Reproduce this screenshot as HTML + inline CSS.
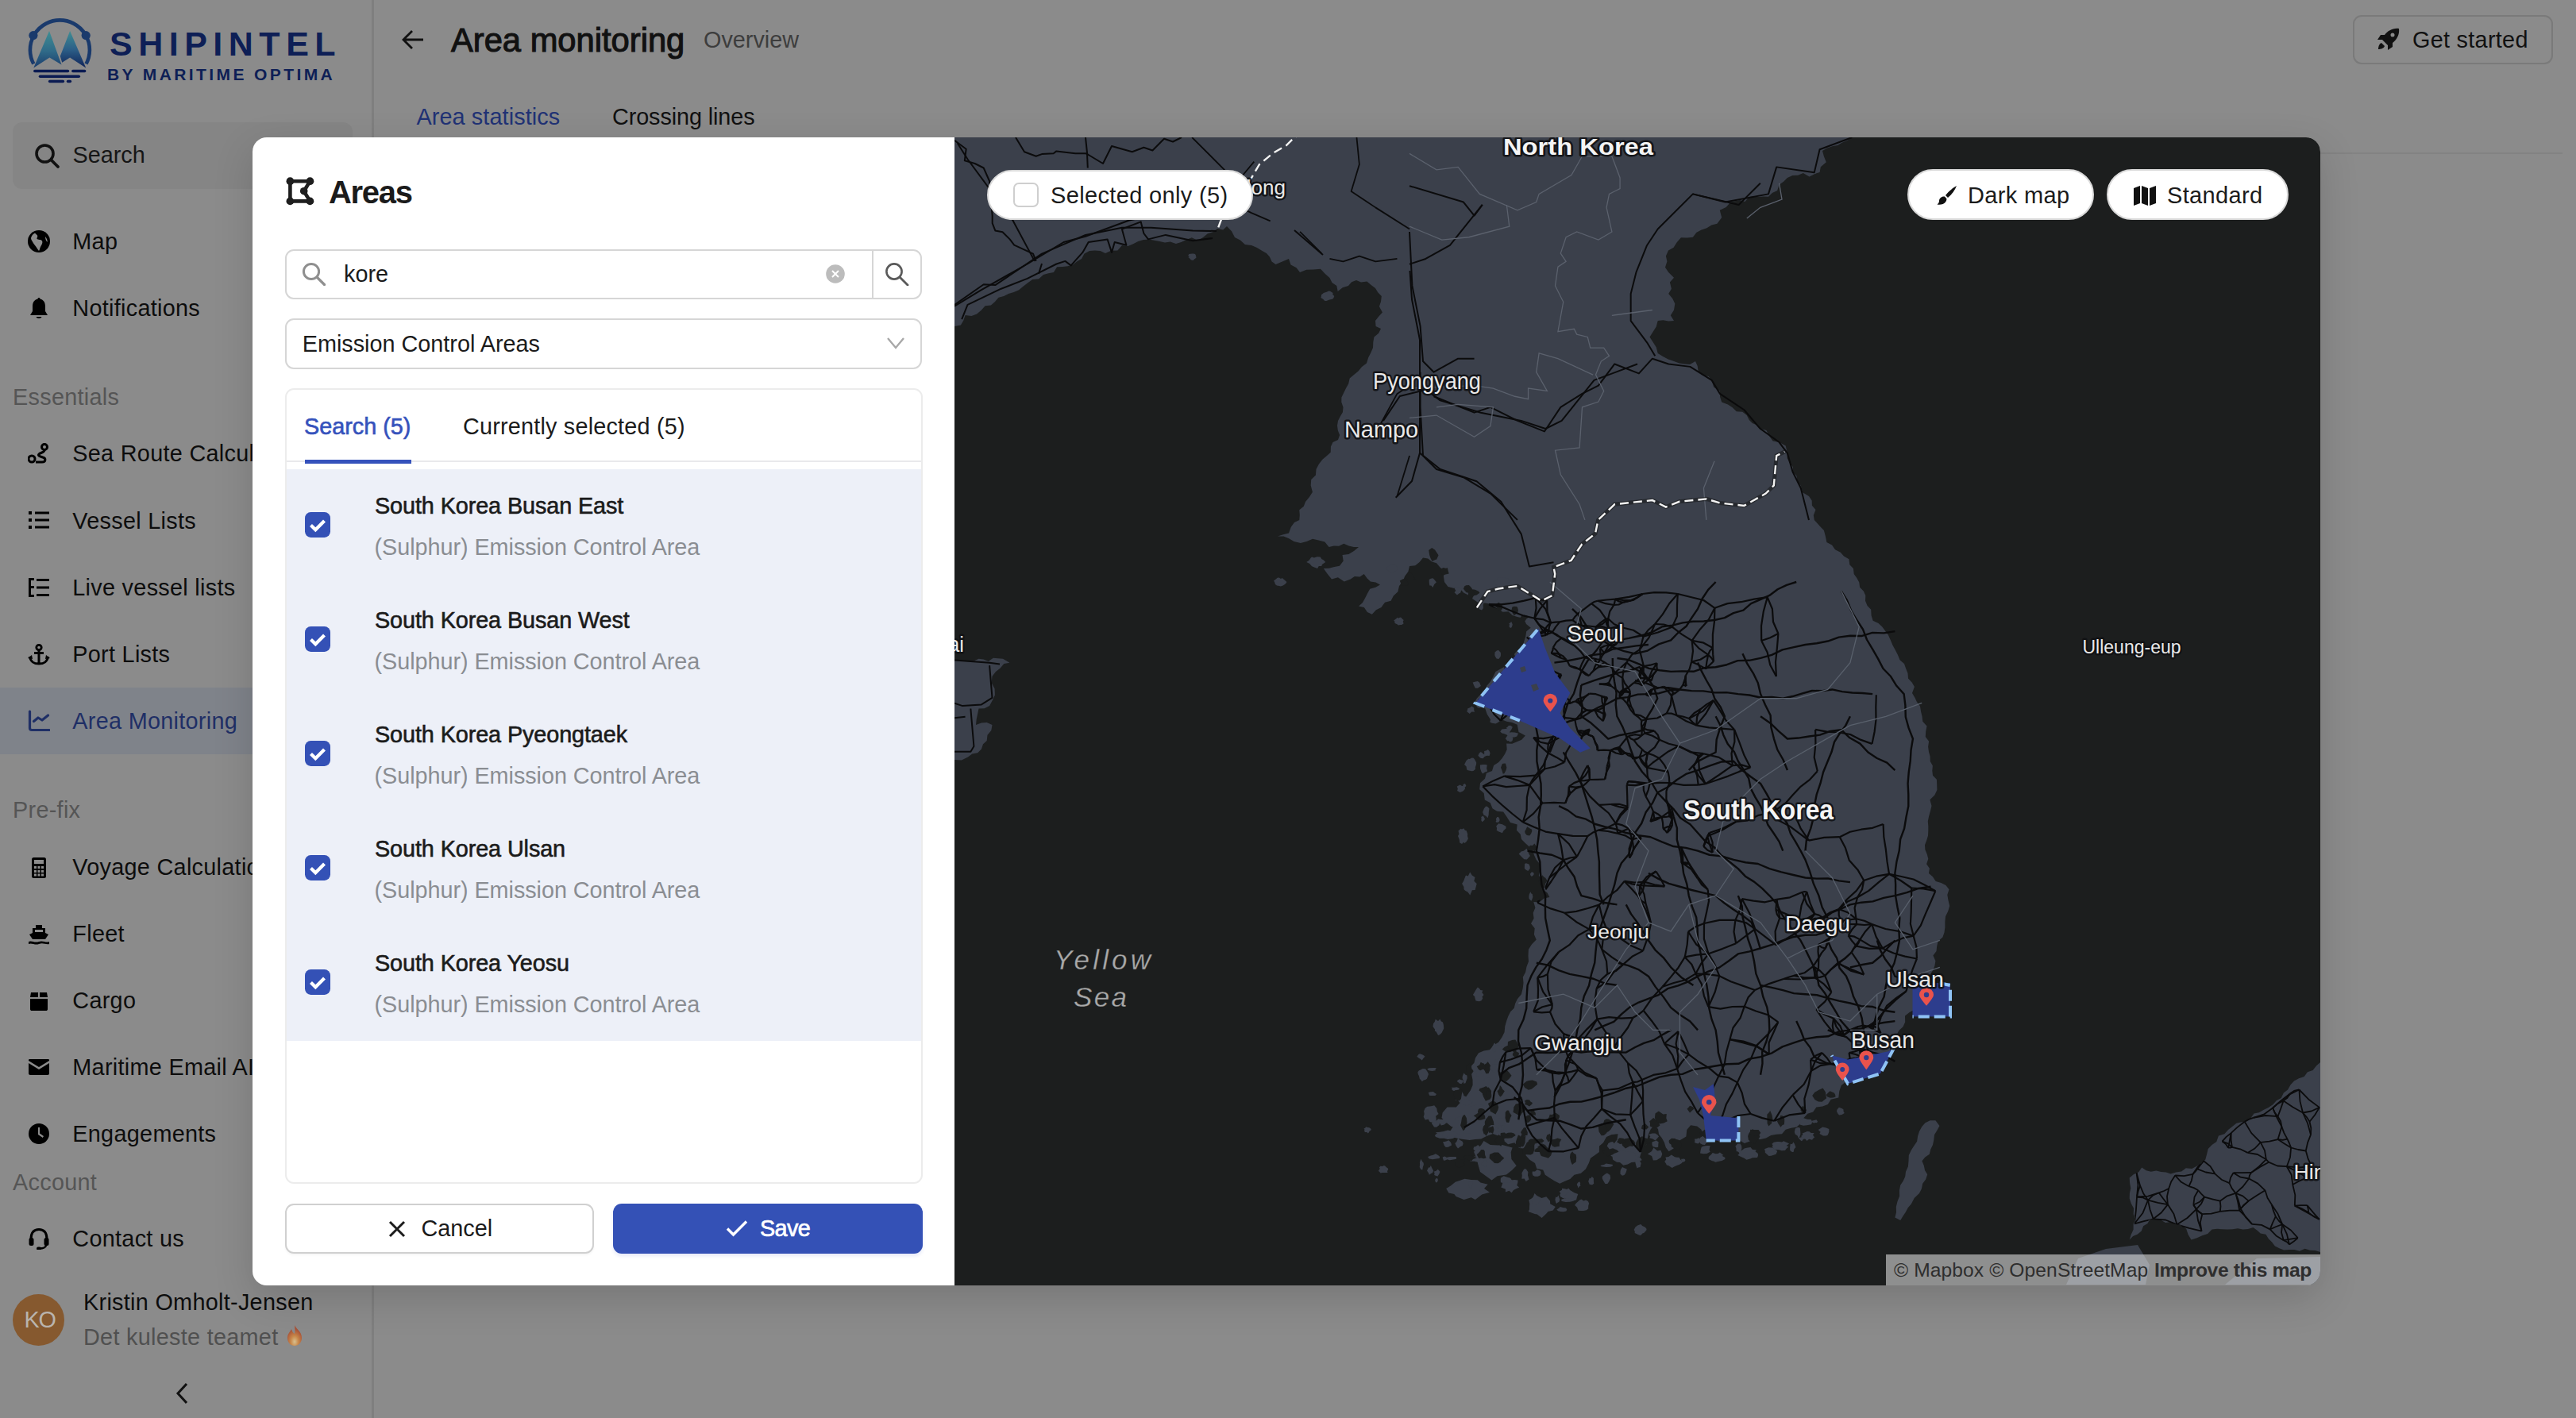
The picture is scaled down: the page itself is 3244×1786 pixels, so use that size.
<!DOCTYPE html>
<html><head><meta charset="utf-8"><style>
html,body{margin:0;padding:0;width:3244px;height:1786px;overflow:hidden;background:#fff;}
body{font-family:"Liberation Sans",sans-serif;position:relative;}
.t{position:absolute;line-height:1;white-space:nowrap;}
.r{position:absolute;box-sizing:border-box;}
svg{position:absolute;}
</style></head><body>
<div class="r" style="left:0;top:0;width:3244px;height:1786px;background:#8b8b8b"></div>
<div class="r" style="left:468px;top:0px;width:3px;height:1786px;background:#7f7f7f"></div>
<svg style="left:25px;top:15px" width="110" height="100" viewBox="0 0 110 100">
<defs><linearGradient id="lg1" x1="0" y1="0" x2="0" y2="1"><stop offset="0" stop-color="#3f8e93"/><stop offset="0.55" stop-color="#2f6a88"/><stop offset="1" stop-color="#1b3c6c"/></linearGradient>
<linearGradient id="lg2" x1="0" y1="0" x2="0" y2="1"><stop offset="0" stop-color="#3f8e93"/><stop offset="0.5" stop-color="#2c5f88"/><stop offset="1" stop-color="#0f2358"/></linearGradient></defs>
<path d="M17.3 65.5 A37.5 37.5 0 1 1 83.5 65.5" fill="none" stroke="#1a3a6c" stroke-width="4.6"/>
<circle cx="16.9" cy="29.6" r="5.6" fill="#1a3a6c"/><circle cx="83.2" cy="29.6" r="5.6" fill="#1a3a6c"/>
<polygon points="17.3,70.5 37,24 52.5,66.5 37.4,57.5" fill="url(#lg1)"/>
<polygon points="50.8,55.7 63.1,24 83.2,70.5 63.1,57.5 53.2,63.8" fill="url(#lg2)"/>
<g stroke="#0b1b52" stroke-width="3.5" stroke-linecap="round">
<line x1="18.8" y1="74.6" x2="60.5" y2="74.6"/><line x1="66.8" y1="74.6" x2="81.6" y2="74.6"/>
<line x1="25.5" y1="81.3" x2="74.3" y2="81.3"/>
<line x1="37.6" y1="87.4" x2="54.4" y2="87.4"/><line x1="60.5" y1="87.4" x2="63.4" y2="87.4"/>
</g></svg>
<div class="t" style="left:138px;top:34.1px;font-size:43px;color:#0e1f56;font-weight:700;letter-spacing:7.5px;">SHIPINTEL</div>
<div class="t" style="left:135px;top:82.9px;font-size:21px;color:#0e1f56;font-weight:700;letter-spacing:3.4px;">BY MARITIME OPTIMA</div>
<div class="r" style="left:16px;top:154px;width:428px;height:84px;background:#858585;border-radius:12px"></div>
<svg style="left:43px;top:180px" width="33" height="33" viewBox="0 0 33 33"><circle cx="13.5" cy="13.5" r="10.5" fill="none" stroke="#111" stroke-width="3.6"/><line x1="21.5" y1="21.5" x2="30" y2="30" stroke="#111" stroke-width="3.8" stroke-linecap="round"/></svg>
<div class="t" style="left:91.5px;top:181.1px;font-size:28.8px;color:#161616;font-weight:400;letter-spacing:0px;">Search</div>
<div class="r" style="left:0px;top:866px;width:468px;height:84px;background:#7f838a"></div>
<svg style="left:35px;top:290.3px" width="28" height="28" viewBox="0 0 28 28"><circle cx="14" cy="14" r="14" fill="#000"/><path d="M9 3.5 C11 6 13 5.5 12 9 C10 11 13 12 16 12 C19 13 19 16 17 19 C15 22 15 25 14 26 C12 24 11 21 9 19 C7 17 6 14 4.5 12 C3 9 6 5 9 3.5Z M22 8 C24 10 25 13 24.5 15 C23 13 22 11 22 8Z" fill="#8b8b8b"/></svg>
<div class="t" style="left:91.3px;top:289.9px;font-size:28.8px;color:#0d0d0d;font-weight:400;letter-spacing:0.3px;">Map</div>
<svg style="left:35px;top:374px" width="28" height="28" viewBox="0 0 28 28"><path d="M14 1 C15 1 15.5 1.7 15.5 2.5 C20 3.5 22 7 22 12 L22 18 L25 23 L3 23 L6 18 L6 12 C6 7 8 3.5 12.5 2.5 C12.5 1.7 13 1 14 1Z M10.5 25 L17.5 25 C17 27.5 11 27.5 10.5 25Z" fill="#000"/></svg>
<div class="t" style="left:91.3px;top:373.6px;font-size:28.8px;color:#0d0d0d;font-weight:400;letter-spacing:0.3px;">Notifications</div>
<svg style="left:35px;top:557.8px" width="28" height="28" viewBox="0 0 28 28"><circle cx="5" cy="20" r="4" fill="none" stroke="#000" stroke-width="3"/><circle cx="21" cy="5" r="3.5" fill="none" stroke="#000" stroke-width="3"/><path d="M21 9 C21 12 16 12 14 14 C12 16 16 17 19 18 C23 19 23 24 18 24 L10 24" fill="none" stroke="#000" stroke-width="3"/></svg>
<div class="t" style="left:91.3px;top:557.4px;font-size:28.8px;color:#0d0d0d;font-weight:400;letter-spacing:0.3px;">Sea Route Calculator</div>
<svg style="left:35px;top:642.2px" width="28" height="28" viewBox="0 0 28 28"><g fill="#000"><rect x="1" y="2" width="4" height="4"/><rect x="1" y="11" width="4" height="4"/><rect x="1" y="20" width="4" height="4"/><rect x="9" y="2.5" width="18" height="3"/><rect x="9" y="11.5" width="18" height="3"/><rect x="9" y="20.5" width="18" height="3"/></g></svg>
<div class="t" style="left:91.3px;top:641.8px;font-size:28.8px;color:#0d0d0d;font-weight:400;letter-spacing:0.3px;">Vessel Lists</div>
<svg style="left:35px;top:726.5px" width="28" height="28" viewBox="0 0 28 28"><g fill="#000"><rect x="1" y="1" width="3" height="24"/><rect x="1" y="22" width="7" height="3"/><rect x="1" y="11" width="7" height="3"/><rect x="1" y="1" width="7" height="3"/><rect x="11" y="2" width="16" height="3"/><rect x="11" y="11.5" width="16" height="3"/><rect x="11" y="21" width="16" height="3"/></g></svg>
<div class="t" style="left:91.3px;top:726.1px;font-size:28.8px;color:#0d0d0d;font-weight:400;letter-spacing:0.3px;">Live vessel lists</div>
<svg style="left:35px;top:810.8px" width="28" height="28" viewBox="0 0 28 28"><circle cx="14" cy="4.5" r="3.2" fill="none" stroke="#000" stroke-width="2.8"/><path d="M14 8 L14 25 M8 11.5 L20 11.5 M2.5 16 C3 22 8 25 14 25 C20 25 25 22 25.5 16" fill="none" stroke="#000" stroke-width="3"/><path d="M0 18 L5 14 L6 19Z M28 18 L23 14 L22 19Z" fill="#000"/></svg>
<div class="t" style="left:91.3px;top:810.4px;font-size:28.8px;color:#0d0d0d;font-weight:400;letter-spacing:0.3px;">Port Lists</div>
<svg style="left:35px;top:894px" width="28" height="28" viewBox="0 0 28 28"><path d="M2.5 2 L2.5 23 Q2.5 25.5 5 25.5 L27 25.5" fill="none" stroke="#1f2f66" stroke-width="3.2" stroke-linecap="round"/><path d="M7.5 14.5 L13 10 L18 13 L25.5 7" fill="none" stroke="#1f2f66" stroke-width="3.2" stroke-linejoin="round" stroke-linecap="round"/></svg>
<div class="t" style="left:91.3px;top:893.6px;font-size:28.8px;color:#1f2f66;font-weight:400;letter-spacing:0.3px;">Area Monitoring</div>
<svg style="left:35px;top:1078.5px" width="28" height="28" viewBox="0 0 28 28"><rect x="5" y="1" width="18" height="26" rx="2.5" fill="#000"/><rect x="8" y="4" width="12" height="5" fill="#8b8b8b"/><g fill="#8b8b8b"><rect x="8" y="12" width="3" height="3"/><rect x="12.5" y="12" width="3" height="3"/><rect x="17" y="12" width="3" height="3"/><rect x="8" y="17" width="3" height="3"/><rect x="12.5" y="17" width="3" height="3"/><rect x="17" y="17" width="3" height="3"/><rect x="8" y="21.5" width="3" height="3"/><rect x="12.5" y="21.5" width="3" height="3"/><rect x="17" y="21.5" width="3" height="3"/></g></svg>
<div class="t" style="left:91.3px;top:1078.1px;font-size:28.8px;color:#0d0d0d;font-weight:400;letter-spacing:0.3px;">Voyage Calculation</div>
<svg style="left:35px;top:1162.5px" width="28" height="28" viewBox="0 0 28 28"><path d="M10 2 L18 2 L18 6 L22 6 L22 12 L26 14 L22 20 L6 20 L2 14 L6 12 L6 6 L10 6Z" fill="#000"/><path d="M1 23 C5 21 8 25 14 23 C19 21 23 25 27 23 L27 26 C23 27 19 24 14 26 C9 28 5 24 1 26Z" fill="#000"/><rect x="9" y="8" width="10" height="3" fill="#8b8b8b"/></svg>
<div class="t" style="left:91.3px;top:1162.1px;font-size:28.8px;color:#0d0d0d;font-weight:400;letter-spacing:0.3px;">Fleet</div>
<svg style="left:35px;top:1246.5px" width="28" height="28" viewBox="0 0 28 28"><path d="M3 11 L25 11 L25 24 C25 25.5 24 26 23 26 L5 26 C4 26 3 25.5 3 24Z M4 3 L13 3 L13 9 L3 9Z M15 3 L24 3 L25 9 L15 9Z" fill="#000"/></svg>
<div class="t" style="left:91.3px;top:1246.1px;font-size:28.8px;color:#0d0d0d;font-weight:400;letter-spacing:0.3px;">Cargo</div>
<svg style="left:35px;top:1330.3px" width="28" height="28" viewBox="0 0 28 28"><path d="M2 4 L26 4 C27 4 27 5 27 6 L14 14 L1 6 C1 5 1 4 2 4Z M1 9 L14 17 L27 9 L27 22 C27 23 26 24 25 24 L3 24 C2 24 1 23 1 22Z" fill="#000"/></svg>
<div class="t" style="left:91.3px;top:1329.9px;font-size:28.8px;color:#0d0d0d;font-weight:400;letter-spacing:0.3px;">Maritime Email AI</div>
<svg style="left:35px;top:1414.3px" width="28" height="28" viewBox="0 0 28 28"><circle cx="14" cy="14" r="13" fill="#000"/><path d="M13 6 L15 6 L15 13.5 L20 17 L18.8 19 L13 15Z" fill="#8b8b8b"/></svg>
<div class="t" style="left:91.3px;top:1413.9px;font-size:28.8px;color:#0d0d0d;font-weight:400;letter-spacing:0.3px;">Engagements</div>
<svg style="left:35px;top:1546px" width="28" height="28" viewBox="0 0 28 28"><path d="M4 15 C4 6 8 2.5 14 2.5 C20 2.5 24 6 24 15" fill="none" stroke="#000" stroke-width="3"/><rect x="1.5" y="13" width="6" height="10" rx="2.5" fill="#000"/><rect x="20.5" y="13" width="6" height="10" rx="2.5" fill="#000"/><path d="M23 22 C23 25 19 26.5 15 26.5" fill="none" stroke="#000" stroke-width="2.5"/><rect x="11" y="24.5" width="6" height="4" rx="2" fill="#000"/></svg>
<div class="t" style="left:91.3px;top:1545.6px;font-size:28.8px;color:#0d0d0d;font-weight:400;letter-spacing:0.3px;">Contact us</div>
<div class="t" style="left:16px;top:485.6px;font-size:28.8px;color:#555555;font-weight:400;letter-spacing:0.3px;">Essentials</div>
<div class="t" style="left:16px;top:1006.1px;font-size:28.8px;color:#555555;font-weight:400;letter-spacing:0.3px;">Pre-fix</div>
<div class="t" style="left:16px;top:1474.6px;font-size:28.8px;color:#555555;font-weight:400;letter-spacing:0.3px;">Account</div>
<div class="r" style="left:16px;top:1630px;width:65px;height:65px;border-radius:50%;background:#86592f"></div>
<div class="t" style="left:30.5px;top:1648.1px;font-size:28.8px;color:#b9b4ae;font-weight:400;letter-spacing:-1.2px;">KO</div>
<div class="t" style="left:105px;top:1625.6px;font-size:28.8px;color:#0d0d0d;font-weight:400;letter-spacing:0.3px;">Kristin Omholt-Jensen</div>
<div class="t" style="left:105px;top:1669.6px;font-size:28.8px;color:#505050;font-weight:400;letter-spacing:0.3px;">Det kuleste teamet</div>
<svg style="left:359px;top:1668px" width="24" height="28" viewBox="0 0 24 28"><defs><radialGradient id="fl" cx="0.5" cy="0.8" r="0.6"><stop offset="0" stop-color="#d8c090"/><stop offset="0.45" stop-color="#c8884a"/><stop offset="1" stop-color="#a85238"/></radialGradient></defs><path d="M12 1 C14 6 21 9 21 17 C21 23 17 27 12 27 C7 27 3 23 3 17 C3 12 6 10 8 6 C9 9 10 11 12 12 C13 8 12 5 12 1Z" fill="url(#fl)"/></svg>
<svg style="left:218px;top:1740px" width="24" height="30" viewBox="0 0 24 30"><path d="M17 3 L6 15 L17 27" fill="none" stroke="#111" stroke-width="3"/></svg>
<svg style="left:504px;top:34px" width="32" height="32" viewBox="0 0 32 32"><path d="M29 16 L4 16 M15 5 L4 16 L15 27" fill="none" stroke="#111" stroke-width="2.8"/></svg>
<div class="t" style="left:568px;top:29.9px;font-size:41.7px;color:#111;font-weight:400;letter-spacing:0px;-webkit-text-stroke:1.1px #111">Area monitoring</div>
<div class="t" style="left:886px;top:35.6px;font-size:28.8px;color:#3d3d3d;font-weight:400;letter-spacing:0px;">Overview</div>
<div class="t" style="left:524.5px;top:133.4px;font-size:28.8px;color:#213275;font-weight:400;letter-spacing:0.1px;">Area statistics</div>
<div class="t" style="left:771px;top:133.4px;font-size:28.8px;color:#111;font-weight:400;letter-spacing:-0.1px;">Crossing lines</div>
<div class="r" style="left:471px;top:192px;width:2756px;height:2px;background:#838383"></div>
<div class="r" style="left:2963px;top:19px;width:252px;height:62px;border:2px solid #7a7a7a;border-radius:11px"></div>
<svg style="left:2993px;top:34px" width="30" height="30" viewBox="0 0 30 30"><path d="M28 2 C20 1 14 5 10 10 L5 10 L1 16 L7 16 L14 23 L14 29 L20 25 L20 20 C25 16 29 10 28 2Z" fill="#111"/><circle cx="20" cy="10" r="2.5" fill="#8b8b8b"/><path d="M6 20 C3 21 2 25 2 28 C5 28 9 27 10 24Z" fill="#111"/></svg>
<div class="t" style="left:3038px;top:36.1px;font-size:28.8px;color:#111;font-weight:400;letter-spacing:0.3px;">Get started</div>
<div class="r" style="left:318px;top:173px;width:2604px;height:1446px;border-radius:18px;box-shadow:0 16px 50px rgba(0,0,0,0.15);background:#fff"></div>
<svg style="left:358px;top:222px" width="40" height="38" viewBox="0 0 40 38"><path d="M7.4 6.2 L32.4 6.2 L24.7 18.7 L32.4 31.4 L7.4 31.4 Z" fill="none" stroke="#1e1e1e" stroke-width="4.6" stroke-linejoin="round"/><g fill="#1e1e1e"><circle cx="7.4" cy="6.2" r="4.9"/><circle cx="32.4" cy="6.2" r="4.9"/><circle cx="32.4" cy="31.4" r="4.9"/><circle cx="7.4" cy="31.4" r="4.9"/><circle cx="24.7" cy="18.7" r="4.8"/></g></svg>
<div class="t" style="left:414px;top:222.1px;font-size:40px;color:#1b1b1b;font-weight:700;letter-spacing:-1.3px;">Areas</div>
<div class="r" style="left:359px;top:314px;width:802px;height:63px;border:2px solid #d6d6d6;border-radius:11px;background:#fff"></div>
<div class="r" style="left:1098px;top:315px;width:2px;height:61px;background:#d6d6d6"></div>
<svg style="left:380px;top:330px" width="32" height="30" viewBox="0 0 32 30"><circle cx="12" cy="12" r="9.6" fill="none" stroke="#8f8f8f" stroke-width="3"/><line x1="19" y1="19" x2="28.5" y2="28.5" stroke="#8f8f8f" stroke-width="3.2" stroke-linecap="round"/></svg>
<div class="t" style="left:433px;top:330.6px;font-size:28.8px;color:#1b1b1b;font-weight:400;letter-spacing:0px;">kore</div>
<svg style="left:1039px;top:332px" width="26" height="26" viewBox="0 0 26 26"><circle cx="13" cy="13" r="11.8" fill="#bcbcbc"/><path d="M9 9 L17 17 M17 9 L9 17" stroke="#fff" stroke-width="2"/></svg>
<svg style="left:1114px;top:330px" width="32" height="30" viewBox="0 0 32 30"><circle cx="12" cy="12" r="9.6" fill="none" stroke="#5a5a5a" stroke-width="2.6"/><line x1="19" y1="19" x2="29" y2="29" stroke="#5a5a5a" stroke-width="2.8" stroke-linecap="round"/></svg>
<div class="r" style="left:359px;top:401px;width:802px;height:64px;border:2px solid #d6d6d6;border-radius:11px;background:#fff"></div>
<div class="t" style="left:380.7px;top:418.6px;font-size:28.8px;color:#1b1b1b;font-weight:400;letter-spacing:0px;">Emission Control Areas</div>
<svg style="left:1115px;top:423px" width="26" height="20" viewBox="0 0 26 20"><path d="M3 3 L13 15 L23 3" fill="none" stroke="#a8a8a8" stroke-width="2.4"/></svg>
<div class="r" style="left:359px;top:489px;width:803px;height:1002px;border:2px solid #ececec;border-radius:11px;background:#fff"></div>
<div class="t" style="left:383px;top:522.6px;font-size:28.8px;color:#3552bc;font-weight:400;letter-spacing:0px;-webkit-text-stroke:0.6px #3552bc">Search (5)</div>
<div class="t" style="left:583px;top:522.6px;font-size:28.8px;color:#1b1b1b;font-weight:400;letter-spacing:0.2px;">Currently selected (5)</div>
<div class="r" style="left:361px;top:580px;width:799px;height:2px;background:#e9e9ec"></div>
<div class="r" style="left:384px;top:579px;width:134px;height:5px;background:#3552bc"></div>
<div class="r" style="left:361px;top:591px;width:799px;height:720px;background:#edf0f8"></div>
<svg style="left:384px;top:645px" width="32" height="32" viewBox="0 0 32 32"><rect x="0" y="0" width="32" height="32" rx="7.4" fill="#3451b6"/><path d="M7.5 16.5 L13.3 22.3 L24.5 11.1" fill="none" stroke="#fff" stroke-width="4.2"/></svg>
<div class="t" style="left:472px;top:622.8px;font-size:28.8px;color:#1b1b1b;font-weight:400;letter-spacing:-0.1px;-webkit-text-stroke:0.6px #1b1b1b">South Korea Busan East</div>
<div class="t" style="left:471.5px;top:675.0px;font-size:28.8px;color:#8a8d92;font-weight:400;letter-spacing:-0.05px;">(Sulphur) Emission Control Area</div>
<svg style="left:384px;top:789px" width="32" height="32" viewBox="0 0 32 32"><rect x="0" y="0" width="32" height="32" rx="7.4" fill="#3451b6"/><path d="M7.5 16.5 L13.3 22.3 L24.5 11.1" fill="none" stroke="#fff" stroke-width="4.2"/></svg>
<div class="t" style="left:472px;top:766.8px;font-size:28.8px;color:#1b1b1b;font-weight:400;letter-spacing:-0.1px;-webkit-text-stroke:0.6px #1b1b1b">South Korea Busan West</div>
<div class="t" style="left:471.5px;top:819.0px;font-size:28.8px;color:#8a8d92;font-weight:400;letter-spacing:-0.05px;">(Sulphur) Emission Control Area</div>
<svg style="left:384px;top:933px" width="32" height="32" viewBox="0 0 32 32"><rect x="0" y="0" width="32" height="32" rx="7.4" fill="#3451b6"/><path d="M7.5 16.5 L13.3 22.3 L24.5 11.1" fill="none" stroke="#fff" stroke-width="4.2"/></svg>
<div class="t" style="left:472px;top:910.8px;font-size:28.8px;color:#1b1b1b;font-weight:400;letter-spacing:-0.1px;-webkit-text-stroke:0.6px #1b1b1b">South Korea Pyeongtaek</div>
<div class="t" style="left:471.5px;top:963.0px;font-size:28.8px;color:#8a8d92;font-weight:400;letter-spacing:-0.05px;">(Sulphur) Emission Control Area</div>
<svg style="left:384px;top:1077px" width="32" height="32" viewBox="0 0 32 32"><rect x="0" y="0" width="32" height="32" rx="7.4" fill="#3451b6"/><path d="M7.5 16.5 L13.3 22.3 L24.5 11.1" fill="none" stroke="#fff" stroke-width="4.2"/></svg>
<div class="t" style="left:472px;top:1054.8px;font-size:28.8px;color:#1b1b1b;font-weight:400;letter-spacing:-0.1px;-webkit-text-stroke:0.6px #1b1b1b">South Korea Ulsan</div>
<div class="t" style="left:471.5px;top:1107.0px;font-size:28.8px;color:#8a8d92;font-weight:400;letter-spacing:-0.05px;">(Sulphur) Emission Control Area</div>
<svg style="left:384px;top:1221px" width="32" height="32" viewBox="0 0 32 32"><rect x="0" y="0" width="32" height="32" rx="7.4" fill="#3451b6"/><path d="M7.5 16.5 L13.3 22.3 L24.5 11.1" fill="none" stroke="#fff" stroke-width="4.2"/></svg>
<div class="t" style="left:472px;top:1198.8px;font-size:28.8px;color:#1b1b1b;font-weight:400;letter-spacing:-0.1px;-webkit-text-stroke:0.6px #1b1b1b">South Korea Yeosu</div>
<div class="t" style="left:471.5px;top:1251.0px;font-size:28.8px;color:#8a8d92;font-weight:400;letter-spacing:-0.05px;">(Sulphur) Emission Control Area</div>
<div class="r" style="left:359px;top:1516px;width:389px;height:63px;border:2px solid #d0d0d0;border-radius:11px;background:#fff;box-shadow:0 2px 3px rgba(0,0,0,0.04)"></div>
<svg style="left:488px;top:1536px" width="24" height="24" viewBox="0 0 24 24"><path d="M3 3 L21 21 M21 3 L3 21" stroke="#1b1b1b" stroke-width="3"/></svg>
<div class="t" style="left:530.5px;top:1533.1px;font-size:28.8px;color:#1b1b1b;font-weight:400;letter-spacing:0px;">Cancel</div>
<div class="r" style="left:772px;top:1516px;width:390px;height:63px;border-radius:11px;background:#3451b6;box-shadow:0 3px 4px rgba(60,80,200,0.12)"></div>
<svg style="left:913px;top:1535px" width="30" height="24" viewBox="0 0 30 24"><path d="M3 12.5 L10.5 20 L27 3.5" fill="none" stroke="#fff" stroke-width="3.4"/></svg>
<div class="t" style="left:957px;top:1533.1px;font-size:28.8px;color:#fff;font-weight:400;letter-spacing:-0.6px;-webkit-text-stroke:0.7px #fff">Save</div>
<div class="r" style="left:1202px;top:173px;width:1720px;height:1446px;background:#1c1e1e;border-radius:0 18px 18px 0;overflow:hidden">
<svg style="left:0;top:0" width="1720" height="1446" viewBox="0 0 1720 1446">
<polygon points="0.0,0.0 1130.0,0.0 1124.3,3.9 1118.0,6.4 1112.2,10.0 1105.3,11.3 1098.9,13.6 1093.0,17.0 1094.9,24.1 1097.8,31.3 1090.8,37.3 1089.6,44.0 1083.0,46.2 1076.5,49.4 1068.8,45.0 1062.2,47.7 1055.3,48.0 1048.8,51.0 1044.1,55.8 1038.5,59.8 1036.2,67.0 1029.8,70.1 1025.0,74.8 1018.9,74.4 1012.9,75.1 1006.7,74.3 1000.7,74.9 995.5,81.0 989.2,79.1 983.3,80.2 977.4,81.6 971.7,88.1 963.8,91.8 966.2,101.1 960.4,108.8 953.3,110.5 947.4,114.3 940.7,116.6 934.5,119.8 929.8,125.7 922.5,126.4 914.9,126.3 909.5,132.5 905.6,138.7 899.0,142.6 895.9,149.5 897.4,156.3 895.0,163.7 899.2,170.0 906.0,176.7 900.9,182.5 902.9,190.7 899.2,197.0 904.2,202.9 907.3,209.5 906.0,217.5 901.8,224.2 906.0,231.0 899.2,231.5 892.5,230.3 885.7,231.0 883.7,238.5 879.6,245.0 875.5,251.5 879.7,257.9 883.8,264.4 885.7,271.9 892.2,275.9 898.8,279.5 906.0,282.0 912.8,284.6 919.5,285.6 926.2,286.1 933.0,282.0 935.7,288.0 936.8,295.4 941.8,299.4 949.6,301.0 953.6,305.9 956.1,314.6 963.8,319.5 964.1,327.0 966.2,333.4 974.0,336.4 979.7,340.2 984.8,345.2 992.3,345.8 997.8,350.0 1000.6,355.7 1004.7,360.1 1010.9,362.4 1014.8,367.0 1022.4,369.0 1026.1,376.3 1030.6,382.6 1038.6,384.0 1046.7,388.6 1048.8,397.6 1048.7,404.1 1051.5,409.7 1055.8,414.9 1055.6,421.4 1060.4,426.2 1061.4,433.4 1065.8,438.4 1068.2,447.2 1076.0,452.0 1079.7,457.5 1079.9,463.7 1084.5,469.0 1081.8,475.9 1082.8,482.0 1090.0,490.0 1094.9,495.0 1096.8,502.3 1098.4,509.9 1105.0,513.5 1109.0,519.2 1115.8,522.7 1120.0,527.6 1126.4,531.2 1127.3,538.2 1131.9,542.9 1132.7,549.9 1136.3,555.0 1139.3,560.4 1140.1,566.7 1144.8,571.4 1147.3,577.0 1147.0,583.8 1149.6,589.9 1154.2,594.7 1154.6,602.2 1156.6,608.7 1163.5,611.9 1168.3,616.5 1172.2,621.7 1176.0,627.0 1178.8,633.3 1181.5,639.7 1184.8,645.7 1187.9,651.8 1190.5,658.2 1196.0,663.0 1198.1,669.0 1200.5,674.9 1201.0,681.4 1205.7,686.5 1208.9,692.1 1206.0,699.9 1209.3,705.5 1212.0,711.3 1216.0,716.6 1217.0,723.0 1218.5,729.3 1219.3,735.8 1224.5,741.4 1223.2,748.3 1222.8,755.0 1227.1,760.7 1226.1,767.6 1227.0,774.0 1228.6,779.8 1228.8,785.9 1231.9,791.4 1231.3,797.7 1232.0,803.7 1236.9,808.7 1237.2,814.8 1237.4,822.1 1234.3,828.5 1228.4,834.2 1230.5,842.0 1228.9,848.8 1227.0,855.5 1225.8,861.4 1226.3,867.5 1226.3,873.6 1226.0,879.6 1224.2,885.4 1222.0,891.2 1222.4,897.2 1224.8,902.9 1226.3,908.8 1224.1,915.2 1227.9,920.7 1227.0,926.9 1231.9,931.3 1235.7,936.9 1242.5,938.9 1248.4,942.0 1252.5,947.3 1250.3,953.9 1251.5,961.0 1253.2,968.1 1251.2,974.8 1248.0,981.3 1247.4,988.1 1247.4,994.9 1246.5,1001.4 1244.4,1007.5 1238.6,1012.4 1237.2,1018.7 1236.5,1024.9 1232.4,1030.5 1235.4,1037.3 1234.4,1043.4 1232.1,1049.3 1228.3,1055.1 1222.4,1059.8 1221.4,1066.9 1220.7,1074.2 1216.9,1079.9 1214.5,1086.2 1211.0,1091.7 1209.4,1098.5 1202.7,1102.1 1197.0,1106.4 1197.2,1114.3 1194.5,1120.3 1189.3,1124.9 1186.3,1130.8 1182.9,1136.8 1177.9,1142.3 1178.2,1149.8 1176.0,1156.3 1172.0,1161.8 1167.9,1167.3 1160.4,1168.6 1156.6,1174.4 1151.3,1178.4 1145.5,1181.8 1139.9,1184.6 1134.4,1187.7 1128.8,1190.4 1121.9,1189.9 1116.8,1194.0 1114.3,1201.2 1113.3,1209.5 1103.7,1211.7 1099.8,1217.9 1093.2,1220.5 1085.4,1221.4 1081.2,1227.5 1074.3,1229.8 1069.5,1234.9 1065.8,1241.7 1060.7,1246.6 1053.5,1247.8 1046.7,1249.8 1042.0,1255.3 1035.0,1255.8 1028.2,1257.1 1021.9,1260.6 1015.0,1261.9 1008.0,1262.0 1001.4,1264.4 994.8,1267.0 988.0,1262.7 981.9,1262.4 975.9,1263.9 969.8,1260.8 963.7,1265.6 957.6,1261.2 951.6,1261.5 945.5,1262.7 942.8,1256.2 940.3,1249.5 935.1,1245.5 927.1,1244.3 922.3,1250.1 921.4,1258.5 914.3,1262.7 908.1,1266.2 905.6,1273.5 899.6,1277.3 895.8,1272.2 893.9,1266.1 890.9,1260.6 887.0,1255.5 886.0,1248.9 881.3,1244.3 876.8,1249.2 874.0,1255.3 872.6,1261.5 872.3,1268.1 866.0,1272.4 864.8,1278.7 863.0,1284.7 856.4,1283.7 850.7,1287.0 844.6,1288.3 837.8,1288.7 832.1,1285.6 826.3,1282.8 830.5,1276.6 829.6,1268.6 834.4,1262.6 835.5,1255.3 827.7,1256.1 821.0,1259.0 817.0,1266.3 812.0,1270.5 811.9,1278.1 806.4,1281.9 801.0,1285.8 798.8,1292.0 794.9,1299.6 788.9,1304.7 780.5,1306.7 775.3,1311.9 768.7,1314.7 762.2,1317.7 755.8,1314.5 749.7,1310.8 743.8,1306.7 741.2,1300.4 733.2,1298.7 731.0,1292.0 724.4,1287.7 719.5,1282.3 720.0,1273.7 711.1,1273.0 705.3,1266.3 697.1,1268.3 690.7,1262.7 684.6,1257.5 678.0,1254.9 670.0,1258.0 663.1,1261.6 655.8,1262.0 648.5,1262.9 641.0,1262.0 634.2,1261.0 627.7,1259.2 622.0,1255.0 625.6,1249.6 629.2,1244.3 630.6,1237.8 631.7,1231.1 635.6,1225.9 640.0,1221.0 640.7,1212.7 645.6,1206.5 650.0,1200.0 652.6,1193.8 652.5,1187.0 651.1,1180.0 655.0,1174.0 654.2,1166.5 656.0,1159.6 660.0,1153.3 666.6,1150.5 674.0,1149.2 679.0,1143.5 685.1,1139.7 689.4,1133.6 692.6,1127.0 693.3,1119.5 695.3,1112.5 697.4,1106.8 700.2,1101.3 704.7,1096.8 706.2,1090.8 708.9,1085.3 713.9,1079.3 715.7,1071.8 716.5,1064.9 715.8,1057.8 719.1,1051.4 720.5,1044.6 723.0,1038.1 722.5,1031.0 722.9,1022.7 727.1,1016.3 732.7,1010.6 729.9,1004.0 730.7,996.2 726.0,990.2 729.6,983.7 728.7,976.7 731.4,970.2 729.3,963.0 736.6,963.2 742.5,958.4 749.4,957.0 746.5,951.6 740.9,947.6 742.0,940.3 739.5,934.7 735.8,929.8 737.6,922.5 737.4,915.6 732.4,909.5 729.9,903.8 728.1,897.6 723.6,893.3 718.9,889.0 714.0,884.1 712.7,877.7 707.9,872.7 708.7,865.4 700.0,862.9 695.1,855.2 691.1,849.6 683.2,848.8 677.5,845.3 674.8,838.2 667.8,834.5 666.7,826.1 661.2,821.2 662.0,813.2 668.0,807.7 669.9,800.7 677.0,798.0 679.1,791.0 685.0,787.3 689.5,782.2 693.1,776.7 695.7,770.9 695.1,763.6 702.2,763.7 708.2,761.2 714.2,758.8 718.9,753.4 710.5,749.1 708.7,739.8 702.2,737.1 695.4,735.8 688.9,733.2 681.3,735.5 674.8,733.0 670.8,726.8 668.2,719.2 658.9,718.3 654.4,712.7 657.7,706.7 662.3,701.7 668.8,698.0 670.4,690.7 674.8,685.5 678.3,679.5 681.4,673.1 687.6,669.5 694.0,666.1 697.5,660.1 702.0,655.0 705.8,649.7 710.0,645.0 715.5,641.4 717.2,635.1 719.2,629.0 720.2,622.3 725.7,617.7 720.0,613.1 716.7,605.7 708.7,604.0 702.6,602.0 697.5,597.3 690.4,597.8 685.0,594.0 679.4,591.1 674.0,587.5 667.8,586.6 661.2,587.2 656.2,583.7 651.1,580.5 646.5,576.3 641.0,573.6 636.2,568.0 628.4,567.8 621.5,566.0 617.0,560.0 616.0,553.5 616.6,546.2 611.4,541.4 607.0,536.3 601.2,534.4 596.2,530.4 590.0,529.5 585.6,535.1 580.3,539.2 573.0,540.0 571.4,547.1 567.1,552.8 564.5,559.4 560.0,565.0 558.4,572.3 552.8,577.4 549.6,583.8 542.0,585.7 537.5,591.9 530.9,595.3 525.8,600.7 519.9,597.9 515.8,591.9 509.0,590.6 513.8,586.3 517.0,580.5 520.0,574.6 523.2,568.7 530.2,566.7 536.0,563.4 530.5,560.6 523.9,559.6 519.5,555.2 515.7,549.9 510.5,553.4 503.9,553.1 498.7,556.6 490.8,559.4 482.9,554.3 475.0,556.6 469.8,549.9 464.8,543.0 471.7,542.7 478.3,541.0 485.0,539.7 489.7,533.6 488.5,526.0 496.4,524.9 503.0,521.0 509.0,516.0 502.8,516.1 496.5,514.4 490.3,511.7 484.1,514.8 477.8,514.6 471.6,516.0 466.3,509.4 458.6,507.6 451.0,505.7 443.5,508.9 435.8,511.1 427.5,509.0 421.2,505.2 414.5,502.4 407.0,502.4 413.9,500.3 421.0,498.4 423.8,490.7 428.0,484.9 434.3,482.0 434.8,475.8 434.3,469.2 439.8,464.7 442.0,459.0 446.9,453.0 450.9,446.8 448.7,438.5 449.2,431.1 454.9,425.4 455.5,418.0 458.9,411.4 463.4,405.8 469.0,401.0 473.7,396.8 473.9,389.5 476.5,383.9 483.0,381.0 485.1,375.0 482.8,369.0 482.0,363.0 483.0,357.0 485.8,351.6 488.9,346.3 489.5,340.0 487.3,333.5 487.4,327.4 490.2,321.7 493.0,316.0 496.2,310.3 497.7,303.5 503.0,299.0 508.5,294.5 513.0,289.0 519.0,284.5 521.1,277.6 524.2,271.4 527.0,265.0 527.3,258.1 528.4,251.5 534.1,246.8 537.0,241.0 530.6,238.0 530.0,231.0 534.1,225.7 538.9,220.6 534.9,212.9 537.0,207.0 537.8,200.0 533.2,195.3 530.0,190.0 524.7,185.9 519.4,181.6 512.0,182.4 506.0,180.0 500.1,182.2 496.0,187.0 488.7,189.3 482.7,194.0 481.3,187.1 475.5,182.9 472.5,177.0 466.6,171.7 461.0,165.8 452.0,166.5 443.2,166.7 435.0,170.0 430.6,164.2 423.5,160.5 421.0,153.0 412.8,156.6 404.5,160.0 399.6,156.4 396.9,150.6 392.9,146.1 387.5,143.0 381.0,139.0 374.0,136.0 365.9,134.9 359.9,129.5 353.0,126.0 349.0,118.3 343.0,112.0 338.3,116.6 331.0,115.1 326.0,119.0 318.8,121.3 313.0,126.0 306.4,129.9 298.8,126.3 292.0,129.0 285.5,132.1 278.9,134.0 271.7,131.5 265.0,132.5 258.3,131.0 251.6,129.8 244.9,128.6 238.0,129.0 231.3,131.0 225.0,134.3 218.5,137.0 211.0,136.0 205.4,142.4 197.1,142.8 190.0,146.0 183.6,143.0 176.9,142.6 170.0,143.0 163.5,146.5 160.0,153.0 154.3,156.3 149.1,160.6 142.7,162.2 136.0,163.0 129.1,163.3 124.9,170.1 118.3,171.3 112.0,173.0 106.2,178.2 98.2,179.1 92.0,183.5 86.5,187.7 81.1,192.2 74.7,194.9 68.0,197.0 62.2,200.1 55.5,201.7 51.0,207.0 45.9,211.5 38.6,212.2 34.0,217.5 28.1,222.5 21.4,225.1 13.6,224.0 11.3,230.8 7.9,236.6 0.0,238.0" fill="#3b404b"/>
<polygon points="0.0,658.4 6.1,658.5 12.3,659.5 18.4,660.0 24.5,659.5 30.5,656.7 36.6,657.5 42.7,659.9 48.8,655.8 54.9,656.3 61.0,656.7 69.5,661.8 62.3,662.9 57.7,668.6 52.0,673.1 47.5,678.8 46.6,687.0 50.6,694.5 50.9,702.5 47.7,709.3 44.1,716.0 37.7,719.2 30.5,719.5 29.1,726.3 27.7,733.1 27.0,740.0 33.8,737.5 40.7,737.1 47.5,740.0 46.3,747.0 41.5,752.8 40.7,760.0 36.0,764.3 33.9,770.4 29.2,775.3 22.3,776.6 17.0,780.5 8.9,784.4 0.0,784.0" fill="#3b404b"/>
<polygon points="1235.4,1238.3 1240.5,1245.1 1237.4,1250.7 1234.0,1256.2 1233.3,1262.7 1232.0,1268.9 1229.3,1274.5 1227.8,1280.8 1222.3,1284.6 1218.4,1289.3 1220.8,1294.9 1222.0,1301.0 1225.2,1306.3 1223.1,1312.4 1219.2,1317.8 1217.9,1324.2 1215.0,1330.0 1208.7,1335.9 1204.8,1343.6 1200.7,1348.2 1197.8,1353.7 1194.4,1358.8 1191.2,1364.0 1184.4,1360.6 1186.0,1353.9 1185.8,1346.9 1187.5,1340.2 1190.1,1333.6 1189.9,1326.6 1191.2,1319.8 1194.7,1314.6 1197.2,1309.0 1198.0,1302.8 1200.9,1296.3 1201.5,1289.3 1201.8,1282.1 1204.8,1275.7 1208.3,1270.2 1212.1,1264.7 1213.1,1258.1 1215.0,1251.9 1218.3,1246.1 1222.5,1241.2 1228.6,1238.3" fill="#3b404b"/>
<polygon points="1720.0,1165.0 1714.9,1169.4 1710.6,1175.1 1703.9,1177.3 1699.7,1183.1 1693.0,1185.3 1687.0,1188.6 1682.4,1193.4 1679.1,1199.6 1673.8,1203.5 1670.7,1209.9 1664.7,1213.3 1660.3,1218.2 1654.6,1221.9 1648.4,1225.0 1642.9,1228.2 1636.5,1229.5 1632.4,1235.2 1627.4,1239.2 1620.8,1240.2 1614.4,1241.7 1609.4,1245.7 1604.0,1250.1 1599.3,1255.3 1591.9,1257.5 1589.3,1265.0 1583.5,1269.0 1578.7,1274.0 1577.1,1280.7 1575.3,1287.4 1570.5,1292.4 1564.4,1295.8 1558.3,1299.0 1550.8,1298.3 1545.1,1302.6 1538.2,1303.4 1531.6,1305.4 1525.6,1303.6 1519.4,1303.1 1513.4,1301.4 1506.8,1302.7 1500.8,1301.2 1495.2,1297.6 1491.2,1303.3 1484.8,1306.2 1479.7,1310.6 1480.1,1317.1 1481.3,1323.5 1479.9,1330.0 1479.7,1336.5 1481.9,1342.9 1485.1,1349.0 1484.7,1356.2 1487.5,1362.5 1484.6,1368.7 1484.6,1375.7 1481.7,1381.9 1479.7,1388.4 1484.1,1384.1 1490.0,1381.4 1494.8,1377.6 1497.1,1371.3 1502.5,1368.0 1505.6,1362.5 1512.4,1362.5 1518.9,1363.4 1525.0,1367.1 1532.0,1365.9 1538.2,1368.4 1544.6,1370.3 1551.2,1374.7 1553.6,1382.1 1557.5,1388.4 1564.6,1386.3 1571.2,1383.3 1578.1,1380.9 1583.5,1375.5 1590.0,1374.7 1596.5,1375.3 1603.0,1375.5 1609.5,1375.3 1616.0,1374.2 1622.5,1375.4 1629.0,1375.0 1635.4,1372.9 1640.3,1376.4 1644.7,1380.6 1651.4,1381.7 1654.8,1387.2 1659.1,1391.5 1662.9,1396.6 1668.4,1399.2 1674.3,1401.4 1680.9,1401.1 1687.4,1400.9 1693.9,1402.8 1700.6,1399.8 1707.0,1401.7 1713.6,1402.1 1720.0,1404.0" fill="#3b404b"/>
<polygon points="1400.0,1445.0 1415.0,1412.0 1450.0,1400.0 1490.0,1395.0 1505.0,1420.0 1500.0,1445.0" fill="#3b404b"/>
<polygon points="1600.0,1445.0 1640.0,1412.0 1720.0,1410.0 1720.0,1445.0" fill="#3b404b"/>
<polygon points="701.4,1287.0 707.7,1295.3 702.2,1300.7 695.0,1306.4 683.6,1308.2 676.5,1313.4 664.1,1304.5 662.0,1303.0 659.2,1293.3 658.0,1287.0 654.0,1277.7 663.0,1269.6 666.6,1264.1 674.8,1269.0 684.9,1269.4 689.8,1268.9 702.6,1272.4 700.7,1278.2" fill="#3b404b"/>
<polygon points="863.7,1285.0 865.8,1288.3 858.6,1290.6 852.7,1291.0 847.8,1293.6 842.3,1294.7 837.9,1290.9 834.0,1290.8 829.2,1287.7 828.6,1285.0 828.9,1282.7 831.7,1280.4 837.8,1277.0 841.6,1276.5 848.7,1277.5 853.5,1278.3 858.1,1279.4 857.7,1282.3" fill="#3b404b"/>
<polygon points="798.4,1345.0 798.1,1347.6 798.3,1349.2 795.8,1351.3 792.2,1352.0 789.3,1352.0 785.6,1351.8 784.5,1348.9 784.1,1347.8 781.1,1345.0 782.8,1342.6 785.1,1340.4 787.3,1338.6 789.3,1337.5 792.4,1339.5 795.1,1338.4 797.9,1339.9 799.2,1342.7" fill="#3b404b"/>
<polygon points="756.8,1347.0 753.7,1351.6 747.5,1353.1 745.4,1355.4 739.6,1361.1 733.7,1356.6 730.7,1356.0 722.7,1352.9 724.0,1350.3 724.0,1347.0 724.3,1343.1 723.3,1338.4 729.3,1335.1 734.1,1333.3 739.4,1336.0 745.3,1334.3 750.0,1339.4 750.2,1343.3" fill="#3b404b"/>
<polygon points="871.6,1376.0 870.3,1377.8 867.9,1380.3 867.0,1379.9 864.0,1383.1 862.0,1382.4 859.8,1381.6 856.7,1380.0 856.8,1377.9 855.6,1376.0 856.7,1374.0 857.5,1372.6 860.1,1370.6 862.0,1369.8 864.4,1369.1 866.1,1371.0 869.5,1372.4 871.2,1374.3" fill="#3b404b"/>
<polygon points="675.9,1235.0 673.0,1242.5 663.0,1248.1 656.9,1248.0 649.2,1255.0 641.3,1254.1 633.0,1248.0 625.8,1245.9 621.1,1242.3 613.5,1235.0 614.6,1228.5 620.5,1221.6 631.8,1221.4 639.5,1212.8 649.8,1220.7 660.1,1217.3 668.7,1220.7 675.2,1228.1" fill="#3b404b"/>
<polygon points="635.6,1256.0 629.7,1258.1 632.3,1258.5 627.6,1261.0 621.2,1262.1 616.6,1260.8 610.9,1260.7 606.1,1258.9 605.0,1257.4 605.7,1256.0 607.9,1254.4 605.7,1253.3 611.7,1252.7 616.1,1252.1 621.2,1250.5 626.3,1251.6 631.1,1252.8 632.6,1254.6" fill="#3b404b"/>
<polygon points="667.0,1324.0 673.9,1328.8 664.2,1331.6 655.8,1338.1 650.7,1335.2 641.6,1338.1 631.6,1334.0 629.3,1331.0 622.4,1329.4 619.2,1324.0 624.9,1320.5 630.7,1315.7 636.1,1314.0 642.4,1311.7 650.9,1312.9 658.7,1313.3 662.5,1316.5 671.7,1318.8" fill="#3b404b"/>
<polygon points="708.2,1320.0 711.2,1322.6 706.8,1324.4 704.0,1325.9 701.5,1329.3 698.5,1326.7 693.9,1328.4 693.9,1324.7 688.3,1322.6 689.4,1320.0 689.9,1317.9 691.5,1314.1 695.1,1313.6 698.1,1310.2 702.1,1313.3 705.6,1313.1 709.5,1313.6 709.3,1316.7" fill="#3b404b"/>
<polygon points="777.1,1330.0 777.7,1331.6 776.1,1334.7 774.1,1335.2 771.6,1335.8 768.8,1336.9 766.7,1336.2 762.7,1333.9 762.4,1331.6 763.3,1330.0 761.6,1327.8 765.0,1325.7 765.0,1323.8 768.5,1324.3 771.3,1325.1 773.1,1323.6 775.8,1326.4 777.5,1327.5" fill="#3b404b"/>
<polygon points="917.2,1290.0 915.9,1292.1 912.6,1294.0 910.1,1294.8 906.7,1296.3 903.7,1298.0 899.0,1295.0 896.8,1294.6 896.0,1292.5 894.2,1290.0 896.2,1287.6 895.4,1284.5 899.3,1284.1 902.9,1281.5 907.1,1284.2 909.8,1284.8 912.5,1284.7 914.4,1287.8" fill="#3b404b"/>
<polygon points="970.5,1285.0 970.3,1287.0 966.5,1289.1 963.8,1289.4 961.5,1290.1 958.3,1290.7 955.8,1289.6 954.1,1289.3 949.8,1286.9 949.6,1285.0 950.4,1283.2 952.9,1281.3 954.7,1279.1 958.7,1280.3 961.5,1279.9 963.9,1278.6 968.4,1282.1 966.4,1282.8" fill="#3b404b"/>
<polygon points="1011.9,1280.0 1012.0,1282.6 1011.0,1285.1 1005.0,1285.2 1002.0,1286.5 997.4,1287.7 994.1,1285.6 992.1,1284.7 986.3,1282.0 988.3,1280.0 988.1,1277.9 992.8,1275.1 994.6,1273.5 997.5,1272.8 1002.5,1272.1 1004.7,1274.7 1009.9,1275.5 1008.5,1277.2" fill="#3b404b"/>
<polygon points="1047.7,1270.0 1050.4,1271.6 1047.9,1273.4 1046.0,1276.1 1041.6,1276.2 1038.3,1275.3 1035.2,1274.9 1032.5,1274.7 1029.5,1271.6 1030.7,1270.0 1029.4,1267.8 1031.8,1265.8 1035.8,1265.0 1038.5,1265.0 1041.9,1265.5 1044.2,1264.3 1049.2,1266.5 1051.1,1267.6" fill="#3b404b"/>
<polygon points="1082.0,1258.0 1083.1,1259.5 1081.5,1260.7 1080.0,1262.7 1076.2,1261.8 1073.4,1263.9 1071.3,1261.5 1067.4,1261.8 1067.6,1259.4 1066.0,1258.0 1068.2,1256.4 1067.7,1254.4 1070.2,1253.4 1073.8,1252.0 1076.6,1252.2 1078.7,1254.1 1082.6,1254.1 1081.0,1256.6" fill="#3b404b"/>
<polygon points="609.6,1230.0 606.1,1232.8 606.9,1237.6 605.0,1239.4 601.5,1240.8 598.6,1240.1 596.7,1236.7 592.7,1237.4 590.7,1233.8 591.7,1230.0 591.1,1226.5 592.7,1222.7 595.4,1220.8 598.4,1220.5 601.5,1220.0 604.2,1219.3 607.3,1222.9 607.9,1227.0" fill="#3b404b"/>
<polygon points="597.0,1180.0 596.3,1182.1 594.9,1185.8 593.0,1186.9 590.9,1187.5 588.9,1189.3 586.9,1186.8 585.8,1185.8 584.9,1182.1 583.8,1180.0 583.4,1177.3 585.0,1175.2 587.0,1174.5 589.0,1173.3 591.0,1173.0 593.3,1173.5 594.4,1175.1 596.0,1177.4" fill="#3b404b"/>
<polygon points="616.1,1120.0 616.2,1122.6 615.1,1124.7 613.5,1128.1 611.1,1130.2 609.1,1131.0 606.6,1126.5 604.9,1125.6 605.0,1123.4 602.5,1120.0 603.0,1116.3 604.7,1114.1 605.7,1110.7 609.0,1112.9 611.5,1110.6 612.7,1113.3 614.9,1114.5 615.8,1117.2" fill="#3b404b"/>
<polygon points="666.6,1080.0 664.5,1082.5 665.2,1084.6 663.6,1087.3 661.0,1088.3 658.9,1087.9 656.5,1087.6 655.4,1083.9 655.2,1082.2 652.9,1080.0 654.7,1076.9 656.4,1074.0 657.7,1072.0 658.9,1070.6 661.2,1072.3 662.4,1074.1 665.4,1074.4 664.2,1076.9" fill="#3b404b"/>
<polygon points="657.7,940.0 656.6,944.2 655.6,947.9 651.9,948.2 649.3,954.6 646.3,950.4 643.4,948.9 641.6,947.3 641.4,944.0 639.1,940.0 641.1,936.7 643.4,930.7 644.0,929.6 646.7,930.5 649.2,925.4 651.8,929.4 655.5,931.9 654.3,936.8" fill="#3b404b"/>
<polygon points="646.0,880.0 646.9,883.3 644.8,887.1 642.4,888.9 640.9,887.8 639.1,889.9 636.3,888.6 635.8,884.7 635.0,882.6 634.0,880.0 635.4,877.4 634.5,873.6 637.6,870.8 639.0,871.6 641.2,870.3 642.9,872.7 644.7,873.2 646.2,877.6" fill="#3b404b"/>
<polygon points="697.9,560.0 698.9,562.5 698.1,563.9 696.1,564.6 692.0,565.7 688.1,567.3 684.2,565.5 681.2,562.9 680.9,562.4 678.7,560.0 681.9,558.1 682.6,556.9 683.9,554.4 688.2,555.0 691.6,554.3 694.1,555.2 697.1,555.7 701.3,558.5" fill="#3b404b"/>
<polygon points="657.0,790.0 655.9,793.3 656.0,795.8 653.4,798.1 651.4,798.2 649.0,797.7 645.7,797.1 645.0,795.5 644.6,792.5 642.0,790.0 643.8,786.6 644.6,785.0 647.2,782.7 648.8,783.0 651.5,781.6 653.6,781.8 655.1,783.6 657.2,787.4" fill="#3b404b"/>
<polygon points="564.7,610.0 565.4,611.4 565.5,612.5 563.1,614.0 561.2,614.1 559.0,614.5 557.4,613.3 555.6,612.6 554.1,611.3 554.6,610.0 553.2,608.6 556.2,606.3 557.7,604.8 558.9,605.7 561.2,604.4 562.8,605.0 563.9,606.6 565.7,608.0" fill="#3b404b"/>
<polygon points="467.3,535.0 462.9,538.0 462.3,540.1 458.8,540.0 457.1,543.0 453.7,541.8 450.2,540.2 448.9,539.1 447.3,537.0 443.2,535.0 446.6,532.7 448.8,529.6 450.0,528.4 452.8,529.4 456.8,528.2 460.7,528.6 462.5,531.3 464.6,532.3" fill="#3b404b"/>
<polygon points="418.4,560.0 417.6,561.5 416.0,563.0 413.7,564.6 410.9,565.4 409.0,564.9 405.9,564.6 404.0,562.9 403.5,561.4 403.0,560.0 402.0,558.5 404.4,556.7 406.6,554.8 408.7,554.4 411.0,555.9 412.7,555.1 415.6,557.5 416.5,558.3" fill="#3b404b"/>
<polygon points="478.3,200.0 477.4,202.2 476.0,203.8 473.3,204.2 471.5,204.7 468.5,206.0 466.3,205.9 464.2,203.7 461.4,202.0 461.9,200.0 462.0,198.2 464.9,195.9 466.2,195.5 468.7,194.8 471.3,193.4 473.0,193.8 476.6,195.9 476.2,197.8" fill="#3b404b"/>
<polygon points="303.9,150.0 304.8,151.1 302.9,153.1 302.4,153.1 300.9,154.8 299.2,154.8 297.7,154.3 295.8,152.1 294.3,151.1 296.0,150.0 294.2,149.0 295.3,147.1 297.2,146.8 299.2,146.5 300.9,146.5 302.0,146.8 303.0,147.1 304.0,148.8" fill="#3b404b"/>
<polygon points="524.9,1250.0 523.8,1251.1 522.3,1252.1 522.1,1253.0 520.8,1254.4 519.3,1253.1 518.4,1253.1 517.1,1253.1 515.8,1251.3 516.7,1250.0 515.5,1248.4 517.2,1247.7 518.2,1246.2 519.2,1246.7 520.7,1247.0 522.1,1247.3 523.2,1247.7 524.3,1248.7" fill="#3b404b"/>
<polygon points="546.3,1300.0 545.0,1302.0 545.5,1303.9 543.2,1304.0 541.2,1304.0 538.9,1304.0 536.6,1304.5 534.8,1302.6 533.7,1302.0 535.1,1300.0 535.6,1298.5 534.9,1297.4 536.3,1295.8 539.1,1295.9 540.8,1295.1 542.3,1295.4 544.2,1297.4 545.6,1298.2" fill="#3b404b"/>
<polygon points="1119.4,1226.6 1120.8,1228.9 1117.4,1230.9 1114.1,1231.4 1112.3,1229.5 1110.9,1226.6 1111.7,1224.3 1114.0,1221.8 1117.9,1223.2 1119.6,1224.4" fill="#3b404b"/>
<polygon points="1101.3,1252.7 1099.8,1256.5 1097.9,1257.5 1093.9,1257.4 1089.4,1255.1 1090.6,1252.7 1087.7,1250.0 1093.3,1246.5 1097.8,1247.6 1101.3,1249.0" fill="#3b404b"/>
<polygon points="1080.3,1239.9 1079.0,1243.2 1073.5,1244.3 1069.0,1244.7 1064.5,1243.6 1065.7,1239.9 1064.7,1237.1 1069.5,1235.3 1073.9,1236.8 1078.7,1237.0" fill="#3b404b"/>
<polygon points="1087.0,1239.6 1086.1,1241.2 1084.7,1240.9 1082.3,1241.5 1081.0,1241.1 1079.3,1239.6 1080.4,1238.6 1082.6,1238.1 1085.4,1237.2 1086.5,1238.8" fill="#3b404b"/>
<polygon points="1069.6,1261.1 1068.1,1263.0 1067.1,1264.3 1065.9,1263.8 1064.7,1262.2 1063.1,1261.1 1064.1,1260.0 1065.7,1259.5 1067.2,1258.9 1069.3,1259.7" fill="#3b404b"/>
<polygon points="1065.3,1253.0 1065.4,1255.8 1063.3,1261.2 1061.4,1257.3 1058.8,1255.8 1057.8,1253.0 1058.7,1248.5 1061.5,1247.1 1063.2,1247.0 1064.8,1247.8" fill="#3b404b"/>
<polygon points="1059.5,1272.1 1057.4,1274.2 1056.6,1278.1 1054.8,1278.1 1052.2,1275.9 1052.1,1272.1 1052.7,1267.8 1054.9,1268.0 1056.4,1265.4 1057.9,1267.8" fill="#3b404b"/>
<polygon points="1036.3,1276.7 1034.6,1280.7 1028.5,1282.8 1025.5,1283.0 1020.8,1278.8 1020.8,1276.7 1020.0,1274.2 1025.1,1272.3 1029.4,1272.4 1031.5,1273.3" fill="#3b404b"/>
<polygon points="991.4,1273.3 990.9,1275.7 988.9,1279.6 986.2,1277.2 984.7,1277.2 984.4,1273.3 983.4,1270.8 986.1,1267.5 989.6,1267.5 991.1,1269.9" fill="#3b404b"/>
<polygon points="950.5,1275.2 951.7,1277.7 947.4,1280.0 943.1,1280.2 939.0,1279.4 939.7,1275.2 940.7,1271.7 943.7,1270.4 947.7,1270.0 951.6,1270.0" fill="#3b404b"/>
<polygon points="950.1,1263.4 946.4,1266.9 945.0,1268.9 942.1,1268.7 938.8,1267.0 938.7,1263.4 938.5,1260.3 942.1,1257.9 945.2,1257.3 948.1,1261.0" fill="#3b404b"/>
<polygon points="940.0,1264.1 938.1,1266.2 936.5,1267.5 934.5,1266.9 931.8,1266.0 932.4,1264.1 932.0,1261.4 934.5,1261.4 937.1,1260.2 939.5,1262.5" fill="#3b404b"/>
<polygon points="920.4,1288.2 919.9,1289.4 918.5,1290.4 916.6,1290.6 915.8,1289.8 915.3,1288.2 915.1,1286.7 916.7,1286.8 918.6,1286.6 919.8,1287.1" fill="#3b404b"/>
<polygon points="891.3,1280.4 889.8,1284.8 884.3,1288.3 879.9,1288.5 878.1,1282.9 872.8,1280.4 878.0,1277.0 880.4,1272.4 885.2,1276.4 889.4,1275.7" fill="#3b404b"/>
<polygon points="886.3,1268.2 886.2,1271.7 883.6,1272.2 879.9,1271.2 879.0,1270.4 878.4,1268.2 878.5,1264.9 879.7,1265.0 884.0,1263.4 886.7,1265.5" fill="#3b404b"/>
<polygon points="887.0,1258.5 884.6,1261.3 882.5,1263.4 879.5,1261.5 875.2,1260.2 876.3,1258.5 874.3,1255.7 878.7,1254.5 882.5,1254.5 885.5,1256.5" fill="#3b404b"/>
<polygon points="864.7,1292.2 863.5,1297.1 861.1,1297.6 859.5,1298.5 858.3,1295.1 857.6,1292.2 856.9,1288.3 859.5,1286.9 861.7,1283.8 862.4,1287.5" fill="#3b404b"/>
<polygon points="846.1,1302.3 845.3,1304.4 843.5,1307.0 841.0,1307.8 838.5,1305.8 838.5,1302.3 839.0,1300.0 841.0,1296.9 843.7,1298.2 846.8,1299.6" fill="#3b404b"/>
<polygon points="833.9,1270.6 830.7,1273.2 829.0,1275.9 826.0,1276.9 823.6,1272.7 821.7,1270.6 823.4,1266.9 826.1,1265.6 829.1,1265.0 831.5,1268.6" fill="#3b404b"/>
<polygon points="833.2,1278.6 833.3,1279.7 831.4,1280.9 829.1,1280.5 827.3,1279.9 826.7,1278.6 828.1,1277.4 829.5,1277.0 831.1,1276.8 833.1,1277.7" fill="#3b404b"/>
<polygon points="829.3,1295.0 826.7,1296.5 824.9,1296.8 820.8,1296.9 814.6,1296.3 813.3,1295.0 818.4,1293.7 820.5,1292.4 825.1,1293.2 828.5,1293.7" fill="#3b404b"/>
<polygon points="804.9,1314.9 805.2,1317.8 803.0,1319.6 801.2,1318.9 799.7,1318.7 798.2,1314.9 799.8,1310.5 801.1,1311.4 802.8,1309.1 804.9,1311.0" fill="#3b404b"/>
<polygon points="826.2,1311.0 824.4,1314.9 822.4,1317.9 819.4,1317.9 817.3,1314.5 815.6,1311.0 816.2,1308.4 819.1,1306.0 821.9,1304.4 825.5,1307.0" fill="#3b404b"/>
<polygon points="787.9,1319.0 788.5,1320.5 786.8,1321.6 785.4,1323.5 785.0,1321.6 783.7,1319.0 784.5,1317.3 785.7,1315.9 787.0,1315.3 788.2,1316.9" fill="#3b404b"/>
<polygon points="784.0,1334.6 783.1,1338.2 779.5,1339.4 774.7,1338.7 771.6,1338.1 767.2,1334.6 771.1,1330.3 775.8,1326.4 780.6,1329.3 785.3,1331.0" fill="#3b404b"/>
<polygon points="780.6,1338.7 778.5,1340.0 775.0,1340.7 769.7,1341.1 765.0,1340.1 764.0,1338.7 764.7,1337.6 770.5,1336.3 775.2,1335.9 776.5,1336.9" fill="#3b404b"/>
<polygon points="762.4,1338.0 761.0,1341.5 760.4,1341.0 758.2,1343.1 757.2,1341.6 756.4,1338.0 757.1,1334.4 758.8,1335.1 760.5,1332.5 761.7,1335.9" fill="#3b404b"/>
<polygon points="771.3,1350.5 770.3,1352.5 766.5,1353.3 763.2,1352.9 760.1,1352.3 758.4,1350.5 761.7,1348.2 762.5,1347.0 766.2,1348.0 770.0,1348.4" fill="#3b404b"/>
<polygon points="738.5,1305.3 737.4,1307.5 734.7,1308.8 730.8,1308.7 728.4,1307.4 727.6,1305.3 727.7,1302.4 731.0,1302.5 733.9,1299.9 738.2,1301.9" fill="#3b404b"/>
<polygon points="737.9,1338.3 735.1,1342.9 733.2,1344.2 729.9,1343.7 728.7,1343.5 725.5,1338.3 728.8,1334.6 730.5,1330.0 733.0,1332.5 735.2,1335.5" fill="#3b404b"/>
<polygon points="722.0,1307.3 723.5,1312.5 719.7,1315.0 717.6,1311.6 714.3,1311.7 714.8,1307.3 714.4,1304.6 717.2,1299.4 719.7,1299.3 722.4,1303.2" fill="#3b404b"/>
<polygon points="686.7,1285.6 686.1,1287.3 683.7,1288.8 681.6,1287.8 679.3,1287.3 678.1,1285.6 679.9,1284.2 681.1,1282.5 683.5,1283.0 685.7,1284.2" fill="#3b404b"/>
<polygon points="662.5,1287.4 660.9,1288.6 659.8,1289.6 655.4,1289.7 649.6,1289.5 648.6,1287.4 649.5,1285.8 654.7,1283.4 658.9,1284.0 663.8,1285.9" fill="#3b404b"/>
<polygon points="631.7,1285.5 632.2,1286.7 627.9,1287.5 623.9,1288.2 618.9,1287.0 618.0,1285.5 621.2,1284.4 623.8,1284.0 627.9,1283.9 632.0,1284.1" fill="#3b404b"/>
<polygon points="640.7,1267.1 639.8,1270.0 637.0,1271.3 634.0,1273.4 631.8,1270.4 630.3,1267.1 632.3,1264.9 634.0,1260.5 636.7,1263.0 639.5,1264.4" fill="#3b404b"/>
<polygon points="728.4,956.8 727.2,960.3 726.3,961.7 725.5,961.1 723.6,958.9 723.3,956.8 723.7,953.8 725.3,950.3 726.4,952.4 727.7,953.0" fill="#3b404b"/>
<polygon points="729.7,927.8 729.3,928.9 728.8,929.5 726.9,930.9 725.6,929.7 724.8,927.8 726.2,926.2 727.0,924.9 728.4,926.0 729.3,926.1" fill="#3b404b"/>
<polygon points="724.6,918.4 724.8,920.7 722.3,924.0 719.9,922.8 717.9,920.9 717.9,918.4 718.1,915.1 719.9,914.3 722.7,915.3 723.7,915.7" fill="#3b404b"/>
<polygon points="723.4,902.6 724.9,905.0 720.9,909.5 717.3,909.2 714.5,906.4 710.6,902.6 713.6,899.5 716.7,898.7 720.6,895.8 722.1,899.4" fill="#3b404b"/>
<polygon points="694.6,870.3 691.3,873.6 689.9,876.2 684.9,874.2 682.7,872.8 683.1,870.3 682.2,867.6 685.2,864.3 689.9,865.2 694.4,867.7" fill="#3b404b"/>
<polygon points="686.6,860.2 685.3,862.7 684.6,862.4 683.0,862.9 681.5,862.1 682.4,860.2 681.8,858.4 683.4,856.0 684.9,856.0 686.3,858.1" fill="#3b404b"/>
<polygon points="667.9,858.3 667.4,859.7 666.2,861.1 664.5,862.2 663.2,860.1 663.6,858.3 663.2,855.9 664.5,855.3 665.8,854.6 666.6,855.9" fill="#3b404b"/>
<polygon points="672.8,849.9 672.7,853.3 671.5,857.2 669.2,854.8 666.5,853.6 665.1,849.9 666.9,845.2 669.2,842.5 671.2,842.9 673.5,845.6" fill="#3b404b"/>
<polygon points="643.1,820.6 640.7,823.2 639.2,824.1 636.5,825.1 633.1,822.9 633.8,820.6 632.8,817.5 636.7,815.4 639.1,817.0 641.2,817.1" fill="#3b404b"/>
<polygon points="644.4,817.0 642.8,818.5 642.3,820.6 641.0,820.6 640.1,818.9 640.3,817.0 640.5,814.9 641.3,814.8 642.5,814.1 643.5,814.8" fill="#3b404b"/>
<polygon points="670.1,794.8 671.1,798.5 668.1,799.6 665.1,801.6 663.4,799.0 662.0,794.8 661.9,790.6 665.3,790.0 668.4,790.1 670.8,790.4" fill="#3b404b"/>
<polygon points="670.1,778.7 667.2,780.2 665.8,782.2 663.0,781.9 661.5,780.9 659.4,778.7 660.7,775.7 662.8,773.9 665.4,776.1 667.0,777.2" fill="#3b404b"/>
<polygon points="674.6,775.7 673.6,779.1 671.2,778.8 669.8,779.0 667.0,778.6 667.2,775.7 667.1,772.9 669.4,772.4 671.8,771.1 673.6,773.0" fill="#3b404b"/>
<polygon points="699.3,748.4 699.7,750.7 697.4,753.6 692.6,751.2 689.4,750.6 687.2,748.4 689.3,745.6 693.8,745.0 696.8,744.8 701.1,746.3" fill="#3b404b"/>
<polygon points="703.4,757.2 702.3,760.5 699.7,761.5 697.5,759.9 696.2,760.2 693.8,757.2 695.5,754.5 697.4,752.9 699.5,753.4 702.3,754.8" fill="#3b404b"/>
<polygon points="709.4,752.1 708.3,754.4 705.3,755.5 701.8,755.7 696.0,753.5 696.0,752.1 697.4,750.9 700.9,749.2 705.5,749.4 710.2,750.7" fill="#3b404b"/>
<polygon points="687.0,734.9 684.4,736.9 681.6,738.6 676.8,737.7 674.0,736.3 674.8,734.9 674.7,733.4 677.2,732.0 680.8,732.3 684.9,732.6" fill="#3b404b"/>
<polygon points="702.4,743.8 701.4,745.7 700.8,746.7 698.3,746.9 696.0,745.1 694.7,743.8 696.6,742.5 697.7,741.0 700.1,740.7 702.7,742.6" fill="#3b404b"/>
<polygon points="654.2,721.2 655.0,723.7 651.4,723.4 648.7,725.9 645.1,723.1 646.1,721.2 646.1,719.4 649.1,718.3 651.4,716.5 654.3,718.6" fill="#3b404b"/>
<polygon points="661.9,688.6 662.9,690.9 659.0,693.7 655.9,693.7 654.2,690.4 653.4,688.6 652.6,686.4 655.3,685.8 658.8,685.0 661.2,686.7" fill="#3b404b"/>
<polygon points="688.0,652.1 687.6,654.1 685.4,657.0 682.6,656.4 681.0,654.1 680.3,652.1 680.6,648.6 682.5,646.7 684.8,645.8 687.9,649.1" fill="#3b404b"/>
<polygon points="702.8,613.8 702.0,616.3 701.1,617.7 699.8,617.7 698.4,616.1 699.0,613.8 698.3,612.1 700.0,611.5 701.1,609.7 702.2,612.1" fill="#3b404b"/>
<polygon points="665.7,588.8 665.9,593.1 664.1,595.5 661.5,594.6 658.5,591.6 658.3,588.8 660.3,585.2 661.4,582.5 664.0,585.2 666.5,586.0" fill="#3b404b"/>
<polygon points="638.1,571.1 637.0,574.0 635.7,574.3 633.0,576.4 629.5,573.3 631.3,571.1 629.6,568.0 633.1,566.1 636.0,567.7 639.1,568.6" fill="#3b404b"/>
<polygon points="606.9,560.2 604.2,563.1 602.3,566.9 600.3,564.5 598.3,564.6 597.7,560.2 597.7,557.1 599.8,555.8 602.5,555.2 604.0,556.7" fill="#3b404b"/>
<polygon points="557.4,543.1 557.1,545.0 553.0,548.5 548.8,548.7 547.1,546.4 542.8,543.1 547.4,539.7 549.4,538.5 553.6,537.4 557.1,540.5" fill="#3b404b"/>
<polygon points="695.2,1239.6 693.3,1242.3 690.5,1243.9 687.9,1244.5 684.4,1241.3 684.8,1239.6 684.2,1236.4 687.6,1235.1 690.0,1235.8 694.0,1236.7" fill="#3b404b"/>
<polygon points="611.3,1284.1 610.6,1286.1 606.7,1286.6 602.3,1287.2 597.8,1286.4 596.0,1284.1 599.8,1282.6 602.8,1281.7 605.9,1280.2 609.0,1282.0" fill="#3b404b"/>
<polygon points="603.1,1301.4 602.0,1304.3 600.2,1305.1 597.8,1306.8 597.2,1304.8 595.0,1301.4 597.1,1297.3 598.3,1297.7 599.9,1294.9 601.2,1298.1" fill="#3b404b"/>
<polygon points="675.0,1199.9 674.0,1202.3 672.9,1205.5 671.1,1202.6 669.8,1201.8 670.1,1199.9 669.8,1197.2 671.0,1194.5 673.0,1196.4 674.0,1197.6" fill="#3b404b"/>
<polygon points="641.3,1208.7 642.2,1212.8 639.7,1213.7 635.6,1212.5 631.4,1213.2 630.3,1208.7 633.3,1205.6 635.0,1202.0 639.3,1202.2 641.3,1206.0" fill="#3b404b"/>
<polygon points="625.7,1267.7 626.0,1269.4 621.8,1271.7 618.8,1271.9 616.9,1270.1 616.1,1267.7 614.9,1265.5 619.2,1264.5 622.4,1263.3 624.9,1265.8" fill="#3b404b"/>
<polygon points="661.2,1287.9 660.3,1289.6 659.4,1291.3 658.0,1290.3 656.0,1290.6 656.8,1287.9 656.2,1286.4 657.7,1283.9 659.8,1285.1 661.0,1285.4" fill="#3b404b"/>
<polygon points="607.0,1205.0 605.5,1207.0 602.5,1206.9 599.8,1206.9 598.1,1206.8 597.5,1205.0 596.7,1203.1 599.9,1202.2 602.9,1201.9 604.6,1203.6" fill="#3b404b"/>
<polygon points="605.5,1173.7 605.9,1175.3 601.6,1176.1 598.1,1175.5 596.4,1174.8 595.3,1173.7 596.4,1172.8 597.8,1172.3 602.8,1172.1 606.9,1172.0" fill="#3b404b"/>
<polygon points="670.9,1293.3 670.5,1295.4 669.6,1296.4 666.9,1295.8 664.6,1295.6 663.0,1293.3 664.8,1290.4 666.6,1288.5 669.2,1288.5 671.2,1290.4" fill="#3b404b"/>
<polygon points="645.7,1210.5 642.4,1213.1 641.1,1216.6 637.0,1216.6 633.9,1213.0 633.9,1210.5 636.0,1207.0 637.0,1207.4 640.9,1206.9 643.6,1208.0" fill="#3b404b"/>
<polygon points="676.5,1226.9 678.9,1229.2 674.3,1233.2 668.6,1230.4 665.5,1229.1 666.8,1226.9 666.3,1223.6 669.4,1222.4 674.0,1221.4 677.3,1223.3" fill="#3b404b"/>
<polygon points="682.2,1145.8 682.1,1149.5 680.8,1151.8 679.1,1152.7 677.3,1149.2 676.8,1145.8 678.4,1143.5 679.1,1141.7 680.5,1140.6 681.9,1143.4" fill="#3b404b"/>
<polygon points="652.6,1215.1 649.7,1217.1 647.0,1219.2 643.4,1219.0 638.7,1217.4 636.9,1215.1 640.3,1212.7 643.6,1211.7 646.7,1212.7 649.0,1213.4" fill="#3b404b"/>
<polygon points="621.8,1255.6 622.0,1257.6 620.4,1259.6 618.0,1259.2 614.5,1258.1 614.1,1255.6 615.7,1253.4 618.1,1251.5 620.4,1252.7 621.5,1253.0" fill="#3b404b"/>
<polygon points="675.0,1187.0 674.4,1188.8 673.1,1188.5 670.2,1189.0 668.0,1188.0 666.7,1187.0 667.5,1185.4 670.0,1185.1 673.1,1184.2 675.1,1186.1" fill="#3b404b"/>
<polygon points="689.6,1173.3 687.7,1176.6 684.4,1180.4 680.6,1178.1 677.6,1176.7 676.2,1173.3 675.2,1168.9 680.4,1166.9 684.2,1168.2 688.8,1169.4" fill="#3b404b"/>
<polygon points="667.3,1235.8 667.9,1237.5 665.8,1239.1 664.1,1237.9 661.5,1238.2 662.3,1235.8 662.1,1233.9 663.9,1233.3 665.7,1233.3 668.3,1233.4" fill="#3b404b"/>
<polygon points="701.4,1313.5 698.9,1316.6 695.0,1316.7 690.7,1316.9 687.9,1316.3 687.7,1313.5 687.9,1310.7 691.6,1308.3 694.6,1309.3 700.3,1311.1" fill="#3b404b"/>
<polygon points="692.4,1212.7 689.7,1214.2 686.0,1215.6 682.2,1214.7 681.1,1214.7 678.3,1212.7 679.9,1211.2 682.4,1210.5 686.7,1210.0 690.9,1211.6" fill="#3b404b"/>
<polygon points="652.4,1318.8 651.5,1321.5 651.2,1324.2 649.6,1324.1 648.4,1320.7 647.0,1318.8 648.1,1315.0 649.2,1315.5 650.8,1313.6 651.9,1314.7" fill="#3b404b"/>
<polygon points="692.0,1246.7 689.0,1247.9 687.7,1249.9 684.8,1249.3 684.1,1248.4 680.8,1246.7 683.9,1244.9 685.1,1244.3 687.6,1244.0 689.6,1244.8" fill="#3b404b"/>
<polygon points="592.5,1157.8 590.4,1159.9 588.7,1162.5 586.7,1160.7 585.1,1160.1 582.3,1157.8 584.4,1155.1 586.0,1154.3 589.1,1155.2 590.9,1156.3" fill="#3b404b"/>
<polygon points="636.2,1198.4 635.4,1199.6 632.5,1200.0 628.8,1201.1 626.3,1199.8 626.9,1198.4 625.7,1196.7 629.2,1196.7 632.5,1196.3 634.5,1197.1" fill="#3b404b"/>
<polygon points="640.9,1189.0 639.9,1190.5 638.5,1192.3 636.1,1191.7 634.2,1190.1 632.7,1189.0 633.9,1187.5 636.1,1186.3 638.1,1187.2 639.7,1187.2" fill="#3b404b"/>
<polygon points="690.3,1164.6 691.1,1167.3 687.8,1169.5 684.7,1167.8 679.7,1167.2 681.4,1164.6 680.1,1162.5 684.4,1161.2 687.4,1160.3 692.5,1162.3" fill="#3b404b"/>
<polygon points="611.1,1304.3 609.8,1306.5 608.6,1308.6 606.4,1307.9 604.2,1307.0 604.6,1304.3 603.4,1302.8 606.5,1301.8 608.7,1299.8 611.3,1302.4" fill="#3b404b"/>
<polygon points="661.7,1273.5 662.8,1276.7 659.3,1277.1 656.9,1277.1 653.8,1275.2 653.5,1273.5 654.2,1271.5 656.5,1271.0 659.2,1269.1 661.4,1271.1" fill="#3b404b"/>
<polygon points="608.9,1313.6 608.3,1315.3 607.9,1316.1 606.4,1316.6 605.2,1314.6 605.2,1313.6 605.8,1311.8 606.4,1311.6 607.8,1310.7 608.8,1312.4" fill="#3b404b"/>
<polygon points="699.8,1180.3 699.0,1183.5 697.0,1183.9 694.0,1184.4 691.9,1184.2 691.0,1180.3 691.6,1176.6 694.7,1176.6 697.2,1174.3 699.0,1176.1" fill="#3b404b"/>
<polygon points="669.4,1326.3 668.0,1327.3 666.2,1328.1 663.9,1328.6 662.0,1327.7 660.9,1326.3 662.2,1325.0 663.4,1324.1 666.6,1324.4 667.9,1324.7" fill="#3b404b"/>
<polygon points="689.6,1146.5 687.9,1148.6 685.4,1149.2 682.2,1149.4 679.5,1148.9 678.9,1146.5 681.0,1145.3 682.7,1143.3 686.2,1143.4 688.7,1145.3" fill="#3b404b"/>
<polygon points="645.7,1185.0 644.8,1187.4 643.5,1191.3 641.3,1191.7 640.6,1187.6 639.5,1185.0 639.8,1182.6 641.4,1178.6 643.5,1180.7 645.4,1181.4" fill="#3b404b"/>
<polygon points="690.8,1249.8 689.1,1251.7 687.4,1252.4 686.0,1252.6 684.0,1251.0 683.8,1249.8 685.1,1248.4 685.5,1245.9 687.5,1245.7 689.0,1247.8" fill="#3b404b"/>
<polygon points="666.9,1180.9 665.0,1182.2 663.1,1183.9 659.6,1182.4 657.2,1181.9 657.8,1180.9 657.3,1179.5 659.5,1178.0 663.1,1179.0 665.0,1179.7" fill="#3b404b"/>
<polygon points="640.1,1236.2 638.6,1237.8 637.0,1238.7 634.1,1237.9 631.4,1237.9 629.7,1236.2 631.6,1235.2 634.5,1234.0 636.7,1233.5 640.1,1235.0" fill="#3b404b"/>
<polygon points="657.1,1238.2 655.3,1241.5 654.1,1243.1 650.8,1241.9 648.4,1240.9 648.9,1238.2 649.6,1235.2 650.7,1235.2 653.7,1233.1 656.0,1234.9" fill="#3b404b"/>
<polygon points="620.2,1286.2 620.1,1287.5 618.6,1288.2 616.8,1288.8 615.9,1288.6 615.1,1286.2 614.7,1284.5 617.1,1283.5 618.5,1284.0 619.7,1284.8" fill="#3b404b"/>
<polygon points="590.9,1293.9 589.9,1296.8 589.3,1300.4 587.3,1299.8 585.7,1297.1 586.1,1293.9 585.9,1291.0 587.4,1286.7 589.2,1290.0 590.7,1291.7" fill="#3b404b"/>
<polygon points="691.9,1248.7 691.9,1251.0 691.1,1253.9 689.7,1253.8 689.1,1251.7 688.3,1248.7 689.3,1244.3 690.0,1244.9 690.9,1244.5 692.5,1244.9" fill="#3b404b"/>
<polygon points="611.0,1242.3 610.3,1244.3 606.9,1246.7 604.0,1246.4 602.4,1244.0 600.9,1242.3 602.1,1239.6 603.7,1238.8 607.4,1238.1 609.5,1240.1" fill="#3b404b"/>
<polygon points="680.4,1233.7 678.1,1236.3 676.0,1239.2 673.6,1238.3 671.7,1236.4 669.8,1233.7 671.2,1229.5 674.0,1228.0 676.6,1226.9 678.3,1230.9" fill="#3b404b"/>
<polygon points="674.6,1237.0 674.9,1239.6 672.3,1241.6 669.2,1240.9 666.1,1240.3 664.4,1237.0 666.3,1234.2 669.3,1232.5 672.6,1231.9 673.3,1234.8" fill="#3b404b"/>
<polygon points="657.7,1171.8 658.5,1174.9 656.0,1177.4 653.5,1176.0 652.7,1174.5 649.3,1171.8 652.3,1168.1 653.9,1166.3 656.5,1166.3 657.7,1168.2" fill="#3b404b"/>
<polygon points="622.1,1239.7 618.6,1242.1 616.8,1243.6 612.8,1244.4 611.5,1242.2 606.9,1239.7 608.8,1236.3 613.0,1236.9 616.6,1236.9 621.1,1237.1" fill="#3b404b"/>
<polygon points="1109.2,1205.9 1109.5,1208.4 1106.4,1209.5 1102.8,1209.7 1098.9,1208.3 1097.7,1205.9 1100.0,1203.5 1102.5,1201.3 1106.6,1203.0 1108.0,1203.8" fill="#1c1e1e"/>
<polygon points="1097.5,1206.9 1098.1,1210.2 1092.5,1214.8 1087.9,1214.4 1083.6,1212.3 1080.2,1206.9 1083.3,1202.8 1088.5,1199.8 1093.6,1197.6 1096.9,1202.4" fill="#1c1e1e"/>
<polygon points="1073.0,1225.2 1072.0,1227.0 1070.2,1230.1 1067.9,1228.5 1066.5,1227.0 1065.4,1225.2 1066.2,1222.6 1068.3,1219.7 1070.7,1222.1 1071.5,1222.7" fill="#1c1e1e"/>
<polygon points="1045.2,1239.1 1044.9,1243.2 1042.7,1244.1 1040.4,1246.8 1037.4,1242.3 1035.9,1239.1 1038.6,1236.7 1040.4,1231.8 1043.1,1232.6 1045.1,1235.1" fill="#1c1e1e"/>
<polygon points="1030.4,1236.3 1028.7,1242.5 1027.3,1243.5 1025.4,1245.4 1023.6,1242.2 1023.4,1236.3 1023.3,1230.8 1025.7,1228.2 1027.2,1225.9 1029.5,1231.4" fill="#1c1e1e"/>
<polygon points="1014.5,1257.9 1013.2,1261.0 1008.0,1267.2 1004.8,1266.8 999.9,1262.8 999.1,1257.9 1000.2,1254.7 1004.6,1249.3 1008.3,1250.6 1010.1,1254.6" fill="#1c1e1e"/>
<polygon points="1015.3,1253.7 1012.9,1257.5 1010.2,1257.9 1005.4,1257.0 1002.2,1256.3 1001.7,1253.7 1002.2,1249.8 1005.6,1250.2 1009.4,1249.9 1012.5,1250.0" fill="#1c1e1e"/>
<polygon points="961.2,1257.3 961.0,1259.6 959.5,1261.5 957.4,1260.2 956.2,1259.4 954.8,1257.3 956.5,1255.5 957.7,1254.6 959.6,1254.2 960.7,1255.0" fill="#1c1e1e"/>
<polygon points="960.2,1254.1 954.7,1259.0 951.3,1260.6 947.6,1262.4 942.3,1257.9 938.8,1254.1 945.2,1249.4 946.4,1246.2 952.3,1246.1 957.5,1251.2" fill="#1c1e1e"/>
<polygon points="931.5,1223.6 929.5,1225.3 928.2,1226.6 926.0,1228.4 923.5,1225.1 922.6,1223.6 924.5,1221.7 926.0,1219.7 928.3,1220.6 929.7,1221.0" fill="#1c1e1e"/>
<polygon points="912.7,1265.0 911.1,1267.6 907.5,1268.1 903.5,1269.0 900.5,1267.3 899.6,1265.0 899.9,1263.3 903.0,1260.8 907.5,1261.0 909.5,1263.5" fill="#1c1e1e"/>
<polygon points="915.4,1268.0 915.8,1271.1 911.6,1275.7 907.5,1274.0 903.0,1271.4 902.4,1268.0 904.0,1264.7 907.1,1261.6 911.1,1262.5 913.8,1263.7" fill="#1c1e1e"/>
<polygon points="887.3,1241.9 888.4,1244.4 884.9,1247.2 879.7,1247.3 875.8,1245.6 876.1,1241.9 875.1,1239.6 880.1,1235.1 884.2,1237.7 887.5,1239.4" fill="#1c1e1e"/>
<polygon points="896.3,1235.3 897.7,1239.2 893.3,1241.6 888.2,1242.6 884.4,1239.6 881.9,1235.3 882.5,1229.6 886.8,1226.6 892.4,1230.5 896.8,1230.1" fill="#1c1e1e"/>
<polygon points="874.3,1246.6 871.5,1249.5 869.7,1249.2 867.5,1249.7 865.0,1248.6 865.4,1246.6 866.0,1244.6 867.7,1243.6 869.8,1242.0 872.4,1244.7" fill="#1c1e1e"/>
<polygon points="879.8,1264.8 876.2,1266.6 873.7,1267.8 868.8,1269.7 867.3,1268.0 864.3,1264.8 867.5,1261.5 868.6,1259.9 874.1,1261.6 877.6,1262.4" fill="#1c1e1e"/>
<polygon points="873.1,1265.9 868.5,1271.8 866.5,1272.6 862.5,1276.0 857.7,1272.1 858.2,1265.9 860.2,1262.6 862.1,1260.3 866.3,1258.0 869.1,1262.5" fill="#1c1e1e"/>
<polygon points="857.5,1267.0 854.1,1270.9 850.5,1270.4 845.0,1273.6 841.2,1269.9 840.1,1267.0 839.6,1263.5 844.5,1261.2 849.5,1260.3 855.7,1263.7" fill="#1c1e1e"/>
<polygon points="844.0,1263.9 845.6,1265.4 841.9,1267.1 838.1,1267.9 833.9,1265.3 835.2,1263.9 835.6,1261.9 837.6,1260.3 842.0,1260.8 843.4,1261.4" fill="#1c1e1e"/>
<polygon points="836.5,1277.8 830.5,1280.1 828.9,1281.3 823.1,1283.2 818.6,1280.0 815.3,1277.8 819.8,1275.4 823.1,1275.1 829.0,1273.3 834.4,1275.4" fill="#1c1e1e"/>
<polygon points="830.2,1243.2 826.4,1249.4 823.9,1252.0 820.6,1253.5 816.8,1247.0 816.9,1243.2 818.2,1238.0 820.9,1236.2 823.7,1236.6 827.9,1239.1" fill="#1c1e1e"/>
<polygon points="822.2,1249.3 821.3,1253.9 817.9,1257.0 814.7,1257.3 811.5,1252.3 811.2,1249.3 810.8,1245.5 814.4,1242.6 818.2,1241.7 819.7,1245.2" fill="#1c1e1e"/>
<polygon points="783.2,1284.7 782.7,1290.5 780.0,1292.3 778.0,1293.9 776.3,1290.5 775.0,1284.7 775.5,1280.2 778.1,1277.3 779.8,1279.4 782.7,1281.3" fill="#1c1e1e"/>
<polygon points="730.3,1275.3 728.6,1279.9 725.6,1281.6 721.2,1281.2 715.4,1280.5 714.9,1275.3 718.1,1271.2 721.1,1265.6 726.0,1265.7 730.2,1269.2" fill="#1c1e1e"/>
<polygon points="714.4,1265.3 715.6,1268.4 712.4,1272.7 710.1,1271.7 707.0,1271.0 706.9,1265.3 708.7,1259.7 710.0,1256.6 712.5,1257.8 713.8,1262.2" fill="#1c1e1e"/>
<polygon points="706.8,1257.1 703.6,1259.0 701.9,1260.2 696.8,1260.8 692.6,1260.5 691.2,1257.1 694.1,1255.1 697.2,1253.8 701.3,1253.6 704.6,1254.4" fill="#1c1e1e"/>
<polygon points="678.9,1239.7 679.4,1244.1 675.9,1243.9 671.4,1247.2 667.9,1243.6 667.8,1239.7 669.3,1236.8 672.7,1232.6 676.2,1232.5 677.9,1237.2" fill="#1c1e1e"/>
<polygon points="645.5,1241.0 644.7,1244.9 642.7,1249.5 640.6,1251.3 637.1,1244.5 638.0,1241.0 639.0,1235.0 640.5,1231.9 642.6,1231.0 644.9,1235.2" fill="#1c1e1e"/>
<polygon points="673.5,1249.9 671.8,1253.9 669.6,1257.7 667.4,1255.3 666.7,1255.4 665.0,1249.9 666.0,1245.7 667.5,1243.9 670.1,1242.4 672.6,1246.7" fill="#1c1e1e"/>
<polygon points="746.6,936.3 744.1,940.0 743.0,945.0 739.5,944.0 736.6,939.2 735.3,936.3 737.9,933.0 740.2,929.3 742.8,932.1 744.0,932.5" fill="#1c1e1e"/>
<polygon points="734.4,894.6 732.9,896.8 730.5,899.3 727.8,897.4 726.3,897.4 723.4,894.6 724.8,891.8 727.9,891.9 730.5,889.6 732.5,892.8" fill="#1c1e1e"/>
<polygon points="727.3,874.0 726.1,877.1 724.2,879.5 720.8,879.1 718.6,876.6 718.2,874.0 719.6,871.7 721.2,868.3 724.8,870.4 727.1,871.8" fill="#1c1e1e"/>
<polygon points="695.4,793.8 694.6,797.0 692.5,801.1 690.8,801.7 689.4,797.2 688.0,793.8 689.9,789.1 691.0,788.7 693.0,788.6 694.0,788.7" fill="#1c1e1e"/>
<polygon points="669.9,712.7 669.3,715.2 666.6,717.0 663.8,719.7 660.5,715.3 658.9,712.7 661.1,708.4 663.1,707.6 666.2,706.3 670.3,710.4" fill="#1c1e1e"/>
<polygon points="670.5,712.1 668.1,714.5 666.4,719.7 663.1,717.8 659.9,716.0 659.2,712.1 659.2,707.7 663.7,704.9 666.3,705.0 667.6,709.2" fill="#1c1e1e"/>
<polygon points="707.2,656.4 708.3,661.1 705.0,661.3 701.6,663.1 700.0,661.3 700.2,656.4 699.9,651.7 701.8,648.7 704.4,649.7 706.0,653.6" fill="#1c1e1e"/>
<polygon points="695.0,682.8 695.8,685.4 693.7,687.6 691.0,687.0 690.1,685.2 689.3,682.8 690.1,680.6 691.2,679.0 693.6,677.9 695.2,680.6" fill="#1c1e1e"/>
<polygon points="699.5,670.7 698.7,674.4 696.8,675.7 694.5,676.0 692.7,674.7 692.2,670.7 692.4,665.4 694.2,665.9 696.5,663.6 699.2,665.5" fill="#1c1e1e"/>
<polygon points="737.9,627.1 737.0,630.9 735.3,633.8 733.2,633.5 731.6,629.6 729.8,627.1 731.6,623.0 732.6,621.8 735.5,621.3 738.7,622.8" fill="#1c1e1e"/>
<polygon points="728.2,635.0 727.1,636.8 725.5,637.3 723.5,638.4 723.0,636.7 721.1,635.0 722.8,633.2 723.8,632.0 726.1,630.8 728.2,632.5" fill="#1c1e1e"/>
<polygon points="722.4,605.1 720.2,606.6 718.9,608.8 716.6,609.3 714.5,607.3 712.6,605.1 714.0,602.7 717.0,601.5 719.6,602.1 721.3,602.4" fill="#1c1e1e"/>
<polygon points="710.0,595.7 709.3,598.2 707.8,599.7 704.9,602.2 703.0,599.7 701.4,595.7 702.4,591.6 704.7,590.7 707.8,591.1 709.1,592.0" fill="#1c1e1e"/>
<polygon points="690.1,590.9 690.0,593.7 687.8,596.5 685.0,595.3 683.9,593.5 681.1,590.9 682.5,587.5 685.3,585.7 688.1,587.6 689.3,588.1" fill="#1c1e1e"/>
<polygon points="661.4,573.7 657.4,576.5 656.0,576.7 652.9,577.4 651.3,576.0 647.3,573.7 651.3,571.7 652.3,569.2 655.6,569.7 660.0,571.7" fill="#1c1e1e"/>
<polygon points="651.9,568.8 650.3,572.2 647.6,573.8 644.8,573.2 643.4,571.8 640.9,568.8 642.1,565.5 644.1,564.2 647.9,564.0 650.4,566.6" fill="#1c1e1e"/>
<polygon points="654.4,576.4 652.5,579.7 651.6,583.0 649.7,581.8 648.3,579.9 646.8,576.4 647.4,571.7 649.6,569.7 651.4,568.6 654.0,572.9" fill="#1c1e1e"/>
<polygon points="621.8,546.6 622.7,549.5 618.4,550.6 614.9,551.8 612.9,549.2 612.7,546.6 612.7,543.4 615.5,542.0 618.7,542.8 620.9,542.3" fill="#1c1e1e"/>
<polygon points="609.5,526.3 607.1,531.8 605.9,531.7 601.5,534.1 599.5,530.1 598.2,526.3 597.2,520.1 601.2,517.1 605.0,519.4 607.5,523.2" fill="#1c1e1e"/>
<polygon points="577.9,553.3 580.2,556.6 575.7,557.7 571.3,557.7 568.6,555.5 567.6,553.3 569.7,551.5 571.0,548.7 575.5,548.6 577.2,551.3" fill="#1c1e1e"/>
<polygon points="571.6,561.8 570.5,564.8 567.6,565.1 564.0,564.7 561.0,565.1 562.1,561.8 560.8,558.6 564.8,556.2 567.3,556.1 570.8,560.0" fill="#1c1e1e"/>
<polygon points="697.1,1256.9 695.9,1259.0 692.2,1261.5 689.9,1260.2 687.3,1258.6 687.5,1256.9 687.8,1254.1 690.4,1253.7 692.8,1253.4 694.9,1255.5" fill="#1c1e1e"/>
<polygon points="752.7,1260.5 751.3,1264.2 749.2,1264.6 747.6,1265.3 746.7,1263.5 745.0,1260.5 746.2,1256.4 747.9,1255.9 749.5,1254.7 750.5,1257.6" fill="#1c1e1e"/>
<polygon points="674.3,1171.6 674.5,1174.2 672.5,1178.9 669.3,1179.2 667.9,1176.1 664.8,1171.6 667.2,1168.1 669.6,1166.5 671.7,1164.2 674.9,1168.9" fill="#1c1e1e"/>
<polygon points="726.0,1235.2 725.9,1236.9 724.2,1238.2 722.1,1239.6 720.6,1237.5 719.4,1235.2 718.9,1233.5 722.0,1231.8 724.7,1231.2 725.6,1233.4" fill="#1c1e1e"/>
<polygon points="692.3,1285.7 689.0,1288.8 684.3,1292.3 680.0,1292.1 678.1,1289.9 673.5,1285.7 674.0,1281.0 679.8,1278.5 684.9,1278.6 688.3,1282.2" fill="#1c1e1e"/>
<polygon points="701.5,1181.7 698.5,1185.8 694.7,1189.2 690.1,1186.7 688.0,1186.3 685.9,1181.7 684.8,1178.6 690.7,1176.3 694.4,1173.8 698.2,1177.5" fill="#1c1e1e"/>
<polygon points="718.7,1263.5 718.6,1266.3 716.9,1270.2 714.8,1271.8 712.9,1267.9 713.1,1263.5 712.4,1259.5 714.6,1255.2 717.0,1258.5 719.3,1257.8" fill="#1c1e1e"/>
<polygon points="641.7,1291.6 642.5,1293.9 639.3,1296.7 633.7,1297.6 630.0,1294.1 630.8,1291.6 629.0,1288.5 633.6,1286.6 639.1,1287.6 642.6,1288.1" fill="#1c1e1e"/>
<polygon points="742.6,1263.9 739.7,1266.4 736.1,1266.3 731.4,1267.6 728.5,1266.0 725.2,1263.9 728.4,1262.2 730.8,1261.7 735.0,1261.7 739.7,1261.3" fill="#1c1e1e"/>
<polygon points="751.9,1279.8 751.2,1282.2 747.8,1285.8 744.3,1284.5 738.9,1282.9 737.2,1279.8 739.4,1276.0 743.6,1276.3 748.8,1273.6 753.1,1277.0" fill="#1c1e1e"/>
<polygon points="726.2,1237.0 725.2,1238.6 723.8,1240.1 721.6,1241.3 719.9,1239.4 719.7,1237.0 719.9,1234.2 721.9,1234.1 723.7,1233.6 726.0,1234.0" fill="#1c1e1e"/>
<polygon points="657.9,1285.3 653.1,1287.0 651.0,1289.3 647.0,1287.9 644.5,1287.5 640.7,1285.3 642.3,1283.0 646.8,1282.5 651.4,1282.0 653.2,1283.3" fill="#1c1e1e"/>
<polygon points="702.1,1148.5 702.3,1150.9 699.2,1152.2 694.9,1151.7 691.9,1150.3 689.8,1148.5 692.7,1145.8 695.7,1144.2 699.2,1143.6 701.2,1145.9" fill="#1c1e1e"/>
<polygon points="745.4,1275.4 743.7,1277.6 738.4,1278.1 734.2,1277.9 730.6,1277.7 730.4,1275.4 732.9,1273.3 734.7,1272.9 739.6,1272.3 740.8,1273.2" fill="#1c1e1e"/>
<polygon points="719.9,1224.5 714.5,1229.2 712.6,1232.4 708.3,1230.5 703.4,1227.7 704.1,1224.5 704.3,1221.4 706.9,1217.4 712.5,1216.6 717.1,1221.2" fill="#1c1e1e"/>
<polygon points="761.9,1233.9 760.5,1236.9 756.2,1236.9 751.5,1238.9 746.9,1236.9 748.8,1233.9 749.7,1230.7 752.5,1231.0 756.9,1228.4 761.8,1231.7" fill="#1c1e1e"/>
<polygon points="687.7,1286.7 687.7,1290.6 685.0,1291.8 683.1,1291.9 681.5,1291.7 680.3,1286.7 680.6,1283.4 683.0,1278.9 685.1,1279.1 687.6,1282.0" fill="#1c1e1e"/>
<polygon points="638.7,1206.1 637.9,1211.0 636.1,1213.3 633.0,1213.7 630.2,1211.2 628.2,1206.1 630.3,1200.2 633.7,1201.0 636.2,1198.5 639.6,1200.4" fill="#1c1e1e"/>
<polygon points="675.6,1204.9 675.1,1211.1 673.4,1212.1 668.9,1213.8 666.0,1208.3 664.9,1204.9 667.8,1198.6 668.9,1197.4 672.7,1196.5 676.1,1201.0" fill="#1c1e1e"/>
<polygon points="679.4,1249.9 678.7,1252.4 678.0,1254.9 675.7,1253.5 673.1,1253.7 672.1,1249.9 673.8,1246.1 675.4,1246.7 678.0,1245.3 678.9,1247.2" fill="#1c1e1e"/>
<polygon points="731.4,1265.5 730.6,1268.7 728.5,1272.0 726.0,1272.0 723.3,1268.8 722.3,1265.5 723.1,1262.9 725.8,1261.6 728.3,1261.4 730.4,1261.5" fill="#1c1e1e"/>
<polygon points="727.9,1216.0 727.4,1217.6 724.0,1220.4 720.7,1218.7 717.7,1217.9 719.1,1216.0 717.9,1213.4 720.7,1211.9 724.2,1212.4 725.4,1214.5" fill="#1c1e1e"/>
<polygon points="749.4,1275.1 747.6,1280.3 743.5,1284.3 739.6,1281.6 737.6,1279.4 734.7,1275.1 734.4,1271.4 739.7,1267.3 743.9,1269.1 745.8,1271.5" fill="#1c1e1e"/>
<polygon points="674.1,1200.2 671.8,1202.8 669.3,1205.2 666.6,1205.7 664.0,1203.6 660.5,1200.2 661.6,1198.1 666.4,1196.5 669.5,1195.1 671.8,1197.6" fill="#1c1e1e"/>
<polygon points="731.8,1228.9 731.8,1231.7 729.2,1231.3 726.9,1233.4 725.7,1231.7 725.5,1228.9 725.1,1227.3 726.9,1224.1 729.2,1223.9 730.2,1226.4" fill="#1c1e1e"/>
<polygon points="734.1,1192.7 729.6,1196.4 726.7,1198.7 722.8,1199.7 718.2,1197.1 715.6,1192.7 720.2,1189.0 723.3,1188.1 727.8,1187.6 733.2,1189.6" fill="#1c1e1e"/>
<polygon points="692.8,1201.2 690.4,1205.2 689.3,1207.0 687.2,1208.4 685.1,1205.6 683.5,1201.2 686.0,1198.7 686.9,1194.1 689.0,1196.2 690.0,1198.8" fill="#1c1e1e"/>
<polygon points="721.8,1253.3 721.5,1257.1 719.7,1256.9 716.8,1258.8 715.0,1256.4 713.0,1253.3 714.0,1251.4 717.0,1247.3 719.6,1247.2 720.6,1250.6" fill="#1c1e1e"/>
<polygon points="710.9,1154.4 710.1,1156.7 708.1,1157.8 705.9,1158.8 703.0,1156.2 702.8,1154.4 704.6,1151.4 705.4,1149.9 708.2,1151.8 710.7,1152.9" fill="#1c1e1e"/>
<polygon points="692.7,1263.4 690.1,1266.2 688.3,1271.0 685.3,1268.3 683.1,1268.7 680.3,1263.4 682.1,1260.5 685.3,1255.9 687.7,1258.0 690.8,1258.8" fill="#1c1e1e"/>
<polygon points="651.4,1172.9 650.8,1176.2 649.2,1178.6 646.7,1178.1 644.4,1175.9 645.0,1172.9 644.3,1169.9 646.9,1168.2 649.0,1166.0 650.8,1169.0" fill="#1c1e1e"/>
<polygon points="676.3,1205.9 676.1,1209.5 673.7,1209.7 672.3,1210.8 670.6,1209.4 669.1,1205.9 669.9,1202.1 672.0,1200.2 674.1,1202.2 675.5,1202.4" fill="#1c1e1e"/>
<polygon points="761.9,1266.3 761.7,1271.1 760.2,1271.1 755.7,1271.7 752.9,1270.6 749.9,1266.3 752.4,1262.3 755.6,1262.1 759.5,1260.6 764.3,1262.0" fill="#1c1e1e"/>
<polygon points="669.0,1170.2 667.9,1173.2 665.6,1173.8 662.2,1175.3 660.0,1174.1 657.8,1170.2 661.3,1168.2 662.7,1164.8 665.2,1166.3 666.4,1166.3" fill="#1c1e1e"/>
<polygon points="685.2,1221.5 684.4,1225.0 681.4,1230.5 676.6,1227.7 674.7,1226.8 673.9,1221.5 671.9,1217.1 677.4,1213.5 681.1,1214.8 683.9,1217.8" fill="#1c1e1e"/>
<polygon points="668.6,1226.2 665.9,1229.2 664.1,1230.4 661.8,1231.2 659.0,1228.0 659.1,1226.2 660.0,1223.7 662.0,1222.9 664.0,1223.1 667.0,1224.3" fill="#1c1e1e"/>
<polygon points="701.6,1231.9 700.0,1234.9 698.2,1240.9 695.1,1240.5 693.5,1235.2 693.7,1231.9 693.7,1228.0 695.9,1225.4 698.1,1225.7 699.0,1228.4" fill="#1c1e1e"/>
<polygon points="711.1,1144.3 708.3,1147.7 706.4,1153.0 701.3,1150.6 697.4,1148.2 696.7,1144.3 697.0,1138.9 702.2,1136.9 706.3,1136.6 708.9,1140.8" fill="#1c1e1e"/>
<polygon points="668.0,1232.2 668.4,1235.9 663.8,1237.6 659.7,1238.1 656.7,1234.2 653.7,1232.2 657.2,1230.2 659.7,1228.5 664.5,1227.5 665.7,1229.4" fill="#1c1e1e"/>
<polygon points="668.0,1281.3 669.6,1285.4 666.5,1286.2 663.2,1285.5 660.3,1286.1 657.7,1281.3 661.1,1278.1 663.3,1274.9 666.3,1275.1 667.8,1277.0" fill="#1c1e1e"/>
<g transform="translate(620,560) scale(0.56436)" fill="none" stroke="#0b0b0c" stroke-width="2.4" stroke-linejoin="round">
<polyline points="370,170 370.2,196.1 373.9,222.0 378.4,247.8 377.0,274.1 380.0,300.0 392.5,324.0 402.4,349.1 410.6,374.8 420.0,400.0 435.9,423.9 455.4,445.2 470.0,470.0 487.5,488.5 505.5,506.5 521.3,526.7 543.0,541.0 560.0,560.0 576.2,578.0 596.3,591.6 612.2,610.0 631.3,624.8 650.0,640.0 666.0,656.8 685.8,669.1 703.6,683.7 720.0,700.0 736.3,718.0 746.4,740.1 760.0,760.0 773.1,780.2 788.6,798.7 800.0,820.0 812.5,845.7 824.9,871.5 830.0,900.0 844.3,918.9 856.0,939.4 868.3,959.5 880.0,980.0 898.6,1001.4 920.0,1020.0" vector-effect="non-scaling-stroke"/>
<polyline points="380,170 404.6,173.6 427.8,182.8 450.8,192.9 475.2,197.2 500.0,200.0 525.2,199.2 550.5,199.9 574.9,191.7 600.0,190.0 624.9,184.7 649.1,175.6 675.0,175.1 700.0,170.0 725.1,162.8 748.9,151.4 774.4,145.6 800.0,140.0 825.4,136.9 850.4,132.1 874.7,123.3 900.0,120.0 925.3,120.6 949.8,113.2 975.2,114.1 1000.0,110.0" vector-effect="non-scaling-stroke"/>
<polyline points="380,130 406.0,125.7 431.5,120.1 456.6,112.7 480.0,100.0 503.4,96.8 526.3,91.1 549.7,88.2 573.5,87.8 596.9,85.0 620.0,80.0 639.7,69.4 661.6,63.2 679.0,48.0 699.6,39.2 720.0,30.0 738.2,16.4 758.4,6.8 780.0,0.0" vector-effect="non-scaling-stroke"/>
<polyline points="200,300 199.2,325.2 204.1,349.9 200.7,375.3 200.9,400.4 205.4,425.2 210.0,450.0 210.5,475.1 209.2,500.2 204.9,525.0 206.8,550.2 203.9,575.1 200.0,600.0 207.8,624.4 209.0,650.2 211.7,675.7 220.0,700.0 219.5,725.3 220.0,750.5 224.8,775.3 230.0,800.0 222.3,821.2 212.4,841.2 199.2,859.6 188.4,879.2 180.0,900.0 178.3,925.7 177.6,951.5 171.1,976.2 160.0,1000.0 159.5,1025.3 166.3,1049.9 168.8,1074.9 170.0,1100.0 167.7,1125.0 161.3,1149.6 163.5,1175.1 160.0,1200.0" vector-effect="non-scaling-stroke"/>
<polyline points="470,470 459.0,493.3 443.9,514.4 434.6,538.7 420.0,560.0 412.2,583.5 406.2,607.7 389.7,627.3 380.0,650.0 374.3,675.5 366.5,700.5 359.0,725.4 350.0,750.0 341.7,774.3 335.1,799.0 332.2,824.4 330.0,850.0 322.6,875.0 317.3,900.7 306.2,924.6 300.0,950.0 297.8,975.6 291.1,1000.2 286.9,1025.4 280.0,1050.0 271.5,1075.6 261.7,1100.7 252.8,1126.1 240.0,1150.0" vector-effect="non-scaling-stroke"/>
<polyline points="470,470 492.8,458.1 513.2,441.7 535.1,428.1 560.0,420.0 585.9,410.3 612.0,401.4 640.0,400.0 657.9,419.2 678.7,434.9 700.0,450.0 713.9,473.2 726.8,497.1 745.6,517.1 760.0,540.0 767.1,561.4 778.6,580.7 789.7,600.2 800.0,620.0 810.1,646.6 818.5,673.9 830.0,700.0 837.5,726.0 850.0,750.0" vector-effect="non-scaling-stroke"/>
<polyline points="880,20 893.0,40.9 902.2,63.9 914.9,85.1 928.5,105.7 937.4,128.9 950.0,150.0 962.2,171.3 973.5,193.2 990.7,210.9 1003.5,231.7 1020.0,250.0 1023.1,275.4 1023.8,301.2 1030.6,325.9 1040.0,350.0 1035.8,374.8 1034.3,399.8 1030.8,424.7 1028.7,449.7 1030.0,474.9 1030.0,500.0 1025.0,525.0 1020.8,550.2 1012.0,574.4 1009.5,599.9 1003.6,624.7 1000.0,650.0 1001.4,675.0 1001.2,700.1 1005.4,725.0 1010.5,749.7 1008.8,775.0 1010.0,800.0 1004.9,825.7 998.4,851.0 987.0,874.9 980.0,900.0 975.6,925.9 963.7,949.6 956.3,974.6 950.0,1000.0" vector-effect="non-scaling-stroke"/>
<polyline points="180,1180 204.1,1176.4 228.3,1174.0 251.5,1165.0 275.4,1160.1 300.0,1160.0 325.4,1154.0 350.6,1147.1 375.6,1139.3 400.0,1130.0 425.7,1124.7 449.9,1114.7 474.3,1105.1 500.0,1100.0 525.7,1098.3 549.7,1088.4 574.9,1084.5 600.0,1080.0 625.2,1075.9 651.0,1075.2 674.9,1064.3 700.0,1060.0 725.5,1051.3 748.9,1037.2 774.4,1028.5 800.0,1020.0 825.2,1015.8 850.8,1014.1 874.7,1003.6 900.0,1000.0 925.3,996.7 949.6,988.0 974.7,983.5 1000.0,980.0" vector-effect="non-scaling-stroke"/>
<polyline points="330,1000 351.2,990.4 372.8,981.4 389.8,964.7 407.7,949.4 428.0,938.3 450.0,930.0 472.7,921.5 492.8,907.5 516.4,900.9 538.9,892.0 560.0,880.0 583.6,869.5 608.0,860.5 629.2,845.6 650.0,830.0 675.7,824.7 700.7,817.3 725.6,809.6 750.0,800.0 774.4,792.0 799.6,788.0 825.5,787.5 850.0,780.0" vector-effect="non-scaling-stroke"/>
<polyline points="800,770 819.7,759.4 840.6,751.3 859.0,738.0 879.6,729.2 900.0,720.0 925.1,715.3 950.6,712.9 975.0,705.0 1000.0,700.0 1026.6,693.1 1052.6,683.9 1080.0,680.0" vector-effect="non-scaling-stroke"/>
<polyline points="250,320 273.6,310.6 298.3,303.9 320.0,290.0 339.6,279.1 360.4,270.7 380.0,260.0 403.4,257.2 426.3,251.0 450.0,250.0 473.6,248.4 496.5,241.9 520.0,240.0" vector-effect="non-scaling-stroke"/>
<polyline points="420,220 444.8,225.8 468.9,235.5 494.8,236.0 520.0,240.0 545.9,243.0 572.0,243.4 597.9,247.0 624.1,246.6 650.0,250.0 675.0,252.5 699.7,257.8 725.1,256.7 750.0,260.0 771.8,255.2 793.4,248.6 815.0,242.8 837.8,243.0 860.0,240.0 882.2,244.8 904.8,247.2 927.4,248.1 950.0,250.0" vector-effect="non-scaling-stroke"/>
<polyline points="500,500 506.4,524.7 513.7,549.3 513.5,575.3 520.0,600.0 525.1,625.0 528.3,650.3 535.8,674.8 540.0,700.0 547.3,724.5 556.7,748.7 559.3,774.1 560.0,800.0 565.6,824.9 570.3,849.9 574.3,875.1 580.0,900.0 583.7,925.3 585.2,951.0 590.9,975.8 600.0,1000.0 603.7,1025.3 605.9,1050.8 613.0,1075.4 620.0,1100.0" vector-effect="non-scaling-stroke"/>
<polyline points="900,300 890.1,320.1 876.6,338.3 864.6,357.3 858.6,379.3 850.0,400.0 840.0,424.3 833.6,449.6 825.2,474.3 820.0,500.0 818.3,525.7 811.9,550.4 802.7,574.5 800.0,600.0" vector-effect="non-scaling-stroke"/>
<polyline points="600,300 610.3,319.8 617.2,341.4 626.8,361.6 641.3,379.3 650.0,400.0 662.2,418.9 673.6,438.2 678.2,460.9 688.5,480.8 700.0,500.0 709.5,520.3 716.4,541.8 729.1,560.4 741.5,579.2 750.0,600.0" vector-effect="non-scaling-stroke"/>
<polyline points="250,500 270.2,509.7 288.3,523.4 310.3,529.3 330.0,540.0 353.4,546.6 377.2,551.6 400.0,560.0 427.0,565.5 454.4,569.2 480.0,580.0 505.8,590.1 533.3,593.3 560.0,600.0 586.1,609.1 613.7,612.0 640.0,620.0 666.8,626.0 694.4,629.0 720.0,640.0 746.5,647.4 773.2,653.9 800.0,660.0 825.0,662.0 850.3,661.6 875.0,667.0 900.0,670.0" vector-effect="non-scaling-stroke"/>
<polyline points="120,1100 138.3,1084.7 160.8,1076.3 180.3,1063.0 200.0,1050.0 225.0,1050.8 250.0,1049.9 275.0,1046.6 300.0,1050.0 325.0,1046.7 350.0,1049.4 375.0,1049.7 400.0,1050.0 419.4,1038.8 439.6,1029.2 461.3,1022.7 480.5,1011.0 500.0,1000.0" vector-effect="non-scaling-stroke"/>
<polyline points="700,900 725.0,905.1 749.8,910.9 774.4,918.0 800.0,920.0 825.6,921.8 850.2,928.8 875.0,935.0 900.0,940.0 924.7,946.5 950.4,948.0 974.7,956.4 1000.0,960.0" vector-effect="non-scaling-stroke"/>
<polyline points="850,800 858.5,820.8 870.4,839.8 876.4,861.8 891.0,879.5 900.0,900.0 907.2,925.1 918.7,948.9 926.2,973.9 930.0,1000.0 935.5,1027.0 940.9,1053.9 950.0,1080.0" vector-effect="non-scaling-stroke"/>
<polyline points="1000,800 983.5,816.8 968.3,835.0 950.0,850.0 924.9,854.6 900.0,860.0" vector-effect="non-scaling-stroke"/>
<polyline points="260,380 273.7,403.1 287.8,426.0 300.0,450.0 308.1,474.8 315.9,499.7 323.8,524.6 330.0,550.0 335.2,574.7 337.3,599.8 340.0,624.8 340.0,650.0 340.8,673.7 341.3,697.4 350.0,720.0" vector-effect="non-scaling-stroke"/>
<polyline points="400,720 411.0,740.9 425.2,759.9 437.7,779.9 450.0,800.0 465.1,821.3 484.2,839.3 500.0,860.0 523.1,882.3 550.0,900.0" vector-effect="non-scaling-stroke"/>
<polyline points="650,700 658.6,723.4 660.2,748.4 666.4,772.4 671.8,796.5 680.0,820.0 685.8,846.9 689.9,874.2 700.0,900.0 705.5,924.9 714.5,949.1 718.9,974.2 720.0,1000.0 713.3,1024.7 703.8,1048.8 704.3,1074.9 700.0,1100.0" vector-effect="non-scaling-stroke"/>
<polyline points="350,130 333.4,153.4 314.7,175.3 300.0,200.0 291.1,224.4 283.3,249.4 269.7,271.9 262.0,296.8 250.0,320.0 241.6,350.5 230.0,380.0" vector-effect="non-scaling-stroke"/>
<polyline points="240,180 270.2,175.9 300.0,170.0 323.3,163.3 347.7,160.4 370.0,150.0 396.6,146.5 423.2,142.5 450.0,140.0" vector-effect="non-scaling-stroke"/>
<polyline points="150,1150 168.6,1164.8 182.5,1184.1 200.0,1200.0 225.6,1201.9 251.5,1202.6 275.8,1210.9 300.0,1220.0 325.4,1217.1 349.9,1209.4 374.9,1204.5 400.0,1200.0" vector-effect="non-scaling-stroke"/>
<polyline points="850,1000 871.1,1007.8 892.0,1016.0 909.3,1031.4 928.8,1042.4 950.0,1050.0 976.5,1056.2 1000.0,1070.0" vector-effect="non-scaling-stroke"/>
<polyline points="960,800 967.1,821.4 977.8,841.1 991.4,859.3 1000.0,880.0 1025.5,888.8 1050.0,900.0 1075.0,904.6 1100.0,900.0" vector-effect="non-scaling-stroke"/>
<polyline points="280,60 298.8,78.2 312.9,100.4 330.0,120.0 351.2,132.8 372.3,146.2 395.6,154.3 420.0,160.0 448.0,153.4 472.9,138.9 500.0,130.0 516.0,113.4 534.4,98.8 547.0,79.2 560.0,60.0 569.8,37.7 583.1,17.6 600.0,0.0" vector-effect="non-scaling-stroke"/>
<polyline points="300,230 329.8,219.4 360.0,210.0 383.1,202.6 407.1,198.1 430.0,190.0 445.8,211.9 461.8,233.7 470.0,260.0 458.7,282.8 445.4,304.7 440.0,330.0 413.4,336.8 386.3,341.9 360.0,350.0 341.2,331.9 321.6,314.7 300.0,300.0 302.5,276.7 297.5,253.3 300.0,230.0" vector-effect="non-scaling-stroke"/>
<polyline points="560,180 569.1,200.5 579.6,220.2 590.7,239.6 598.0,261.0 611.0,279.5 620.0,300.0 609.8,325.8 601.9,352.1 600.0,380.0 578.4,390.9 557.0,402.2 540.0,420.0" vector-effect="non-scaling-stroke"/>
<polyline points="700,300 721.6,314.8 740.4,332.8 760.0,350.0 784.4,348.3 808.4,344.7 832.6,341.3 855.8,332.9 880.0,330.0 899.1,347.8 922.1,360.8 940.0,380.0 959.9,393.4 982.2,403.3 1000.0,420.0" vector-effect="non-scaling-stroke"/>
<polyline points="180,600 207.1,605.1 234.4,609.1 260.0,620.0 271.4,639.3 284.5,657.7 290.8,679.6 300.0,700.0 326.6,706.9 352.7,715.8 380.0,720.0" vector-effect="non-scaling-stroke"/>
<polyline points="450,650 472.3,662.5 495.3,673.2 520.0,680.0 546.4,687.5 573.2,694.0 600.0,700.0 618.9,716.5 639.4,730.8 660.3,744.6 680.0,760.0 691.0,789.7 700.0,820.0" vector-effect="non-scaling-stroke"/>
<polyline points="380,850 405.0,856.2 428.6,865.4 450.0,880.0 465.8,903.9 483.6,926.5 500.0,950.0 520.4,966.2 542.5,980.4 560.0,1000.0" vector-effect="non-scaling-stroke"/>
<polyline points="200,850 225.7,855.2 249.5,866.6 274.2,875.2 300.0,880.0 327.0,885.5 352.6,896.1 380.0,900.0" vector-effect="non-scaling-stroke"/>
<polyline points="780,980 789.5,1000.2 797.4,1021.3 811.1,1039.5 820.0,1060.0 848.6,1074.3 880.0,1080.0" vector-effect="non-scaling-stroke"/>
<polyline points="660,160 670.3,182.4 683.6,203.4 694.3,225.6 700.0,250.0 710.5,274.1 722.3,297.8 723.7,324.6 730.0,350.0 737.7,374.3 750.4,396.5 760.0,420.0" vector-effect="non-scaling-stroke"/>
</g>
<g transform="translate(573,0) scale(0.33985)" fill="none" stroke="#0b0b0c" stroke-width="2" stroke-linejoin="round">
<polyline points="0,180 200,240 240,290 270,250" vector-effect="non-scaling-stroke"/>
<polyline points="0,470 60,450 150,400 230,300 270,250" vector-effect="non-scaling-stroke"/>
<polyline points="0,350 10,550 40,700 50,830 90,870 180,820 240,820" vector-effect="non-scaling-stroke"/>
<polyline points="40,870 40,1000 50,1180 100,1230 200,1260 300,1320 400,1418" vector-effect="non-scaling-stroke"/>
<polyline points="90,960 240,1020 300,1000 400,1050 500,1090 560,1000 640,950 700,920 760,840 850,875 900,820 960,840 1040,850 1120,900 1150,950 1240,1010 1300,1080 1370,1130 1400,1170 1420,1240 1450,1300 1480,1418" vector-effect="non-scaling-stroke"/>
<polyline points="1300,170 1220,250 1050,210 920,340 880,400 840,500 820,580 820,680 880,760 910,810" vector-effect="non-scaling-stroke"/>
<polyline points="1050,210 1170,240 1330,210 1360,110 1500,130 1520,45 1640,0" vector-effect="non-scaling-stroke"/>
</g>
<g transform="scale(0.3399)" fill="none" stroke="#0b0b0c" stroke-width="1.8" stroke-linejoin="round">
<polyline points="880,0 1000,120 1040,180" vector-effect="non-scaling-stroke"/>
<polyline points="1110,90 1060,150 1040,250 1100,280 1170,310" vector-effect="non-scaling-stroke"/>
<polyline points="1280,350 1360,430" vector-effect="non-scaling-stroke"/>
<polyline points="1390,450 1440,460 1500,440 1560,460 1640,450" vector-effect="non-scaling-stroke"/>
<polyline points="1490,0 1500,100 1470,200 1560,260 1686,340" vector-effect="non-scaling-stroke"/>
<polyline points="1686,920 1640,950 1580,1060" vector-effect="non-scaling-stroke"/>
<polyline points="1686,1180 1640,1330" vector-effect="non-scaling-stroke"/>
<polyline points="1724.0120000000002,750.21 1724.0120000000002,1169.7392000000002" vector-effect="non-scaling-stroke"/>
</g>
<g fill="none" stroke="#0b0b0c" stroke-width="2" stroke-linejoin="round">
<polyline points="586,255 586,397.6 576,433 555.7,453.7"/>
<polyline points="586,397.6 611.7,418 657.6,433.3 688.2,458.8 713.7,499.6 723.9,540.4 754.5,535.3"/>
<polyline points="591.4,316 611.7,331.4 662.7,346.7 713.7,356.9 744.3,367 764.7,356.9 805.5,305.9 860,285.5"/>
<polyline points="540,357 560.8,326 601.5,316"/>
<polyline points="428,117 464,148"/>
<polyline points="573.5,168 576,204 586,255"/>
</g>
<clipPath id="csk"><polygon points="0.0,0.0 1130.0,0.0 1093.0,17.0 1089.6,44.0 1048.8,51.0 1025.0,74.8 977.4,81.6 963.8,91.8 960.4,108.8 929.8,125.7 909.5,132.5 895.9,149.5 899.2,170.0 906.0,176.7 899.2,197.0 906.0,217.5 906.0,231.0 885.7,231.0 875.5,251.5 885.7,271.9 906.0,282.0 933.0,282.0 953.6,305.9 963.8,319.5 974.0,336.4 997.8,350.0 1014.8,367.0 1038.6,384.0 1048.8,397.6 1055.6,421.4 1065.8,438.4 1076.0,452.0 1082.8,482.0 1090.0,490.0 1115.8,522.7 1132.7,549.9 1147.0,583.8 1176.0,627.0 1196.0,663.0 1217.0,723.0 1227.0,774.0 1237.2,814.8 1227.0,855.5 1222.0,891.2 1227.0,926.9 1252.5,947.3 1247.4,988.1 1237.2,1018.7 1232.1,1049.3 1216.9,1079.9 1186.3,1130.8 1176.0,1156.3 1145.5,1181.8 1116.8,1194.0 1099.8,1217.9 1065.8,1241.7 1042.0,1255.3 1008.0,1262.0 988.0,1262.7 945.5,1262.7 927.1,1244.3 914.3,1262.7 899.6,1277.3 881.3,1244.3 874.0,1255.3 863.0,1284.7 844.6,1288.3 826.3,1282.8 835.5,1255.3 817.0,1266.3 798.8,1292.0 780.5,1306.7 762.2,1317.7 743.8,1306.7 731.0,1292.0 720.0,1273.7 705.3,1266.3 690.7,1262.7 670.0,1258.0 641.0,1262.0 622.0,1255.0 640.0,1221.0 650.0,1200.0 655.0,1174.0 660.0,1153.3 685.1,1139.7 695.3,1112.5 708.9,1085.3 715.7,1071.8 719.1,1051.4 722.5,1031.0 732.7,1010.6 726.0,990.2 729.3,963.0 749.4,957.0 735.8,929.8 732.4,909.5 718.9,889.0 708.7,865.4 695.1,855.2 674.8,838.2 661.2,821.2 668.0,807.7 685.0,787.3 695.1,763.6 718.9,753.4 708.7,739.8 674.8,733.0 654.4,712.7 674.8,685.5 702.0,655.0 715.5,641.4 725.7,617.7 708.7,604.0 685.0,594.0 661.2,587.2 641.0,573.6 617.0,560.0 607.0,536.3 590.0,529.5 573.0,540.0 560.0,565.0 549.6,583.8 525.8,600.7 509.0,590.6 536.0,563.4 515.7,549.9 498.7,556.6 475.0,556.6 464.8,543.0 485.0,539.7 488.5,526.0 509.0,516.0 471.6,516.0 451.0,505.7 427.5,509.0 407.0,502.4 434.3,482.0 442.0,459.0 448.7,438.5 455.5,418.0 469.0,401.0 483.0,381.0 483.0,357.0 489.5,340.0 493.0,316.0 503.0,299.0 513.0,289.0 527.0,265.0 537.0,241.0 530.0,231.0 537.0,207.0 530.0,190.0 506.0,180.0 496.0,187.0 482.7,194.0 472.5,177.0 452.0,166.5 435.0,170.0 421.0,153.0 404.5,160.0 387.5,143.0 374.0,136.0 353.0,126.0 343.0,112.0 326.0,119.0 313.0,126.0 292.0,129.0 265.0,132.5 238.0,129.0 211.0,136.0 190.0,146.0 170.0,143.0 160.0,153.0 136.0,163.0 112.0,173.0 92.0,183.5 68.0,197.0 51.0,207.0 34.0,217.5 13.6,224.0 0.0,238.0"/></clipPath>
<g clip-path="url(#csk)" fill="none" stroke="#0b0b0c" stroke-width="2.2" stroke-linejoin="round">
<polyline points="745.2,626.9 734.6,628.8 724.5,632.7"/>
<polyline points="745.2,626.9 743.8,623.2 743.9,619.2"/>
<polyline points="745.2,626.9 744.1,624.9 742.3,623.4"/>
<polyline points="745.2,626.9 748.8,624.9 752.7,623.5"/>
<polyline points="745.2,626.9 747.0,624.4 748.1,621.5"/>
<polyline points="870.6,701.2 871.6,702.2 872.8,703.1"/>
<polyline points="870.6,701.2 874.0,698.3 877.6,695.6"/>
<polyline points="870.6,701.2 873.1,702.7 876.0,703.4"/>
<polyline points="884.6,662.3 884.4,666.5 884.8,670.7"/>
<polyline points="884.6,662.3 876.3,664.7 867.9,666.0"/>
<polyline points="884.6,662.3 878.3,671.8 874.0,682.3"/>
<polyline points="831.9,674.3 839.2,667.8 846.4,661.3"/>
<polyline points="831.9,674.3 829.0,669.5 825.3,665.3"/>
<polyline points="831.9,674.3 836.4,677.8 841.2,680.9"/>
<polyline points="831.9,674.3 827.1,680.3 823.9,687.2"/>
<polyline points="769.4,698.0 766.9,697.3 764.8,696.0"/>
<polyline points="769.4,698.0 770.3,697.5 771.2,697.0"/>
<polyline points="769.4,698.0 769.0,702.2 767.0,705.9"/>
<polyline points="769.4,698.0 769.7,701.9 770.8,705.6"/>
<polyline points="740.9,670.5 735.3,669.5 729.7,669.8"/>
<polyline points="740.9,670.5 741.1,676.5 742.9,682.3"/>
<polyline points="740.9,670.5 751.9,671.3 761.9,676.0"/>
<polyline points="848.3,693.2 845.1,694.3 842.0,695.6"/>
<polyline points="848.3,693.2 852.0,689.9 855.7,686.8"/>
<polyline points="848.3,693.2 850.1,696.1 850.9,699.5"/>
<polyline points="848.3,693.2 844.0,687.5 841.2,680.9"/>
<polyline points="848.3,693.2 845.2,695.4 843.1,698.7"/>
<polyline points="787.4,810.4 780.2,813.1 773.9,817.7"/>
<polyline points="787.4,810.4 789.5,813.7 790.8,817.3"/>
<polyline points="787.4,810.4 794.5,803.7 799.7,795.4"/>
<polyline points="787.4,810.4 793.7,810.1 800.0,809.0"/>
<polyline points="787.4,810.4 791.9,800.5 797.3,791.0"/>
<polyline points="813.2,657.7 815.9,659.6 818.8,661.2"/>
<polyline points="813.2,657.7 809.5,657.5 805.8,656.5"/>
<polyline points="813.2,657.7 815.3,653.4 818.2,649.5"/>
<polyline points="813.2,657.7 811.5,660.5 808.9,662.4"/>
<polyline points="813.2,657.7 813.6,650.6 813.0,643.6"/>
<polyline points="818.8,661.2 822.0,663.4 825.3,665.3"/>
<polyline points="818.8,661.2 814.8,663.8 811.3,667.1"/>
<polyline points="788.8,670.7 793.9,674.5 799.1,678.2"/>
<polyline points="788.8,670.7 790.2,672.3 791.4,673.9"/>
<polyline points="788.8,670.7 788.0,670.4 787.3,669.9"/>
<polyline points="788.8,670.7 782.1,667.6 774.8,665.8"/>
<polyline points="921.4,691.2 920.8,684.5 920.9,677.7"/>
<polyline points="921.4,691.2 919.5,690.3 917.6,689.5"/>
<polyline points="921.4,691.2 920.8,687.4 919.4,683.7"/>
<polyline points="819.7,727.1 818.3,731.2 816.8,735.2"/>
<polyline points="819.7,727.1 813.3,723.9 806.5,721.7"/>
<polyline points="819.7,727.1 817.9,722.7 817.7,717.9"/>
<polyline points="920.9,677.7 919.8,683.8 917.6,689.5"/>
<polyline points="920.9,677.7 925.7,669.6 928.1,660.6"/>
<polyline points="920.9,677.7 920.6,680.8 919.4,683.7"/>
<polyline points="775.7,826.1 774.0,822.1 773.9,817.7"/>
<polyline points="775.7,826.1 782.4,820.2 790.8,817.3"/>
<polyline points="775.7,826.1 771.8,832.0 769.3,838.5"/>
<polyline points="729.7,669.8 723.3,673.6 716.1,675.3"/>
<polyline points="729.7,669.8 736.4,676.0 742.9,682.3"/>
<polyline points="729.7,669.8 725.7,678.5 721.2,686.9"/>
<polyline points="846.7,815.6 857.2,816.2 867.6,814.4"/>
<polyline points="846.7,815.6 847.2,829.1 847.5,842.7"/>
<polyline points="846.7,815.6 847.5,813.4 848.3,811.1"/>
<polyline points="846.4,661.3 853.0,651.7 862.7,645.3"/>
<polyline points="846.4,661.3 842.6,670.8 841.2,680.9"/>
<polyline points="846.4,661.3 854.2,667.9 863.2,672.8"/>
<polyline points="788.7,715.4 792.2,718.6 796.0,721.4"/>
<polyline points="788.7,715.4 787.1,711.2 784.5,707.6"/>
<polyline points="788.7,715.4 792.1,718.7 795.7,721.7"/>
<polyline points="788.7,715.4 789.1,713.8 789.2,712.3"/>
<polyline points="788.7,715.4 785.9,712.5 782.4,710.4"/>
<polyline points="822.3,706.0 820.8,705.3 819.2,704.7"/>
<polyline points="822.3,706.0 818.5,705.6 815.2,703.9"/>
<polyline points="822.3,706.0 819.1,711.6 817.7,717.9"/>
<polyline points="786.3,760.9 789.0,758.2 790.4,754.7"/>
<polyline points="786.3,760.9 786.0,763.3 785.1,765.5"/>
<polyline points="786.3,760.9 781.7,763.5 776.4,764.3"/>
<polyline points="892.8,691.8 886.0,693.8 879.0,695.0"/>
<polyline points="892.8,691.8 899.5,694.3 905.1,698.7"/>
<polyline points="892.8,691.8 898.2,697.2 903.0,703.2"/>
<polyline points="785.1,730.3 783.4,731.8 781.2,732.7"/>
<polyline points="785.1,730.3 790.1,725.3 796.0,721.4"/>
<polyline points="785.1,730.3 789.6,725.0 795.7,721.7"/>
<polyline points="836.3,632.8 835.2,635.4 833.9,637.9"/>
<polyline points="836.3,632.8 837.7,624.8 840.4,617.2"/>
<polyline points="836.3,632.8 830.0,635.6 824.3,639.5"/>
<polyline points="784.7,747.7 782.6,740.3 781.2,732.7"/>
<polyline points="784.7,747.7 789.0,747.3 793.2,748.0"/>
<polyline points="784.7,747.7 789.9,750.4 795.8,751.0"/>
<polyline points="784.7,747.7 787.0,751.6 790.4,754.7"/>
<polyline points="804.7,671.9 801.6,674.9 799.1,678.2"/>
<polyline points="804.7,671.9 806.3,666.9 808.9,662.4"/>
<polyline points="804.7,671.9 807.9,669.4 811.3,667.1"/>
<polyline points="821.7,688.2 824.4,689.5 827.0,691.0"/>
<polyline points="821.7,688.2 816.8,688.5 811.9,688.5"/>
<polyline points="821.7,688.2 822.7,687.5 823.9,687.2"/>
<polyline points="809.9,583.8 821.0,582.5 832.1,581.7"/>
<polyline points="809.9,583.8 805.8,585.0 802.1,587.1"/>
<polyline points="809.9,583.8 819.9,587.2 830.4,589.0"/>
<polyline points="906.2,701.0 912.7,696.1 917.6,689.5"/>
<polyline points="906.2,701.0 905.7,699.8 905.1,698.7"/>
<polyline points="906.2,701.0 904.5,701.9 903.0,703.2"/>
<polyline points="761.8,743.9 757.0,748.8 753.8,755.0"/>
<polyline points="761.8,743.9 762.2,749.4 764.4,754.6"/>
<polyline points="761.8,743.9 765.9,737.9 768.4,731.1"/>
<polyline points="827.0,691.0 832.5,695.2 837.8,699.8"/>
<polyline points="827.0,691.0 819.5,689.3 811.9,688.5"/>
<polyline points="827.0,691.0 825.6,689.0 823.9,687.2"/>
<polyline points="867.6,814.4 867.9,822.4 870.5,830.0"/>
<polyline points="867.6,814.4 858.1,811.9 848.3,811.1"/>
<polyline points="867.6,814.4 871.6,814.0 875.6,813.8"/>
<polyline points="840.4,777.2 833.0,775.5 826.2,772.1"/>
<polyline points="840.4,777.2 838.5,772.8 837.2,768.1"/>
<polyline points="840.4,777.2 837.9,774.1 835.9,770.6"/>
<polyline points="840.4,777.2 842.5,776.4 844.4,775.2"/>
<polyline points="928.7,633.9 937.9,643.9 949.1,651.7"/>
<polyline points="928.7,633.9 930.0,647.2 928.1,660.6"/>
<polyline points="928.7,633.9 938.4,620.3 949.6,607.7 957.4,592.8"/>
<polyline points="928.7,633.9 915.8,625.9 903.8,616.7"/>
<polyline points="928.7,633.9 942.5,636.3 954.9,643.0"/>
<polyline points="781.2,732.7 774.9,731.6 768.4,731.1"/>
<polyline points="716.1,675.3 719.3,685.8 721.3,696.6"/>
<polyline points="716.1,675.3 703.6,682.4 689.6,685.7"/>
<polyline points="716.1,675.3 719.1,680.9 721.2,686.9"/>
<polyline points="881.1,747.4 885.6,752.4 887.8,758.7"/>
<polyline points="881.1,747.4 872.9,746.4 865.3,743.2"/>
<polyline points="881.1,747.4 875.4,749.2 869.5,750.6"/>
<polyline points="841.9,585.8 836.7,584.5 832.1,581.7"/>
<polyline points="841.9,585.8 836.5,588.5 830.4,589.0"/>
<polyline points="841.9,585.8 846.7,584.6 851.5,583.3"/>
<polyline points="841.9,585.8 855.3,582.6 866.7,575.0"/>
<polyline points="939.3,720.3 931.4,725.2 925.0,732.0"/>
<polyline points="939.3,720.3 947.2,714.1 955.8,709.1"/>
<polyline points="939.3,720.3 935.1,730.0 934.3,740.6"/>
<polyline points="852.2,717.2 854.9,721.5 856.0,726.5"/>
<polyline points="852.2,717.2 849.4,715.6 847.2,713.3"/>
<polyline points="852.2,717.2 849.8,708.5 850.9,699.5"/>
<polyline points="743.1,795.5 743.7,785.1 747.8,775.6"/>
<polyline points="743.1,795.5 737.3,799.3 731.9,803.6"/>
<polyline points="743.1,795.5 756.1,792.5 768.2,787.0"/>
<polyline points="743.1,795.5 733.7,805.7 724.2,815.8"/>
<polyline points="764.3,676.7 761.3,683.2 760.0,690.2"/>
<polyline points="764.3,676.7 763.1,676.3 761.9,676.0"/>
<polyline points="764.3,676.7 762.6,677.9 761.3,679.6"/>
<polyline points="796.0,721.4 795.8,721.6 795.7,721.7"/>
<polyline points="796.0,721.4 801.2,721.6 806.5,721.7"/>
<polyline points="837.5,704.7 842.9,708.4 847.2,713.3"/>
<polyline points="837.5,704.7 839.6,700.1 842.0,695.6"/>
<polyline points="837.5,704.7 837.6,702.3 837.8,699.8"/>
<polyline points="837.5,704.7 840.7,702.1 843.1,698.7"/>
<polyline points="819.2,704.7 817.1,704.5 815.2,703.9"/>
<polyline points="819.2,704.7 819.0,711.4 817.7,717.9"/>
<polyline points="877.7,684.3 873.9,682.1 869.8,680.9"/>
<polyline points="877.7,684.3 880.1,676.9 884.8,670.7"/>
<polyline points="877.7,684.3 875.8,683.3 874.0,682.3"/>
<polyline points="877.7,684.3 875.6,684.2 873.7,683.7"/>
<polyline points="776.4,712.6 772.3,713.2 768.4,714.4"/>
<polyline points="776.4,712.6 773.7,709.0 770.8,705.6"/>
<polyline points="776.4,712.6 779.2,711.0 782.4,710.4"/>
<polyline points="724.5,632.7 734.8,626.9 743.9,619.2"/>
<polyline points="724.5,632.7 733.2,627.7 742.3,623.4"/>
<polyline points="724.5,632.7 711.1,622.2 699.9,609.1 687.3,597.7 673.1,588.2"/>
<polyline points="754.7,705.8 745.7,713.1 735.7,718.8"/>
<polyline points="754.7,705.8 756.2,703.8 757.5,701.6"/>
<polyline points="754.7,705.8 760.9,704.9 767.0,705.9"/>
<polyline points="754.7,705.8 757.0,703.7 759.2,701.6"/>
<polyline points="754.7,705.8 751.3,714.5 745.3,721.6"/>
<polyline points="925.0,732.0 917.3,729.5 909.4,728.0"/>
<polyline points="925.0,732.0 942.1,722.9 955.8,709.1"/>
<polyline points="925.0,732.0 929.4,736.5 934.3,740.6"/>
<polyline points="872.8,703.1 875.2,698.5 879.0,695.0"/>
<polyline points="872.8,703.1 875.2,699.4 877.6,695.6"/>
<polyline points="872.8,703.1 874.4,703.2 876.0,703.4"/>
<polyline points="825.3,665.3 818.4,666.4 811.3,667.1"/>
<polyline points="743.9,619.2 746.9,614.8 750.9,611.4"/>
<polyline points="743.9,619.2 743.3,621.4 742.3,623.4"/>
<polyline points="743.9,619.2 748.3,621.2 752.7,623.5"/>
<polyline points="743.9,619.2 736.0,613.7 730.4,605.8"/>
<polyline points="743.9,619.2 745.9,620.5 748.1,621.5"/>
<polyline points="856.0,726.5 850.9,720.3 847.2,713.3"/>
<polyline points="856.0,726.5 861.0,730.1 865.3,734.6"/>
<polyline points="856.0,726.5 864.3,728.4 871.6,732.8"/>
<polyline points="872.8,775.6 867.9,778.4 862.6,780.5"/>
<polyline points="872.8,775.6 881.8,768.4 887.8,758.7"/>
<polyline points="872.8,775.6 871.7,783.8 869.2,791.7"/>
<polyline points="872.8,775.6 869.0,773.7 866.0,770.7"/>
<polyline points="872.8,775.6 880.3,778.3 887.4,781.9"/>
<polyline points="872.8,775.6 870.8,784.6 872.1,793.8"/>
<polyline points="793.2,748.0 795.8,749.8 797.8,752.2"/>
<polyline points="793.2,748.0 796.5,746.6 799.9,745.6"/>
<polyline points="793.2,748.0 794.7,749.4 795.8,751.0"/>
<polyline points="793.2,748.0 791.6,751.3 790.4,754.7"/>
<polyline points="917.6,689.5 918.4,686.6 919.4,683.7"/>
<polyline points="869.8,680.9 867.6,673.6 867.9,666.0"/>
<polyline points="869.8,680.9 867.3,685.3 866.1,690.2"/>
<polyline points="869.8,680.9 866.4,681.1 863.0,680.7"/>
<polyline points="869.8,680.9 871.8,681.8 874.0,682.3"/>
<polyline points="869.8,680.9 871.8,682.3 873.7,683.7"/>
<polyline points="869.8,680.9 867.1,676.4 863.2,672.8"/>
<polyline points="721.3,696.6 717.8,705.9 711.4,713.4"/>
<polyline points="721.3,696.6 714.6,706.5 705.8,714.7"/>
<polyline points="721.3,696.6 720.8,691.8 721.2,686.9"/>
<polyline points="721.3,696.6 728.0,705.0 733.1,714.4"/>
<polyline points="764.8,696.0 762.8,692.8 760.0,690.2"/>
<polyline points="764.8,696.0 768.0,696.5 771.2,697.0"/>
<polyline points="764.8,696.0 761.3,699.0 757.5,701.6"/>
<polyline points="764.8,696.0 762.0,698.8 759.2,701.6"/>
<polyline points="784.5,707.6 792.5,705.1 799.5,700.6"/>
<polyline points="784.5,707.6 786.8,710.0 789.2,712.3"/>
<polyline points="784.5,707.6 783.5,709.0 782.4,710.4"/>
<polyline points="692.5,804.6 712.2,805.2 731.9,803.6"/>
<polyline points="692.5,804.6 678.6,810.4 665.3,817.5"/>
<polyline points="692.5,804.6 708.5,809.6 724.2,815.8"/>
<polyline points="884.8,670.7 879.5,676.7 874.0,682.3"/>
<polyline points="760.0,690.2 759.9,682.9 761.9,676.0"/>
<polyline points="760.0,690.2 760.5,684.9 761.3,679.6"/>
<polyline points="760.0,690.2 758.8,695.8 759.2,701.6"/>
<polyline points="847.2,713.3 848.5,706.3 850.9,699.5"/>
<polyline points="832.1,581.7 831.4,585.4 830.4,589.0"/>
<polyline points="832.1,581.7 841.8,582.9 851.5,583.3"/>
<polyline points="832.1,581.7 849.5,578.9 866.7,575.0"/>
<polyline points="747.8,763.9 750.3,759.0 753.8,755.0"/>
<polyline points="747.8,763.9 756.0,759.1 764.4,754.6"/>
<polyline points="747.8,763.9 747.3,769.7 747.8,775.6"/>
<polyline points="747.8,763.9 737.8,761.7 729.1,756.1"/>
<polyline points="823.2,606.3 821.8,606.6 820.4,606.4"/>
<polyline points="823.2,606.3 822.8,612.6 823.8,618.8"/>
<polyline points="823.2,606.3 830.9,613.2 840.4,617.2"/>
<polyline points="823.2,606.3 825.3,597.1 830.4,589.0"/>
<polyline points="823.2,606.3 816.3,612.7 807.7,616.5"/>
<polyline points="762.2,610.4 756.6,610.6 750.9,611.4"/>
<polyline points="762.2,610.4 770.2,608.6 778.4,608.2"/>
<polyline points="762.2,610.4 757.1,616.6 752.7,623.5"/>
<polyline points="753.8,755.0 759.1,753.8 764.4,754.6"/>
<polyline points="753.8,755.0 751.0,765.3 747.8,775.6"/>
<polyline points="753.8,755.0 741.6,757.2 729.1,756.1"/>
<polyline points="797.8,752.2 798.6,748.8 799.9,745.6"/>
<polyline points="797.8,752.2 796.8,751.5 795.8,751.0"/>
<polyline points="797.8,752.2 800.8,753.4 803.9,754.5"/>
<polyline points="820.4,606.4 812.6,595.4 802.1,587.1"/>
<polyline points="820.4,606.4 821.2,612.8 823.8,618.8"/>
<polyline points="820.4,606.4 813.8,611.1 807.7,616.5"/>
<polyline points="773.9,817.7 782.4,818.6 790.8,817.3"/>
<polyline points="773.9,817.7 772.9,828.4 769.3,838.5"/>
<polyline points="767.3,631.4 774.1,635.9 780.9,640.4"/>
<polyline points="767.3,631.4 759.7,628.0 752.7,623.5"/>
<polyline points="767.3,631.4 765.7,631.1 764.1,630.9"/>
<polyline points="879.0,695.0 878.4,695.4 877.6,695.6"/>
<polyline points="879.0,695.0 876.9,699.0 876.0,703.4"/>
<polyline points="809.6,772.1 817.9,771.7 826.2,772.1"/>
<polyline points="809.6,772.1 810.1,770.1 810.0,768.1"/>
<polyline points="809.6,772.1 809.1,766.9 806.8,762.2"/>
<polyline points="711.4,713.4 708.5,713.6 705.8,714.7"/>
<polyline points="711.4,713.4 722.3,713.4 733.1,714.4"/>
<polyline points="750.9,611.4 741.1,607.1 730.4,605.8"/>
<polyline points="750.9,611.4 744.3,593.9 731.8,580.1"/>
<polyline points="750.9,611.4 746.5,597.7 746.2,583.2"/>
<polyline points="750.9,611.4 749.0,616.3 748.1,621.5"/>
<polyline points="764.4,754.6 770.0,760.0 776.4,764.3"/>
<polyline points="802.1,587.1 793.7,593.6 785.2,599.8"/>
<polyline points="747.8,775.6 737.6,766.7 729.1,756.1"/>
<polyline points="747.8,775.6 741.7,790.6 731.9,803.6"/>
<polyline points="747.8,775.6 758.2,780.9 768.2,787.0"/>
<polyline points="867.5,628.7 854.9,620.7 840.4,617.2"/>
<polyline points="867.5,628.7 865.4,637.1 862.7,645.3"/>
<polyline points="867.5,628.7 874.0,620.2 882.1,613.0"/>
<polyline points="867.5,628.7 885.9,623.5 903.8,616.7"/>
<polyline points="946.2,669.4 947.4,660.5 949.1,651.7"/>
<polyline points="946.2,669.4 937.4,664.6 928.1,660.6"/>
<polyline points="946.2,669.4 951.1,664.5 956.1,659.8"/>
<polyline points="742.9,682.3 752.0,680.2 761.3,679.6"/>
<polyline points="862.6,780.5 857.5,781.2 852.5,780.0"/>
<polyline points="862.6,780.5 865.2,786.5 869.2,791.7"/>
<polyline points="862.6,780.5 864.6,775.7 866.0,770.7"/>
<polyline points="862.6,780.5 858.7,782.1 854.6,782.9"/>
<polyline points="862.6,780.5 867.4,787.1 872.1,793.8"/>
<polyline points="867.9,666.0 865.2,673.3 863.0,680.7"/>
<polyline points="867.9,666.0 865.3,655.6 862.7,645.3"/>
<polyline points="867.9,666.0 865.0,669.0 863.2,672.8"/>
<polyline points="778.4,608.2 783.7,612.1 789.8,614.9"/>
<polyline points="778.4,608.2 781.5,603.7 785.2,599.8"/>
<polyline points="805.8,656.5 807.5,659.4 808.9,662.4"/>
<polyline points="805.8,656.5 800.1,655.6 794.2,655.1"/>
<polyline points="823.8,618.8 832.0,616.9 840.4,617.2"/>
<polyline points="823.8,618.8 815.9,616.3 807.7,616.5"/>
<polyline points="823.8,618.8 815.4,622.1 806.3,622.3"/>
<polyline points="780.9,640.4 772.5,635.7 764.1,630.9"/>
<polyline points="780.9,640.4 788.2,647.2 794.2,655.1"/>
<polyline points="742.3,623.4 736.5,614.5 730.4,605.8"/>
<polyline points="742.3,623.4 745.0,621.9 748.1,621.5"/>
<polyline points="752.7,623.5 758.8,626.5 764.1,630.9"/>
<polyline points="752.7,623.5 750.6,622.0 748.1,621.5"/>
<polyline points="842.0,695.6 839.6,697.5 837.8,699.8"/>
<polyline points="842.0,695.6 846.6,697.1 850.9,699.5"/>
<polyline points="842.0,695.6 841.5,688.3 841.2,680.9"/>
<polyline points="842.0,695.6 842.8,697.0 843.1,698.7"/>
<polyline points="735.7,718.8 740.7,719.5 745.3,721.6"/>
<polyline points="735.7,718.8 734.1,716.8 733.1,714.4"/>
<polyline points="826.2,772.1 823.6,781.8 824.9,791.8"/>
<polyline points="826.2,772.1 824.6,782.5 821.6,792.6"/>
<polyline points="826.2,772.1 831.5,769.6 837.2,768.1"/>
<polyline points="826.2,772.1 830.9,770.5 835.9,770.6"/>
<polyline points="799.1,678.2 794.9,676.7 791.4,673.9"/>
<polyline points="771.2,697.0 770.2,701.2 770.8,705.6"/>
<polyline points="837.8,699.8 840.5,699.5 843.1,698.7"/>
<polyline points="795.7,721.7 801.1,722.6 806.5,721.7"/>
<polyline points="815.2,703.9 807.6,701.2 799.5,700.6"/>
<polyline points="815.2,703.9 815.6,711.0 817.7,717.9"/>
<polyline points="757.5,701.6 758.4,701.5 759.2,701.6"/>
<polyline points="753.9,642.5 753.3,646.3 751.6,649.8"/>
<polyline points="753.9,642.5 758.1,646.3 761.4,650.8"/>
<polyline points="753.9,642.5 758.0,635.8 764.1,630.9"/>
<polyline points="819.1,808.5 820.9,799.8 824.9,791.8"/>
<polyline points="819.1,808.5 821.0,800.6 821.6,792.6"/>
<polyline points="819.1,808.5 809.5,808.8 800.0,809.0"/>
<polyline points="866.1,690.2 863.6,685.8 863.0,680.7"/>
<polyline points="866.1,690.2 869.6,686.7 873.7,683.7"/>
<polyline points="866.1,690.2 861.1,687.8 855.7,686.8"/>
<polyline points="799.9,745.6 797.5,748.0 795.8,751.0"/>
<polyline points="887.8,758.7 899.5,763.8 911.9,766.8"/>
<polyline points="887.8,758.7 879.0,753.8 869.5,750.6"/>
<polyline points="799.5,700.6 793.4,705.6 789.2,712.3"/>
<polyline points="791.4,673.9 789.4,671.9 787.3,669.9"/>
<polyline points="761.9,676.0 761.7,677.8 761.3,679.6"/>
<polyline points="833.9,637.9 825.9,643.5 818.2,649.5"/>
<polyline points="833.9,637.9 829.2,639.1 824.3,639.5"/>
<polyline points="789.2,712.3 785.6,712.0 782.4,710.4"/>
<polyline points="751.6,649.8 756.6,649.9 761.4,650.8"/>
<polyline points="751.6,649.8 757.6,652.7 763.5,655.7"/>
<polyline points="949.1,651.7 939.3,657.7 928.1,660.6"/>
<polyline points="949.1,651.7 951.3,646.8 954.9,643.0"/>
<polyline points="949.1,651.7 953.0,655.4 956.1,659.8"/>
<polyline points="770.3,657.7 772.8,661.7 774.8,665.8"/>
<polyline points="770.3,657.7 766.5,653.5 761.4,650.8"/>
<polyline points="770.3,657.7 766.9,656.8 763.5,655.7"/>
<polyline points="811.9,688.5 818.0,688.7 823.9,687.2"/>
<polyline points="865.3,734.6 864.9,738.9 865.3,743.2"/>
<polyline points="865.3,734.6 868.5,733.8 871.6,732.8"/>
<polyline points="787.3,669.9 780.9,668.3 774.8,665.8"/>
<polyline points="787.3,669.9 790.4,662.4 794.2,655.1"/>
<polyline points="730.4,605.8 715.8,602.3 701.8,596.8 687.9,590.8 673.1,588.2"/>
<polyline points="730.4,605.8 732.6,593.0 731.8,580.1"/>
<polyline points="730.4,605.8 737.4,593.9 746.2,583.2"/>
<polyline points="768.4,731.1 767.3,722.8 768.4,714.4"/>
<polyline points="816.8,735.2 810.3,729.4 806.5,721.7"/>
<polyline points="816.8,735.2 817.5,726.5 817.7,717.9"/>
<polyline points="863.0,680.7 859.7,684.2 855.7,686.8"/>
<polyline points="863.0,680.7 862.3,676.7 863.2,672.8"/>
<polyline points="874.0,682.3 873.9,683.0 873.7,683.7"/>
<polyline points="768.4,714.4 767.3,710.3 767.0,705.9"/>
<polyline points="768.4,714.4 769.1,709.8 770.8,705.6"/>
<polyline points="795.8,751.0 793.0,752.7 790.4,754.7"/>
<polyline points="795.8,751.0 799.8,752.9 803.9,754.5"/>
<polyline points="865.3,743.2 865.7,748.3 865.3,753.5"/>
<polyline points="865.3,743.2 868.9,738.3 871.6,732.8"/>
<polyline points="865.3,743.2 867.8,746.6 869.5,750.6"/>
<polyline points="767.0,705.9 769.0,706.1 770.8,705.6"/>
<polyline points="877.6,695.6 877.4,699.6 876.0,703.4"/>
<polyline points="790.8,817.3 795.6,813.3 800.0,809.0"/>
<polyline points="790.8,817.3 800.1,829.9 811.4,840.9"/>
<polyline points="818.2,649.5 815.9,646.3 813.0,643.6"/>
<polyline points="818.2,649.5 821.2,644.5 824.3,639.5"/>
<polyline points="806.5,721.7 812.4,720.6 817.7,717.9"/>
<polyline points="761.4,650.8 762.3,653.3 763.5,655.7"/>
<polyline points="808.9,662.4 801.8,658.2 794.2,655.1"/>
<polyline points="808.9,662.4 810.5,664.6 811.3,667.1"/>
<polyline points="813.0,643.6 818.4,640.8 824.3,639.5"/>
<polyline points="790.4,754.7 787.8,760.1 785.1,765.5"/>
<polyline points="807.7,616.5 798.8,615.5 789.8,614.9"/>
<polyline points="807.7,616.5 807.5,619.5 806.3,622.3"/>
<polyline points="850.9,699.5 847.0,698.7 843.1,698.7"/>
<polyline points="692.2,723.7 698.7,718.8 705.8,714.7"/>
<polyline points="692.2,723.7 682.9,720.3 673.7,716.6"/>
<polyline points="692.2,723.7 689.9,729.2 687.8,734.6"/>
<polyline points="862.7,645.3 874.4,630.4 882.1,613.0"/>
<polyline points="905.1,698.7 904.2,701.1 903.0,703.2"/>
<polyline points="745.3,721.6 739.3,717.9 733.1,714.4"/>
<polyline points="789.8,614.9 787.8,607.2 785.2,599.8"/>
<polyline points="789.8,614.9 797.8,619.1 806.3,622.3"/>
<polyline points="797.4,880.0 778.6,879.9 760.0,877.1"/>
<polyline points="797.4,880.0 803.6,875.8 810.4,872.7"/>
<polyline points="797.4,880.0 790.8,893.2 783.9,906.1"/>
<polyline points="855.0,896.3 860.1,889.4 864.7,882.2"/>
<polyline points="855.0,896.3 854.5,890.3 853.4,884.5"/>
<polyline points="855.0,896.3 853.3,902.3 850.0,907.6"/>
<polyline points="900.8,848.8 902.4,853.5 903.8,858.2"/>
<polyline points="900.8,848.8 895.7,852.3 890.7,856.1"/>
<polyline points="900.8,848.8 900.5,847.6 900.4,846.4"/>
<polyline points="900.8,848.8 901.2,852.0 900.5,855.1"/>
<polyline points="900.8,848.8 899.9,841.3 896.4,834.5"/>
<polyline points="863.3,942.1 865.9,939.4 869.2,937.9"/>
<polyline points="863.3,942.1 878.8,942.8 894.3,943.4"/>
<polyline points="863.3,942.1 862.9,949.3 861.4,956.3"/>
<polyline points="863.3,942.1 871.7,931.4 883.4,924.5"/>
<polyline points="863.3,942.1 853.2,940.4 843.6,936.9"/>
<polyline points="863.3,942.1 868.5,953.1 870.5,965.1"/>
<polyline points="954.6,900.7 951.0,890.6 948.2,880.2"/>
<polyline points="954.6,900.7 954.6,888.0 950.6,876.0"/>
<polyline points="954.6,900.7 948.3,897.7 943.3,892.9"/>
<polyline points="870.5,830.0 875.8,839.2 880.0,849.1"/>
<polyline points="870.5,830.0 873.7,822.1 875.6,813.8"/>
<polyline points="869.2,937.9 881.6,941.3 894.3,943.4"/>
<polyline points="869.2,937.9 867.1,947.8 861.4,956.3"/>
<polyline points="869.2,937.9 875.6,930.4 883.4,924.5"/>
<polyline points="869.2,937.9 856.3,938.5 843.6,936.9"/>
<polyline points="903.8,858.2 903.0,852.0 900.4,846.4"/>
<polyline points="903.8,858.2 900.8,867.2 897.4,876.0"/>
<polyline points="903.8,858.2 902.0,856.8 900.5,855.1"/>
<polyline points="903.8,858.2 903.8,862.7 903.8,867.1"/>
<polyline points="835.0,876.8 842.0,873.6 849.2,870.5"/>
<polyline points="835.0,876.8 844.7,879.4 853.4,884.5"/>
<polyline points="835.0,876.8 822.8,874.0 810.4,872.7"/>
<polyline points="835.0,876.8 834.4,870.4 832.7,864.1"/>
<polyline points="849.2,870.5 857.0,876.3 864.7,882.2"/>
<polyline points="849.2,870.5 851.2,877.5 853.4,884.5"/>
<polyline points="849.2,870.5 841.3,866.4 832.7,864.1"/>
<polyline points="915.3,913.7 916.2,914.2 917.4,914.4"/>
<polyline points="915.3,913.7 915.7,904.1 915.4,894.6"/>
<polyline points="915.3,913.7 920.4,913.4 925.2,914.9"/>
<polyline points="890.7,856.1 885.9,857.0 881.2,857.9"/>
<polyline points="890.7,856.1 885.6,852.2 880.0,849.1"/>
<polyline points="890.7,856.1 883.8,859.4 876.4,861.7"/>
<polyline points="890.7,856.1 895.6,856.0 900.5,855.1"/>
<polyline points="890.7,856.1 892.0,863.3 892.5,870.7"/>
<polyline points="894.3,943.4 889.3,933.7 883.4,924.5"/>
<polyline points="900.3,813.0 887.9,812.8 875.6,813.8"/>
<polyline points="900.3,813.0 899.9,806.0 898.6,799.2"/>
<polyline points="900.3,813.0 896.5,823.4 896.4,834.5"/>
<polyline points="900.3,813.0 918.4,815.8 936.7,815.7"/>
<polyline points="948.2,880.2 949.6,878.2 950.6,876.0"/>
<polyline points="948.2,880.2 967.1,872.3 984.6,861.8"/>
<polyline points="948.2,880.2 946.4,886.8 943.3,892.9"/>
<polyline points="1026.8,850.9 1036.9,845.3 1046.5,838.7"/>
<polyline points="1026.8,850.9 1012.6,853.8 999.2,860.3 984.6,861.8"/>
<polyline points="1026.8,850.9 1038.4,860.6 1051.8,867.6 1063.9,876.6 1075.9,885.6"/>
<polyline points="881.2,857.9 880.6,853.5 880.0,849.1"/>
<polyline points="881.2,857.9 878.6,859.6 876.4,861.7"/>
<polyline points="900.4,846.4 900.0,850.8 900.5,855.1"/>
<polyline points="900.4,846.4 898.3,840.5 896.4,834.5"/>
<polyline points="824.9,791.8 823.2,791.9 821.6,792.6"/>
<polyline points="880.0,849.1 878.3,855.4 876.4,861.7"/>
<polyline points="861.4,956.3 852.7,946.4 843.6,936.9"/>
<polyline points="861.4,956.3 865.1,961.6 870.5,965.1"/>
<polyline points="861.4,956.3 870.4,972.7 877.1,990.1"/>
<polyline points="917.4,914.4 917.2,904.4 915.4,894.6"/>
<polyline points="917.4,914.4 921.3,915.4 925.2,914.9"/>
<polyline points="917.4,914.4 928.1,922.2 935.8,933.1"/>
<polyline points="864.7,882.2 858.9,882.7 853.4,884.5"/>
<polyline points="864.7,882.2 856.6,894.5 850.0,907.6"/>
<polyline points="915.4,894.6 920.1,904.8 925.2,914.9"/>
<polyline points="897.4,876.0 895.3,873.1 892.5,870.7"/>
<polyline points="897.4,876.0 901.2,872.0 903.8,867.1"/>
<polyline points="826.4,840.0 837.1,839.8 847.5,842.7"/>
<polyline points="826.4,840.0 818.9,840.5 811.4,840.9"/>
<polyline points="826.4,840.0 836.9,843.1 847.7,845.3"/>
<polyline points="900.5,855.1 899.3,844.7 896.4,834.5"/>
<polyline points="853.4,884.5 849.6,895.8 850.0,907.6"/>
<polyline points="847.5,842.7 847.4,844.0 847.7,845.3"/>
<polyline points="847.5,842.7 838.7,852.4 832.7,864.1"/>
<polyline points="1116.4,987.2 1113.7,979.9 1113.7,972.0"/>
<polyline points="1116.4,987.2 1125.9,985.5 1135.5,984.3"/>
<polyline points="1116.4,987.2 1125.9,990.8 1136.0,991.2"/>
<polyline points="1135.8,1018.6 1132.0,1022.0 1129.7,1026.5"/>
<polyline points="1135.8,1018.6 1138.5,1014.7 1140.3,1010.4"/>
<polyline points="1135.8,1018.6 1130.3,1012.3 1125.6,1005.3"/>
<polyline points="1135.8,1018.6 1152.1,1021.8 1168.7,1021.4"/>
<polyline points="1113.8,1040.2 1121.8,1033.5 1129.7,1026.5"/>
<polyline points="1113.8,1040.2 1112.9,1040.1 1111.9,1040.2"/>
<polyline points="1113.8,1040.2 1104.5,1047.6 1096.2,1056.0"/>
<polyline points="1113.8,1040.2 1128.5,1049.6 1145.3,1054.4"/>
<polyline points="1008.2,997.2 1001.3,977.6 991.6,959.1"/>
<polyline points="1008.2,997.2 996.8,989.2 983.4,985.9"/>
<polyline points="1008.2,997.2 996.2,1006.2 984.2,1015.2"/>
<polyline points="1008.2,997.2 1021.3,1007.1 1034.3,1017.2"/>
<polyline points="1039.1,983.5 1051.3,985.3 1063.5,985.6"/>
<polyline points="1039.1,983.5 1037.6,971.7 1035.4,959.9"/>
<polyline points="1039.1,983.5 1035.8,978.6 1034.4,972.8"/>
<polyline points="1039.1,983.5 1033.6,999.9 1034.3,1017.2"/>
<polyline points="1081.3,1044.2 1082.9,1051.2 1083.5,1058.3"/>
<polyline points="1081.3,1044.2 1084.8,1038.9 1088.3,1033.6"/>
<polyline points="1081.3,1044.2 1070.4,1052.3 1057.2,1055.9"/>
<polyline points="1081.3,1044.2 1089.5,1049.2 1096.2,1056.0"/>
<polyline points="1083.5,1058.3 1088.0,1046.3 1088.3,1033.6"/>
<polyline points="1083.5,1058.3 1070.3,1058.3 1057.2,1055.9"/>
<polyline points="1083.5,1058.3 1063.8,1060.5 1044.0,1060.0"/>
<polyline points="1083.5,1058.3 1090.0,1057.9 1096.2,1056.0"/>
<polyline points="1083.5,1058.3 1094.8,1066.4 1104.3,1076.6"/>
<polyline points="1066.3,998.0 1075.4,988.6 1083.2,978.1"/>
<polyline points="1066.3,998.0 1065.1,991.8 1063.5,985.6"/>
<polyline points="1066.3,998.0 1070.3,993.6 1072.7,988.2"/>
<polyline points="1066.3,998.0 1050.4,1007.7 1034.3,1017.2"/>
<polyline points="1088.3,1033.6 1087.5,1025.4 1087.9,1017.1"/>
<polyline points="1088.3,1033.6 1092.0,1027.1 1096.8,1021.5"/>
<polyline points="1083.2,978.1 1077.5,964.4 1073.3,950.3"/>
<polyline points="1083.2,978.1 1074.1,983.8 1063.5,985.6"/>
<polyline points="1083.2,978.1 1088.6,979.6 1093.2,982.7"/>
<polyline points="1083.2,978.1 1073.4,965.5 1067.5,950.7"/>
<polyline points="1083.2,978.1 1078.3,983.5 1072.7,988.2"/>
<polyline points="1073.3,950.3 1066.6,967.4 1063.5,985.6"/>
<polyline points="1073.3,950.3 1070.4,950.0 1067.5,950.7"/>
<polyline points="1129.7,1026.5 1134.5,1018.1 1140.3,1010.4"/>
<polyline points="1129.7,1026.5 1121.5,1034.3 1111.9,1040.2"/>
<polyline points="1129.7,1026.5 1138.7,1039.8 1145.3,1054.4"/>
<polyline points="1100.2,1009.8 1102.1,1008.3 1103.9,1006.6"/>
<polyline points="1100.2,1009.8 1094.1,1013.5 1087.9,1017.1"/>
<polyline points="1100.2,1009.8 1099.4,1015.9 1096.8,1021.5"/>
<polyline points="1063.5,985.6 1049.1,979.1 1034.4,972.8"/>
<polyline points="1063.5,985.6 1068.2,986.5 1072.7,988.2"/>
<polyline points="1113.7,972.0 1125.5,976.6 1135.5,984.3"/>
<polyline points="1113.7,972.0 1102.8,976.2 1093.2,982.7"/>
<polyline points="1113.7,972.0 1124.2,962.8 1137.1,957.3"/>
<polyline points="1113.7,972.0 1123.9,959.8 1135.8,948.9 1145.2,936.0"/>
<polyline points="1057.2,1055.9 1050.6,1057.8 1044.0,1060.0"/>
<polyline points="1140.3,1010.4 1133.3,1006.7 1125.6,1005.3"/>
<polyline points="1140.3,1010.4 1147.1,1000.2 1155.3,991.1"/>
<polyline points="1140.3,1010.4 1153.5,1018.4 1168.7,1021.4"/>
<polyline points="1103.9,1006.6 1096.9,1013.3 1087.9,1017.1"/>
<polyline points="1103.9,1006.6 1099.2,1013.5 1096.8,1021.5"/>
<polyline points="1135.5,984.3 1135.9,987.7 1136.0,991.2"/>
<polyline points="1135.5,984.3 1133.6,970.6 1137.1,957.3"/>
<polyline points="1135.5,984.3 1145.8,986.7 1155.3,991.1"/>
<polyline points="1087.9,1017.1 1092.0,1020.2 1096.8,1021.5"/>
<polyline points="1136.0,991.2 1130.2,997.8 1125.6,1005.3"/>
<polyline points="1136.0,991.2 1145.7,992.0 1155.3,991.1"/>
<polyline points="1093.2,982.7 1082.6,984.2 1072.7,988.2"/>
<polyline points="1120.1,1130.2 1119.7,1131.1 1119.0,1131.8"/>
<polyline points="1120.1,1130.2 1113.6,1129.8 1107.3,1128.5"/>
<polyline points="1120.1,1130.2 1129.1,1124.9 1138.1,1120.0"/>
<polyline points="1120.1,1130.2 1118.6,1129.0 1116.8,1128.3"/>
<polyline points="1120.1,1130.2 1115.2,1118.9 1107.0,1109.7"/>
<polyline points="1142.5,1176.9 1134.0,1169.8 1127.8,1160.7"/>
<polyline points="1142.5,1176.9 1144.4,1167.5 1142.5,1158.1"/>
<polyline points="1142.5,1176.9 1136.1,1176.4 1129.7,1176.1"/>
<polyline points="1119.0,1131.8 1113.0,1130.6 1107.3,1128.5"/>
<polyline points="1119.0,1131.8 1127.6,1124.3 1138.1,1120.0"/>
<polyline points="1119.0,1131.8 1117.9,1130.1 1116.8,1128.3"/>
<polyline points="1127.8,1160.7 1135.1,1159.5 1142.5,1158.1"/>
<polyline points="1127.8,1160.7 1127.1,1156.8 1126.6,1153.0"/>
<polyline points="1127.8,1160.7 1116.0,1164.8 1103.8,1167.0"/>
<polyline points="1127.8,1160.7 1127.3,1168.6 1129.7,1176.1"/>
<polyline points="1161.1,1112.2 1156.0,1116.1 1150.7,1119.9"/>
<polyline points="1161.1,1112.2 1161.7,1116.5 1161.6,1120.9"/>
<polyline points="1161.1,1112.2 1162.9,1120.4 1166.4,1128.0"/>
<polyline points="1161.1,1112.2 1172.5,1098.8 1185.1,1086.6 1198.6,1075.4"/>
<polyline points="1161.1,1112.2 1163.6,1109.7 1166.7,1108.1"/>
<polyline points="1150.7,1119.9 1156.2,1119.8 1161.6,1120.9"/>
<polyline points="1150.7,1119.9 1144.4,1118.7 1138.1,1120.0"/>
<polyline points="1150.7,1119.9 1158.4,1124.3 1166.4,1128.0"/>
<polyline points="1150.7,1119.9 1158.8,1114.1 1166.7,1108.1"/>
<polyline points="1161.6,1120.9 1163.7,1124.6 1166.4,1128.0"/>
<polyline points="1161.6,1120.9 1164.6,1114.7 1166.7,1108.1"/>
<polyline points="1107.3,1128.5 1112.0,1128.5 1116.8,1128.3"/>
<polyline points="1107.3,1128.5 1095.6,1113.9 1085.4,1098.3"/>
<polyline points="1107.3,1128.5 1105.8,1119.1 1107.0,1109.7"/>
<polyline points="1146.4,1154.5 1144.8,1156.7 1142.5,1158.1"/>
<polyline points="1146.4,1154.5 1142.8,1152.3 1140.1,1149.1"/>
<polyline points="1146.4,1154.5 1151.1,1154.5 1155.8,1154.9"/>
<polyline points="1142.5,1158.1 1140.4,1153.9 1140.1,1149.1"/>
<polyline points="1142.5,1158.1 1134.7,1155.0 1126.6,1153.0"/>
<polyline points="1142.5,1158.1 1149.1,1156.1 1155.8,1154.9"/>
<polyline points="1142.5,1158.1 1137.0,1167.8 1129.7,1176.1"/>
<polyline points="1140.1,1149.1 1133.5,1151.5 1126.6,1153.0"/>
<polyline points="1140.1,1149.1 1148.0,1152.0 1155.8,1154.9"/>
<polyline points="1078.1,1161.7 1084.7,1156.5 1092.4,1153.0"/>
<polyline points="1078.1,1161.7 1090.6,1166.2 1103.8,1167.0"/>
<polyline points="1078.1,1161.7 1078.5,1168.7 1078.8,1175.7"/>
<polyline points="1116.8,1128.3 1110.3,1119.9 1107.0,1109.7"/>
<polyline points="781.6,1167.0 784.0,1170.4 785.2,1174.5"/>
<polyline points="781.6,1167.0 793.6,1178.1 808.4,1185.1"/>
<polyline points="781.6,1167.0 777.1,1162.1 772.4,1157.5"/>
<polyline points="781.6,1167.0 775.7,1165.0 770.2,1162.1"/>
<polyline points="745.6,1174.5 757.3,1177.4 769.3,1178.2"/>
<polyline points="745.6,1174.5 733.2,1162.6 725.8,1147.1"/>
<polyline points="745.6,1174.5 739.5,1173.4 733.3,1174.3"/>
<polyline points="745.6,1174.5 748.9,1177.1 752.9,1178.5"/>
<polyline points="784.7,1136.3 776.2,1132.2 767.3,1129.3"/>
<polyline points="784.7,1136.3 780.4,1148.0 772.4,1157.5"/>
<polyline points="784.7,1136.3 796.6,1123.1 809.3,1110.6"/>
<polyline points="784.7,1136.3 788.7,1136.6 792.6,1135.9"/>
<polyline points="769.3,1178.2 777.3,1176.6 785.2,1174.5"/>
<polyline points="769.3,1178.2 772.2,1183.8 773.7,1190.0"/>
<polyline points="769.3,1178.2 764.1,1190.1 756.6,1200.7"/>
<polyline points="769.3,1178.2 769.0,1167.6 772.4,1157.5"/>
<polyline points="769.3,1178.2 769.8,1170.2 770.2,1162.1"/>
<polyline points="769.3,1178.2 761.1,1179.4 752.9,1178.5"/>
<polyline points="785.2,1174.5 779.6,1182.3 773.7,1190.0"/>
<polyline points="785.2,1174.5 795.9,1181.6 808.4,1185.1"/>
<polyline points="773.7,1190.0 764.3,1194.0 756.6,1200.7"/>
<polyline points="848.0,1165.9 839.6,1155.4 831.3,1144.9"/>
<polyline points="848.0,1165.9 849.7,1178.4 854.3,1190.2"/>
<polyline points="848.0,1165.9 858.4,1175.2 865.8,1187.0"/>
<polyline points="713.9,1210.5 703.0,1196.3 687.8,1186.8"/>
<polyline points="713.9,1210.5 695.0,1212.5 677.4,1219.5"/>
<polyline points="713.9,1210.5 717.3,1227.8 720.5,1245.1"/>
<polyline points="750.0,1101.6 756.5,1116.8 767.3,1129.3"/>
<polyline points="750.0,1101.6 739.6,1102.3 729.2,1101.3"/>
<polyline points="750.0,1101.6 752.3,1097.1 752.8,1092.1"/>
<polyline points="686.9,1164.9 690.2,1158.2 694.4,1152.0"/>
<polyline points="686.9,1164.9 701.0,1161.3 714.4,1156.3 725.8,1147.1"/>
<polyline points="686.9,1164.9 685.5,1175.9 687.8,1186.8"/>
<polyline points="808.4,1185.1 811.5,1193.1 816.0,1200.5"/>
<polyline points="808.4,1185.1 814.7,1203.9 815.1,1223.7"/>
<polyline points="756.6,1200.7 753.8,1189.8 752.9,1178.5"/>
<polyline points="756.6,1200.7 755.1,1217.7 755.7,1234.8"/>
<polyline points="767.3,1129.3 767.5,1143.8 772.4,1157.5"/>
<polyline points="767.3,1129.3 779.7,1133.5 792.6,1135.9"/>
<polyline points="772.4,1157.5 771.7,1160.0 770.2,1162.1"/>
<polyline points="772.4,1157.5 781.8,1146.1 792.6,1135.9"/>
<polyline points="852.5,780.0 851.4,778.1 850.7,776.1"/>
<polyline points="852.5,780.0 848.1,778.2 844.4,775.2"/>
<polyline points="852.5,780.0 853.7,781.3 854.6,782.9"/>
<polyline points="740.4,838.5 732.4,827.1 724.2,815.8"/>
<polyline points="740.4,838.5 754.9,837.8 769.3,838.5"/>
<polyline points="740.4,838.5 729.2,851.6 715.8,862.5"/>
<polyline points="810.0,768.1 806.7,761.4 803.9,754.5"/>
<polyline points="810.0,768.1 808.9,764.9 806.8,762.2"/>
<polyline points="869.2,791.7 870.6,792.8 872.1,793.8"/>
<polyline points="855.5,759.1 860.2,765.4 866.0,770.7"/>
<polyline points="855.5,759.1 860.9,757.1 865.3,753.5"/>
<polyline points="855.5,759.1 851.6,757.2 848.6,754.0"/>
<polyline points="930.6,792.4 934.8,786.1 936.8,778.7"/>
<polyline points="930.6,792.4 935.5,783.3 943.1,776.2"/>
<polyline points="930.6,792.4 935.1,803.7 936.7,815.7"/>
<polyline points="930.6,792.4 937.1,804.1 945.7,814.3"/>
<polyline points="837.2,768.1 836.4,769.3 835.9,770.6"/>
<polyline points="837.2,768.1 840.6,771.8 844.4,775.2"/>
<polyline points="837.2,768.1 842.8,761.0 848.6,754.0"/>
<polyline points="705.8,714.7 699.0,699.5 689.6,685.7"/>
<polyline points="705.8,714.7 689.8,716.1 673.7,716.6"/>
<polyline points="705.8,714.7 698.0,725.8 687.8,734.6"/>
<polyline points="803.9,754.5 805.8,758.2 806.8,762.2"/>
<polyline points="896.8,725.5 903.3,725.7 909.4,728.0"/>
<polyline points="896.8,725.5 884.9,731.5 871.6,732.8"/>
<polyline points="896.8,725.5 901.9,714.9 903.0,703.2"/>
<polyline points="865.3,753.5 856.9,752.2 848.6,754.0"/>
<polyline points="865.3,753.5 867.3,751.9 869.5,750.6"/>
<polyline points="850.7,776.1 847.5,775.8 844.4,775.2"/>
<polyline points="850.7,776.1 852.9,779.3 854.6,782.9"/>
<polyline points="835.9,770.6 839.9,773.4 844.4,775.2"/>
<polyline points="848.3,811.1 861.9,812.4 875.6,813.8"/>
<polyline points="979.8,791.2 978.5,776.1 982.4,761.2 982.1,746.0"/>
<polyline points="979.8,791.2 962.6,780.9 943.1,776.2"/>
<polyline points="979.8,791.2 991.2,790.4 1002.3,793.7"/>
<polyline points="979.8,791.2 962.9,803.0 945.7,814.3"/>
<polyline points="875.6,813.8 872.7,804.0 872.1,793.8"/>
<polyline points="799.7,795.4 799.4,802.2 800.0,809.0"/>
<polyline points="799.7,795.4 798.4,793.3 797.3,791.0"/>
<polyline points="887.4,781.9 893.7,790.1 898.6,799.2"/>
<polyline points="887.4,781.9 899.1,773.4 911.9,766.8"/>
<polyline points="887.4,781.9 879.5,787.5 872.1,793.8"/>
<polyline points="898.6,799.2 885.4,796.5 872.1,793.8"/>
<polyline points="909.4,728.0 906.1,715.6 903.0,703.2"/>
<polyline points="909.4,728.0 921.4,735.2 934.3,740.6"/>
<polyline points="911.9,766.8 924.4,772.6 936.8,778.7"/>
<polyline points="911.9,766.8 926.7,774.3 943.1,776.2"/>
<polyline points="785.1,765.5 780.8,765.0 776.4,764.3"/>
<polyline points="800.0,809.0 799.7,799.9 797.3,791.0"/>
<polyline points="673.1,588.2 688.0,588.3 702.8,586.7 717.3,583.6 731.8,580.1"/>
<polyline points="731.8,580.1 738.8,582.5 746.2,583.2"/>
<polyline points="851.5,583.3 859.4,579.8 866.7,575.0"/>
<polyline points="866.7,575.0 881.4,573.1 896.1,573.4 910.8,575.0"/>
<polyline points="910.8,575.0 927.1,579.0 943.4,583.0 957.4,592.8"/>
<polyline points="910.8,575.0 900.3,587.0 891.9,600.6 882.1,613.0"/>
<polyline points="910.8,575.0 910.0,589.2 909.9,603.4 903.8,616.7"/>
<polyline points="957.4,592.8 973.5,587.1 990.4,585.2 1006.9,581.6 1023.7,579.2"/>
<polyline points="957.4,592.8 957.0,609.5 954.9,626.2 954.9,643.0"/>
<polyline points="1023.7,579.2 1018.8,597.1 1016.0,615.4 1016.2,634.0"/>
<polyline points="1023.7,579.2 1029.9,594.0 1031.0,610.3 1037.4,625.0"/>
<polyline points="882.1,613.0 893.2,613.5 903.8,616.7"/>
<polyline points="954.9,643.0 955.2,651.4 956.1,659.8"/>
<polyline points="1016.2,634.0 1027.1,630.2 1037.4,625.0"/>
<polyline points="1016.2,634.0 1023.6,648.5 1027.2,664.6 1034.9,679.0"/>
<polyline points="1037.4,625.0 1035.9,643.0 1034.0,661.0 1034.9,679.0"/>
<polyline points="689.6,685.7 705.5,684.0 721.2,686.9"/>
<polyline points="673.7,716.6 679.5,726.5 687.8,734.6"/>
<polyline points="955.8,709.1 946.3,725.7 934.3,740.6"/>
<polyline points="955.8,709.1 964.0,721.9 971.8,734.8 982.1,746.0"/>
<polyline points="1160.8,702.2 1160.3,717.7 1160.5,733.3 1158.6,748.7 1155.5,763.9"/>
<polyline points="776.4,764.3 770.2,774.9 768.2,787.0"/>
<polyline points="934.3,740.6 950.1,743.4 966.1,744.6 982.1,746.0"/>
<polyline points="982.1,746.0 988.5,762.1 994.5,778.3 1002.3,793.7"/>
<polyline points="1084.1,745.9 1098.6,748.6 1113.6,749.5 1128.1,752.0 1141.5,758.9 1155.5,763.9"/>
<polyline points="1084.1,745.9 1084.4,763.4 1082.7,781.0 1086.8,798.2"/>
<polyline points="731.9,803.6 727.7,809.5 724.2,815.8"/>
<polyline points="936.8,778.7 940.1,777.9 943.1,776.2"/>
<polyline points="936.8,778.7 937.9,797.4 945.7,814.3"/>
<polyline points="1002.3,793.7 988.1,798.9 974.2,804.6 960.0,809.5 945.7,814.3"/>
<polyline points="1086.8,798.2 1077.2,808.8 1065.8,817.6 1055.9,828.0 1046.5,838.7"/>
<polyline points="665.3,817.5 680.0,815.2 694.8,818.2 709.5,817.0 724.2,815.8"/>
<polyline points="665.3,817.5 677.1,829.6 689.6,841.0 702.5,852.0 715.8,862.5"/>
<polyline points="724.2,815.8 720.9,831.3 720.6,847.3 715.8,862.5"/>
<polyline points="811.4,840.9 823.7,851.0 832.7,864.1"/>
<polyline points="847.7,845.3 839.3,854.0 832.7,864.1"/>
<polyline points="936.7,815.7 941.2,814.8 945.7,814.3"/>
<polyline points="1046.5,838.7 1058.2,853.2 1065.6,870.3 1075.9,885.6"/>
<polyline points="715.8,862.5 730.0,868.8 744.4,874.6 760.0,877.1"/>
<polyline points="760.0,877.1 764.1,893.5 766.7,910.3"/>
<polyline points="760.0,877.1 773.9,890.0 783.9,906.1"/>
<polyline points="810.4,872.7 822.0,869.6 832.7,864.1"/>
<polyline points="892.5,870.7 898.0,868.3 903.8,867.1"/>
<polyline points="950.6,876.0 968.1,870.0 984.6,861.8"/>
<polyline points="950.6,876.0 946.3,884.1 943.3,892.9"/>
<polyline points="1075.9,885.6 1095.2,881.8 1114.8,881.2"/>
<polyline points="1114.8,881.2 1127.8,874.8 1141.8,871.7 1156.1,869.8 1169.6,865.0"/>
<polyline points="1114.8,881.2 1122.0,895.1 1126.7,910.4 1137.4,922.4 1145.2,936.0"/>
<polyline points="1169.6,865.0 1170.3,880.8 1172.8,896.5 1174.5,912.2 1177.0,927.8"/>
<polyline points="766.7,910.3 775.2,907.5 783.9,906.1"/>
<polyline points="766.7,910.3 759.8,924.4 751.2,937.5 742.2,950.4 734.3,963.9"/>
<polyline points="766.7,910.3 756.1,920.0 749.1,932.7"/>
<polyline points="783.9,906.1 771.9,914.5 760.5,923.5 749.1,932.7"/>
<polyline points="925.2,914.9 929.9,924.3 935.8,933.1"/>
<polyline points="925.2,914.9 936.2,931.7 948.7,947.4"/>
<polyline points="1177.0,927.8 1164.0,938.1 1151.4,948.9 1137.1,957.3"/>
<polyline points="1177.0,927.8 1160.8,930.7 1145.2,936.0"/>
<polyline points="1177.0,927.8 1191.5,936.0 1205.2,945.5"/>
<polyline points="1177.0,927.8 1192.4,931.0 1207.6,934.5 1221.6,941.5 1235.3,949.2"/>
<polyline points="734.3,963.9 742.9,948.8 749.1,932.7"/>
<polyline points="734.3,963.9 750.9,971.4 768.3,976.8"/>
<polyline points="811.8,966.6 822.4,956.7 834.3,948.2 843.6,936.9"/>
<polyline points="811.8,966.6 797.6,971.0 783.2,974.9 768.3,976.8"/>
<polyline points="811.8,966.6 804.0,981.4 799.3,997.4"/>
<polyline points="811.8,966.6 815.9,983.5 822.3,999.8"/>
<polyline points="870.5,965.1 874.2,977.5 877.1,990.1"/>
<polyline points="935.8,933.1 941.1,941.3 948.7,947.4"/>
<polyline points="948.7,947.4 950.0,961.9 947.1,976.0 944.0,990.0"/>
<polyline points="991.6,959.1 1006.2,961.6 1020.8,963.3 1035.4,959.9"/>
<polyline points="991.6,959.1 989.1,973.0 983.4,985.9"/>
<polyline points="1035.4,959.9 1052.0,957.3 1067.5,950.7"/>
<polyline points="1035.4,959.9 1034.9,966.3 1034.4,972.8"/>
<polyline points="1137.1,957.3 1143.0,947.3 1145.2,936.0"/>
<polyline points="1205.2,945.5 1220.3,946.3 1235.3,949.2"/>
<polyline points="1205.2,945.5 1205.0,960.6 1204.7,975.7 1203.9,990.8 1207.7,1005.7"/>
<polyline points="1235.3,949.2 1229.1,963.7 1222.8,978.1 1216.8,992.7 1207.7,1005.7"/>
<polyline points="768.3,976.8 783.1,988.2 799.3,997.4"/>
<polyline points="799.3,997.4 811.0,996.6 822.3,999.8"/>
<polyline points="799.3,997.4 785.3,1005.2 774.3,1017.2 761.0,1026.0"/>
<polyline points="799.3,997.4 808.9,1009.1 815.3,1022.8"/>
<polyline points="822.3,999.8 816.7,1010.6 815.3,1022.8"/>
<polyline points="822.3,999.8 837.2,1008.0 851.3,1017.7 867.0,1024.6"/>
<polyline points="877.1,990.1 873.1,1007.7 867.0,1024.6"/>
<polyline points="924.0,1000.5 933.5,994.2 944.0,990.0"/>
<polyline points="924.0,1000.5 922.7,1016.6 919.8,1032.4"/>
<polyline points="924.0,1000.5 934.2,1016.7 949.5,1028.3"/>
<polyline points="944.0,990.0 963.5,985.8 983.4,985.9"/>
<polyline points="944.0,990.0 943.9,1009.6 949.5,1028.3"/>
<polyline points="983.4,985.9 981.5,1000.6 984.2,1015.2"/>
<polyline points="1155.3,991.1 1172.5,997.0 1190.4,1000.1 1207.7,1005.7"/>
<polyline points="1155.3,991.1 1160.6,1006.9 1168.7,1021.4"/>
<polyline points="1207.7,1005.7 1193.8,1008.7 1180.9,1014.3 1168.7,1021.4"/>
<polyline points="1207.7,1005.7 1211.4,1019.9 1211.9,1034.5"/>
<polyline points="761.0,1026.0 747.1,1041.7 734.3,1058.4"/>
<polyline points="761.0,1026.0 751.4,1038.6 746.9,1053.9"/>
<polyline points="815.3,1022.8 828.2,1032.8 841.9,1041.9"/>
<polyline points="815.3,1022.8 821.0,1037.7 822.3,1053.6"/>
<polyline points="841.9,1041.9 853.4,1031.8 867.0,1024.6"/>
<polyline points="841.9,1041.9 830.3,1051.4 821.2,1063.8 808.6,1072.2"/>
<polyline points="841.9,1041.9 833.3,1049.7 822.3,1053.6"/>
<polyline points="919.8,1032.4 934.5,1029.6 949.5,1028.3"/>
<polyline points="919.8,1032.4 911.6,1045.7 901.8,1057.9 891.7,1069.8"/>
<polyline points="919.8,1032.4 928.4,1041.7 933.4,1053.4"/>
<polyline points="949.5,1028.3 967.0,1022.1 984.2,1015.2"/>
<polyline points="949.5,1028.3 940.5,1040.3 933.4,1053.4"/>
<polyline points="949.5,1028.3 957.4,1041.8 963.2,1056.2"/>
<polyline points="1111.9,1040.2 1103.8,1047.8 1096.2,1056.0"/>
<polyline points="1111.9,1040.2 1128.6,1047.5 1145.3,1054.4"/>
<polyline points="1168.7,1021.4 1182.6,1027.5 1197.0,1031.6 1211.9,1034.5"/>
<polyline points="1211.9,1034.5 1206.6,1047.9 1202.2,1061.5 1198.6,1075.4"/>
<polyline points="734.3,1058.4 740.9,1056.9 746.9,1053.9"/>
<polyline points="734.3,1058.4 735.0,1073.0 734.7,1087.5 729.2,1101.3"/>
<polyline points="734.3,1058.4 741.3,1076.4 752.8,1092.1"/>
<polyline points="746.9,1053.9 747.5,1073.3 752.8,1092.1"/>
<polyline points="808.6,1072.2 813.7,1061.5 822.3,1053.6"/>
<polyline points="808.6,1072.2 806.2,1091.4 809.3,1110.6"/>
<polyline points="891.7,1069.8 905.8,1065.0 920.4,1061.3 933.4,1053.4"/>
<polyline points="891.7,1069.8 878.5,1083.9 867.6,1099.8"/>
<polyline points="933.4,1053.4 948.4,1054.1 963.2,1056.2"/>
<polyline points="933.4,1053.4 940.9,1066.5 943.9,1081.3 949.4,1095.2"/>
<polyline points="963.2,1056.2 977.6,1063.3 992.8,1068.6 1008.0,1074.0"/>
<polyline points="963.2,1056.2 957.8,1076.2 949.4,1095.2"/>
<polyline points="1008.0,1074.0 1025.7,1066.1 1044.0,1060.0"/>
<polyline points="1008.0,1074.0 999.5,1083.3 994.7,1094.8"/>
<polyline points="1096.2,1056.0 1100.4,1066.3 1104.3,1076.6"/>
<polyline points="1104.3,1076.6 1096.1,1088.6 1085.4,1098.3"/>
<polyline points="1198.6,1075.4 1185.8,1084.2 1174.0,1093.9 1166.7,1108.1"/>
<polyline points="729.2,1101.3 740.4,1095.2 752.8,1092.1"/>
<polyline points="809.3,1110.6 824.3,1108.1 839.4,1109.7 854.5,1108.8"/>
<polyline points="809.3,1110.6 801.5,1123.6 792.6,1135.9"/>
<polyline points="809.3,1110.6 820.5,1127.6 831.3,1144.9"/>
<polyline points="854.5,1108.8 861.4,1104.8 867.6,1099.8"/>
<polyline points="854.5,1108.8 847.9,1121.5 839.3,1133.0 831.3,1144.9"/>
<polyline points="867.6,1099.8 877.9,1112.7 887.6,1126.1 894.0,1141.5"/>
<polyline points="911.5,1126.1 902.6,1133.6 894.0,1141.5"/>
<polyline points="911.5,1126.1 918.5,1140.4 924.7,1155.1"/>
<polyline points="911.5,1126.1 908.6,1141.6 911.3,1157.4 910.1,1173.0"/>
<polyline points="949.4,1095.2 964.5,1097.6 979.6,1095.0 994.7,1094.8"/>
<polyline points="994.7,1094.8 1009.3,1100.5 1024.3,1105.2 1037.3,1114.4"/>
<polyline points="994.7,1094.8 989.6,1109.1 980.5,1121.5 976.4,1136.2"/>
<polyline points="1037.3,1114.4 1024.2,1129.9 1009.7,1144.1"/>
<polyline points="1037.3,1114.4 1031.5,1127.3 1025.6,1140.2 1025.7,1154.8"/>
<polyline points="1085.4,1098.3 1095.8,1104.8 1107.0,1109.7"/>
<polyline points="694.4,1152.0 709.8,1147.6 725.8,1147.1"/>
<polyline points="694.4,1152.0 691.6,1169.5 687.8,1186.8"/>
<polyline points="725.8,1147.1 731.4,1160.2 733.3,1174.3"/>
<polyline points="792.6,1135.9 812.3,1138.7 831.3,1144.9"/>
<polyline points="894.0,1141.5 909.8,1147.3 924.7,1155.1"/>
<polyline points="894.0,1141.5 904.2,1156.2 910.1,1173.0"/>
<polyline points="924.7,1155.1 916.8,1163.5 910.1,1173.0"/>
<polyline points="924.7,1155.1 937.1,1164.3 950.5,1172.4 962.3,1182.4"/>
<polyline points="976.4,1136.2 993.5,1138.5 1009.7,1144.1"/>
<polyline points="976.4,1136.2 993.6,1140.4 1010.6,1145.2 1025.7,1154.8"/>
<polyline points="976.4,1136.2 972.1,1151.7 969.7,1167.8 962.3,1182.4"/>
<polyline points="1009.7,1144.1 1017.7,1149.5 1025.7,1154.8"/>
<polyline points="1009.7,1144.1 1003.1,1160.2 993.2,1174.6 985.9,1190.4"/>
<polyline points="1092.4,1153.0 1098.7,1159.5 1103.8,1167.0"/>
<polyline points="1092.4,1153.0 1084.0,1163.4 1078.8,1175.7"/>
<polyline points="1103.8,1167.0 1090.5,1169.1 1078.8,1175.7"/>
<polyline points="687.8,1186.8 679.8,1202.3 677.4,1219.5"/>
<polyline points="733.3,1174.3 743.3,1175.3 752.9,1178.5"/>
<polyline points="816.0,1200.5 835.9,1198.2 854.3,1190.2"/>
<polyline points="816.0,1200.5 815.6,1212.1 815.1,1223.7"/>
<polyline points="854.3,1190.2 860.3,1189.5 865.8,1187.0"/>
<polyline points="854.3,1190.2 853.0,1210.7 851.2,1231.0"/>
<polyline points="854.3,1190.2 860.5,1202.2 867.0,1213.9"/>
<polyline points="865.8,1187.0 880.1,1180.9 895.6,1178.3 910.1,1173.0"/>
<polyline points="865.8,1187.0 867.1,1200.4 867.0,1213.9"/>
<polyline points="910.1,1173.0 914.8,1187.7 920.2,1202.2 928.5,1215.2 935.8,1228.8"/>
<polyline points="962.3,1182.4 974.9,1184.2 985.9,1190.4"/>
<polyline points="962.3,1182.4 954.7,1198.6 945.8,1214.0 935.8,1228.8"/>
<polyline points="985.9,1190.4 979.5,1204.4 971.9,1217.7 967.1,1232.5 958.0,1245.0"/>
<polyline points="985.9,1190.4 991.7,1203.5 995.0,1217.7 1002.7,1230.0"/>
<polyline points="1055.6,1206.1 1069.7,1192.8 1078.8,1175.7"/>
<polyline points="1055.6,1206.1 1042.8,1221.7 1032.2,1238.8"/>
<polyline points="1055.6,1206.1 1062.6,1218.1 1071.2,1228.9"/>
<polyline points="1078.8,1175.7 1075.6,1193.4 1070.4,1210.7 1071.2,1228.9"/>
<polyline points="641.8,1247.0 654.8,1239.3 666.0,1229.3 677.4,1219.5"/>
<polyline points="720.5,1245.1 738.1,1239.9 755.7,1234.8"/>
<polyline points="720.5,1245.1 727.6,1257.5 737.3,1267.7 747.9,1277.2"/>
<polyline points="755.7,1234.8 752.5,1248.8 751.3,1263.2 747.9,1277.2"/>
<polyline points="755.7,1234.8 765.0,1248.1 775.4,1260.5 785.8,1272.9"/>
<polyline points="815.1,1223.7 832.5,1230.4 851.2,1231.0"/>
<polyline points="815.1,1223.7 805.6,1234.8 795.6,1245.5 789.2,1258.3 785.8,1272.9"/>
<polyline points="815.1,1223.7 826.2,1233.3 838.1,1242.3 847.2,1253.7 854.2,1267.0 863.9,1277.9"/>
<polyline points="851.2,1231.0 859.3,1222.7 867.0,1213.9"/>
<polyline points="851.2,1231.0 856.8,1246.3 862.8,1261.4 863.9,1277.9"/>
<polyline points="867.0,1213.9 867.5,1230.0 869.1,1246.1 868.0,1262.1 863.9,1277.9"/>
<polyline points="935.8,1228.8 946.1,1238.0 958.0,1245.0"/>
<polyline points="958.0,1245.0 972.3,1238.3 986.8,1232.0 1002.7,1230.0"/>
<polyline points="1002.7,1230.0 1017.2,1235.1 1032.2,1238.8"/>
<polyline points="1032.2,1238.8 1051.1,1231.4 1071.2,1228.9"/>
<polyline points="747.9,1277.2 767.1,1277.3 785.8,1272.9"/>
</g>
<g transform="translate(0,482) scale(0.33926)" fill="none" stroke="#0b0b0c" stroke-width="2" stroke-linejoin="round">
<polyline points="0,520 130,530 168,535" vector-effect="non-scaling-stroke"/>
<polyline points="130,540 140,660 100,685 30,690 0,680" vector-effect="non-scaling-stroke"/>
<polyline points="60,700 72,840 60,860 0,860" vector-effect="non-scaling-stroke"/>
<polyline points="0,735 40,730" vector-effect="non-scaling-stroke"/>
</g>
<clipPath id="cjp"><polygon points="1720.0,1165.0 1687.0,1188.6 1648.4,1225.0 1609.4,1245.7 1583.5,1269.0 1570.5,1292.4 1531.6,1305.4 1495.2,1297.6 1479.7,1310.6 1479.7,1336.5 1487.5,1362.5 1479.7,1388.4 1505.6,1362.5 1544.6,1370.3 1557.5,1388.4 1583.5,1375.5 1635.4,1372.9 1674.3,1401.4 1720.0,1404.0"/></clipPath>
<g clip-path="url(#cjp)" fill="none" stroke="#0b0b0c" stroke-width="1.8" stroke-linejoin="round">
<polyline points="1681.6,1204.6 1687.0,1200.9 1693.4,1199.5"/>
<polyline points="1681.6,1204.6 1670.6,1213.2 1660.1,1222.5"/>
<polyline points="1681.6,1204.6 1678.4,1209.7 1673.6,1213.4"/>
<polyline points="1693.4,1199.5 1682.4,1204.9 1673.6,1213.4"/>
<polyline points="1693.4,1199.5 1694.5,1214.2 1698.0,1228.5"/>
<polyline points="1693.4,1199.5 1705.3,1211.7 1718.9,1221.9"/>
<polyline points="1660.1,1222.5 1666.3,1217.1 1673.6,1213.4"/>
<polyline points="1660.1,1222.5 1648.8,1230.7 1635.5,1234.9"/>
<polyline points="1660.1,1222.5 1662.6,1228.3 1666.5,1233.2"/>
<polyline points="1660.1,1222.5 1665.3,1234.5 1671.4,1246.1"/>
<polyline points="1673.6,1213.4 1685.5,1221.5 1698.0,1228.5"/>
<polyline points="1673.6,1213.4 1670.2,1223.4 1666.5,1233.2"/>
<polyline points="1698.0,1228.5 1708.8,1226.5 1718.9,1221.9"/>
<polyline points="1698.0,1228.5 1702.6,1233.8 1706.5,1239.7"/>
<polyline points="1698.0,1228.5 1704.1,1242.0 1708.0,1256.2"/>
<polyline points="1718.9,1221.9 1713.2,1231.2 1706.5,1239.7"/>
<polyline points="1624.7,1239.8 1629.9,1236.9 1635.5,1234.9"/>
<polyline points="1624.7,1239.8 1615.7,1246.6 1607.6,1254.2"/>
<polyline points="1624.7,1239.8 1633.2,1254.1 1644.8,1265.9"/>
<polyline points="1635.5,1234.9 1650.9,1232.0 1666.5,1233.2"/>
<polyline points="1666.5,1233.2 1670.1,1239.3 1671.4,1246.1"/>
<polyline points="1671.4,1246.1 1669.0,1254.1 1666.6,1262.0"/>
<polyline points="1671.4,1246.1 1674.4,1254.1 1678.5,1261.6"/>
<polyline points="1706.5,1239.7 1708.3,1247.8 1708.0,1256.2"/>
<polyline points="1596.5,1264.6 1601.6,1258.9 1607.6,1254.2"/>
<polyline points="1596.5,1264.6 1601.0,1268.0 1604.1,1272.7"/>
<polyline points="1596.5,1264.6 1603.4,1267.1 1608.9,1271.9"/>
<polyline points="1607.6,1254.2 1605.9,1263.5 1604.1,1272.7"/>
<polyline points="1607.6,1254.2 1607.6,1263.1 1608.9,1271.9"/>
<polyline points="1644.8,1265.9 1655.8,1264.6 1666.6,1262.0"/>
<polyline points="1644.8,1265.9 1637.5,1273.5 1628.5,1278.9"/>
<polyline points="1644.8,1265.9 1650.0,1276.1 1651.8,1287.3"/>
<polyline points="1666.6,1262.0 1672.6,1262.8 1678.5,1261.6"/>
<polyline points="1666.6,1262.0 1674.8,1267.4 1683.1,1272.5"/>
<polyline points="1678.5,1261.6 1681.0,1267.0 1683.1,1272.5"/>
<polyline points="1708.0,1256.2 1704.1,1266.1 1701.8,1276.5"/>
<polyline points="1573.1,1289.2 1565.5,1296.9 1559.5,1305.8"/>
<polyline points="1573.1,1289.2 1569.1,1294.2 1565.2,1299.3"/>
<polyline points="1573.1,1289.2 1581.5,1296.0 1587.3,1305.3"/>
<polyline points="1604.1,1272.7 1606.6,1272.6 1608.9,1271.9"/>
<polyline points="1608.9,1271.9 1619.1,1274.3 1628.5,1278.9"/>
<polyline points="1628.5,1278.9 1640.9,1281.0 1651.8,1287.3"/>
<polyline points="1651.8,1287.3 1642.9,1296.2 1633.1,1303.9"/>
<polyline points="1651.8,1287.3 1653.5,1289.1 1655.3,1290.8"/>
<polyline points="1683.1,1272.5 1692.3,1275.0 1701.8,1276.5"/>
<polyline points="1683.1,1272.5 1682.0,1284.7 1677.8,1296.2"/>
<polyline points="1701.8,1276.5 1704.6,1286.5 1709.0,1295.9"/>
<polyline points="1488.6,1304.2 1490.8,1312.2 1493.0,1320.2"/>
<polyline points="1488.6,1304.2 1490.5,1319.3 1489.0,1334.5"/>
<polyline points="1537.2,1307.5 1548.5,1308.2 1559.5,1305.8"/>
<polyline points="1537.2,1307.5 1532.2,1315.2 1529.2,1324.0"/>
<polyline points="1537.2,1307.5 1544.8,1315.8 1554.5,1321.2"/>
<polyline points="1559.5,1305.8 1562.6,1302.7 1565.2,1299.3"/>
<polyline points="1559.5,1305.8 1557.9,1313.8 1554.5,1321.2"/>
<polyline points="1565.2,1299.3 1575.9,1303.5 1587.3,1305.3"/>
<polyline points="1587.3,1305.3 1595.5,1312.7 1605.5,1317.1"/>
<polyline points="1610.5,1304.2 1621.8,1304.2 1633.1,1303.9"/>
<polyline points="1610.5,1304.2 1607.0,1310.3 1605.5,1317.1"/>
<polyline points="1610.5,1304.2 1619.6,1309.7 1630.2,1311.5"/>
<polyline points="1633.1,1303.9 1643.9,1296.9 1655.3,1290.8"/>
<polyline points="1633.1,1303.9 1630.9,1307.5 1630.2,1311.5"/>
<polyline points="1655.3,1290.8 1666.1,1295.5 1677.8,1296.2"/>
<polyline points="1677.8,1296.2 1693.4,1297.5 1709.0,1295.9"/>
<polyline points="1677.8,1296.2 1683.7,1306.8 1685.2,1319.0"/>
<polyline points="1677.8,1296.2 1691.0,1302.6 1703.4,1310.4"/>
<polyline points="1709.0,1295.9 1705.9,1303.0 1703.4,1310.4"/>
<polyline points="1493.0,1320.2 1490.7,1327.3 1489.0,1334.5"/>
<polyline points="1493.0,1320.2 1497.1,1329.9 1503.0,1338.7"/>
<polyline points="1516.7,1329.3 1523.1,1327.0 1529.2,1324.0"/>
<polyline points="1516.7,1329.3 1503.2,1333.6 1489.0,1334.5"/>
<polyline points="1516.7,1329.3 1509.0,1332.8 1503.0,1338.7"/>
<polyline points="1516.7,1329.3 1522.2,1336.8 1527.9,1344.1"/>
<polyline points="1529.2,1324.0 1527.0,1333.9 1527.9,1344.1"/>
<polyline points="1554.5,1321.2 1560.7,1323.1 1566.3,1326.3"/>
<polyline points="1566.3,1326.3 1561.5,1334.8 1560.3,1344.5"/>
<polyline points="1566.3,1326.3 1570.1,1330.6 1574.1,1334.7"/>
<polyline points="1605.5,1317.1 1608.7,1323.9 1613.4,1329.9"/>
<polyline points="1613.4,1329.9 1622.6,1321.5 1630.2,1311.5"/>
<polyline points="1613.4,1329.9 1602.8,1333.3 1593.7,1339.7"/>
<polyline points="1613.4,1329.9 1617.0,1339.4 1619.6,1349.3"/>
<polyline points="1613.4,1329.9 1622.3,1333.4 1629.7,1339.6"/>
<polyline points="1613.4,1329.9 1616.1,1340.6 1618.1,1351.6"/>
<polyline points="1630.2,1311.5 1641.3,1317.6 1650.5,1326.3"/>
<polyline points="1650.5,1326.3 1640.0,1332.8 1629.7,1339.6"/>
<polyline points="1650.5,1326.3 1653.5,1335.8 1658.8,1344.3"/>
<polyline points="1685.2,1319.0 1694.1,1314.2 1703.4,1310.4"/>
<polyline points="1685.2,1319.0 1688.3,1332.1 1687.8,1345.6"/>
<polyline points="1489.0,1334.5 1496.4,1335.3 1503.0,1338.7"/>
<polyline points="1489.0,1334.5 1487.9,1351.5 1485.9,1368.3"/>
<polyline points="1503.0,1338.7 1515.4,1341.8 1527.9,1344.1"/>
<polyline points="1503.0,1338.7 1496.5,1354.7 1485.9,1368.3"/>
<polyline points="1503.0,1338.7 1505.6,1350.7 1509.7,1362.3"/>
<polyline points="1527.9,1344.1 1519.9,1354.2 1509.7,1362.3"/>
<polyline points="1527.9,1344.1 1535.5,1355.9 1539.5,1369.3"/>
<polyline points="1560.3,1344.5 1568.1,1340.8 1574.1,1334.7"/>
<polyline points="1560.3,1344.5 1562.0,1347.3 1563.8,1350.1"/>
<polyline points="1560.3,1344.5 1564.9,1351.2 1571.3,1356.2"/>
<polyline points="1574.1,1334.7 1583.9,1337.3 1593.7,1339.7"/>
<polyline points="1574.1,1334.7 1570.1,1343.2 1563.8,1350.1"/>
<polyline points="1593.7,1339.7 1594.5,1346.3 1593.8,1352.9"/>
<polyline points="1619.6,1349.3 1624.5,1344.3 1629.7,1339.6"/>
<polyline points="1619.6,1349.3 1618.8,1350.4 1618.1,1351.6"/>
<polyline points="1619.6,1349.3 1625.8,1359.8 1634.1,1368.9"/>
<polyline points="1629.7,1339.6 1623.3,1345.0 1618.1,1351.6"/>
<polyline points="1658.8,1344.3 1660.9,1351.9 1663.8,1359.2"/>
<polyline points="1658.8,1344.3 1666.6,1356.1 1672.2,1369.1"/>
<polyline points="1687.8,1345.6 1695.7,1345.2 1703.5,1345.2"/>
<polyline points="1687.8,1345.6 1696.7,1349.4 1705.1,1354.1"/>
<polyline points="1687.8,1345.6 1703.3,1354.2 1718.7,1362.8"/>
<polyline points="1703.5,1345.2 1704.7,1349.6 1705.1,1354.1"/>
<polyline points="1703.5,1345.2 1711.0,1354.1 1718.7,1362.8"/>
<polyline points="1485.9,1368.3 1497.8,1365.1 1509.7,1362.3"/>
<polyline points="1509.7,1362.3 1525.1,1363.5 1539.5,1369.3"/>
<polyline points="1539.5,1369.3 1552.6,1361.0 1563.8,1350.1"/>
<polyline points="1539.5,1369.3 1554.9,1373.8 1570.5,1377.6"/>
<polyline points="1563.8,1350.1 1567.1,1353.6 1571.3,1356.2"/>
<polyline points="1563.8,1350.1 1566.0,1364.1 1570.5,1377.6"/>
<polyline points="1571.3,1356.2 1582.7,1355.6 1593.8,1352.9"/>
<polyline points="1571.3,1356.2 1568.8,1366.8 1570.5,1377.6"/>
<polyline points="1593.8,1352.9 1605.9,1351.7 1618.1,1351.6"/>
<polyline points="1618.1,1351.6 1626.4,1359.9 1634.1,1368.9"/>
<polyline points="1634.1,1368.9 1646.0,1369.9 1656.7,1375.4"/>
<polyline points="1663.8,1359.2 1667.7,1364.5 1672.2,1369.1"/>
<polyline points="1663.8,1359.2 1660.0,1367.2 1656.7,1375.4"/>
<polyline points="1672.2,1369.1 1664.3,1372.0 1656.7,1375.4"/>
<polyline points="1672.2,1369.1 1671.0,1379.3 1673.8,1389.2"/>
<polyline points="1672.2,1369.1 1682.9,1376.5 1691.7,1386.2"/>
<polyline points="1672.2,1369.1 1677.9,1381.4 1681.0,1394.5"/>
<polyline points="1705.1,1354.1 1711.5,1359.1 1718.7,1362.8"/>
<polyline points="1656.7,1375.4 1664.4,1383.4 1673.8,1389.2"/>
<polyline points="1673.8,1389.2 1682.7,1387.7 1691.7,1386.2"/>
<polyline points="1673.8,1389.2 1677.9,1391.2 1681.0,1394.5"/>
<polyline points="1691.7,1386.2 1686.6,1390.6 1681.0,1394.5"/>
</g>
<g fill="none" stroke="#0b0b0c" stroke-width="2" stroke-linejoin="round">
<polyline points="77,0 88,18.3 102.7,23.8 110,21.1 124.7,20.2 128.4,17.4 152.2,20.2 165,20.2 168.7,22 187,33 198,11 223.7,18.3 238.4,12.8 249.4,16.5 264,1.8 275,5.5 286,0"/>
<polyline points="165,0 166.9,18.3 167.8,38.5"/>
<polyline points="0,3.7 14.7,14.7 12.8,29.3 25.7,33 36.7,38.5 44,55 47.7,99 47.7,108.2 51.3,117.4 60.5,119.2 69.7,128.4 75.2,135.7 99,146.7 102.7,155.9"/>
<polyline points="3.7,7.3 16.5,27.5 73.4,104.5 100.9,155.9"/>
<polyline points="0,210.9 36.7,185.2 51.3,186.1 110,146.7 165,122.9 210.9,113.7 247.6,113.7 300,117.4 330,118"/>
<polyline points="0,212.7 33,192.6 91.7,159.5 137.5,132 165,124.7 220,104.5 260,96"/>
<polyline points="9.2,229.2 16.5,210.9 58.7,190.7 91.7,177.9 128.4,159.5 139.4,155.9 146.7,161.4 161.4,144.9 168.7,132 192.6,128.4 198,144.9 201.7,132 216.4,135.7 210.9,115.5 234.7,106.4 238.4,121 244,128.4 265.9,122.9 300,130.2 325,127"/>
<polyline points="106,172 110,159"/>
</g>
<g transform="translate(573,0) scale(0.33985)" fill="none" stroke="#5b616d" stroke-width="1.3">
<polyline points="0,60 100,120 180,110 260,210 400,270 470,240 480,210 600,140 640,70 750,70 780,150 780,190 740,210 730,260 750,350 700,380 620,350 580,370 560,430 580,460 550,480 540,550 570,610 550,720 610,710 620,730 660,740 670,780 720,780 740,810 710,830 690,880 720,940 700,980 640,1000 630,1150 540,1160 560,1250 630,1360 650,1418" vector-effect="non-scaling-stroke"/>
<polyline points="0,330 120,380 220,370 370,330 360,250" vector-effect="non-scaling-stroke"/>
<polyline points="680,880 550,820 480,800 470,870 510,940 440,930 440,970 390,960 310,930 240,920 0,930" vector-effect="non-scaling-stroke"/>
<polyline points="750,660 900,640" vector-effect="non-scaling-stroke"/>
<polyline points="0,1040 100,1030 240,1110 300,1070 310,1000 180,990 100,1000" vector-effect="non-scaling-stroke"/>
<polyline points="1100,1418 1090,1300 1130,1200" vector-effect="non-scaling-stroke"/>
<polyline points="1370,170 1380,230 1300,260 1250,300" vector-effect="non-scaling-stroke"/>
</g>
<g transform="translate(620,560) scale(0.56436)" fill="none" stroke="#59606c" stroke-width="1.3">
<polyline points="230,0 300,60 280,130 330,180 420,200 480,300 520,360 480,440 420,460 400,540 450,600 420,680 450,760 500,780 540,720 600,700 640,640 600,600 620,520 700,440 760,400 830,360 900,320 980,300 1060,270" vector-effect="non-scaling-stroke"/>
<polyline points="520,360 600,330 700,260 780,260 850,240 900,180 920,100 880,20" vector-effect="non-scaling-stroke"/>
<polyline points="600,700 700,760 760,840 800,900 830,960 900,980 960,920 1040,880 1100,860" vector-effect="non-scaling-stroke"/>
<polyline points="450,760 400,820 350,900 300,980 250,1050 200,1100" vector-effect="non-scaling-stroke"/>
<polyline points="540,720 560,800 600,860 560,920 520,960 520,1050 560,1100" vector-effect="non-scaling-stroke"/>
<polyline points="800,600 860,660 900,740 860,800 800,820 760,840" vector-effect="non-scaling-stroke"/>
<polyline points="160,940 260,920 330,950 380,900 420,960 460,1000 500,1000" vector-effect="non-scaling-stroke"/>
<polyline points="960,920 960,1000 900,1000" vector-effect="non-scaling-stroke"/>
<polyline points="1040,700 1000,760 1040,820 1100,800" vector-effect="non-scaling-stroke"/>
</g>
<polyline points="657.8,592.3 671.4,572 685,568.5 708.7,565 739.2,583.8 752.8,577 756.2,549.9 754.5,541.4 776.5,532.9 790.1,512.5 807,499 810.5,482 831.3,462.2 878.9,457.1 895.9,465.6 912.8,458.8 946.8,455.4 963.8,460.5 994.4,463.9 1021.6,448.6 1031.8,438.4 1035.2,401 1045.4,396" fill="none" stroke="#111" stroke-width="5" stroke-opacity="0.5"/>
<polyline points="657.8,592.3 671.4,572 685,568.5 708.7,565 739.2,583.8 752.8,577 756.2,549.9 754.5,541.4 776.5,532.9 790.1,512.5 807,499 810.5,482 831.3,462.2 878.9,457.1 895.9,465.6 912.8,458.8 946.8,455.4 963.8,460.5 994.4,463.9 1021.6,448.6 1031.8,438.4 1035.2,401 1045.4,396" fill="none" stroke="#f2f2f2" stroke-width="2.4" stroke-dasharray="11 6"/>
<polyline points="440,-5 428,0 418,10 401,20 384,34 374,51 336.5,102 331.4,115.6" fill="none" stroke="#f2f2f2" stroke-width="2.4" stroke-dasharray="11 6"/>
<polygon points="735.4,618.6 743.6,642.7 756.3,674.5 775.3,699.8 762.6,725.2 775.3,744.3 800.7,769.6 788,774.7 762.6,757 711.9,734.7 656,712.5" fill="#2d3d8d"/>
<polygon points="726,690 733,688 736,695 729,698" fill="#3b404b"/>
<polygon points="712,668 718,666 720,672 714,674" fill="#3b404b"/>
<polyline points="711.9,734.7 656,712.5 735.4,618.6" fill="none" stroke="#8fc3f5" stroke-width="4" stroke-dasharray="13 11"/>
<polygon points="930,1196 945,1200 956,1192 958,1212 952,1232 987.4,1235.3 987.4,1263.4 946.7,1263.4 943,1232 938,1212" fill="#2d3d8d"/>
<polyline points="987.4,1233 987.4,1263.4 946.7,1263.4" fill="none" stroke="#8fc3f5" stroke-width="4" stroke-dasharray="14 6"/>
<polygon points="1104.7,1156.3 1125,1161.4 1176,1151.2 1183.7,1146.1 1165.9,1179.3 1125.1,1192 1114.9,1181.8" fill="#2d3d8d"/>
<polyline points="1183.7,1146.1 1165.9,1179.3 1125.1,1192 1104.7,1156.3" fill="none" stroke="#8fc3f5" stroke-width="4" stroke-dasharray="14 6"/>
<rect x="1206.5" y="1065" width="47.5" height="42.4" fill="#2d3d8d"/>
<polyline points="1240,1065 1254,1068 1254,1107.4 1206.5,1107.4" fill="none" stroke="#8fc3f5" stroke-width="4" stroke-dasharray="14 6"/>
<path d="M750.3,723.5 C745.1,717.1 741.6,712.1 741.6,709.5 A8.7,8.7 0 1 1 759.0,709.5 C759.0,712.1 755.5,717.1 750.3,723.5Z" fill="#e9534c"/><circle cx="750.3" cy="709.5" r="3.1" fill="#2d3d8d"/>
<path d="M950.2,1229.8 C944.7,1223.1 941.0,1218.0 941.0,1215.2 A9.2,9.2 0 1 1 959.4,1215.2 C959.4,1218.0 955.7,1223.1 950.2,1229.8Z" fill="#e9534c"/><circle cx="950.2" cy="1215.2" r="3.3" fill="#2d3d8d"/>
<path d="M1118.2,1188.0 C1113.2,1181.7 1109.8,1176.4 1109.8,1173.9 A8.4,8.4 0 1 1 1126.6,1173.9 C1126.6,1176.4 1123.2,1181.7 1118.2,1188.0Z" fill="#e9534c"/><circle cx="1118.2" cy="1173.9" r="3.0" fill="#2d3d8d"/>
<path d="M1148.3,1174.2 C1143.0,1167.5 1139.4,1161.8 1139.4,1159.1 A8.9,8.9 0 1 1 1157.2,1159.1 C1157.2,1161.8 1153.6,1167.5 1148.3,1174.2Z" fill="#e9534c"/><circle cx="1148.3" cy="1159.1" r="3.2" fill="#2d3d8d"/>
<path d="M1224.0,1093.8 C1218.6,1087.4 1215.0,1082.7 1215.0,1080.0 A9.0,9.0 0 1 1 1233.0,1080.0 C1233.0,1082.7 1229.4,1087.4 1224.0,1093.8Z" fill="#e9534c"/><circle cx="1224.0" cy="1080.0" r="3.2" fill="#2d3d8d"/>
<text x="691" y="22" font-family="Liberation Sans" font-size="29.6" font-weight="700" fill="#f4f4f4" stroke="#101113" stroke-opacity="0.9" stroke-width="5" stroke-linejoin="round" paint-order="stroke" textLength="189" lengthAdjust="spacingAndGlyphs" >North Korea</text>
<text x="311" y="72" font-family="Liberation Sans" font-size="26" font-weight="400" fill="#e9e9e9" stroke="#101113" stroke-opacity="0.9" stroke-width="5" stroke-linejoin="round" paint-order="stroke" textLength="106" lengthAdjust="spacingAndGlyphs" >Dandong</text>
<text x="527" y="316.8" font-family="Liberation Sans" font-size="28.7" font-weight="400" fill="#e9e9e9" stroke="#101113" stroke-opacity="0.9" stroke-width="5" stroke-linejoin="round" paint-order="stroke" textLength="136" lengthAdjust="spacingAndGlyphs" >Pyongyang</text>
<text x="491" y="378.2" font-family="Liberation Sans" font-size="28.7" font-weight="400" fill="#e9e9e9" stroke="#101113" stroke-opacity="0.9" stroke-width="5" stroke-linejoin="round" paint-order="stroke" textLength="93" lengthAdjust="spacingAndGlyphs" >Nampo</text>
<text x="771.5" y="634.5" font-family="Liberation Sans" font-size="29" font-weight="400" fill="#e9e9e9" stroke="#101113" stroke-opacity="0.9" stroke-width="5" stroke-linejoin="round" paint-order="stroke" textLength="71" lengthAdjust="spacingAndGlyphs" >Seoul</text>
<text x="918" y="858.5" font-family="Liberation Sans" font-size="35.4" font-weight="700" fill="#f4f4f4" stroke="#101113" stroke-opacity="0.9" stroke-width="5" stroke-linejoin="round" paint-order="stroke" textLength="189" lengthAdjust="spacingAndGlyphs" >South Korea</text>
<text x="797" y="1008.9" font-family="Liberation Sans" font-size="24.6" font-weight="400" fill="#e9e9e9" stroke="#101113" stroke-opacity="0.9" stroke-width="5" stroke-linejoin="round" paint-order="stroke" textLength="78" lengthAdjust="spacingAndGlyphs" >Jeonju</text>
<text x="730" y="1149.9" font-family="Liberation Sans" font-size="27" font-weight="400" fill="#e9e9e9" stroke="#101113" stroke-opacity="0.9" stroke-width="5" stroke-linejoin="round" paint-order="stroke" textLength="111" lengthAdjust="spacingAndGlyphs" >Gwangju</text>
<text x="1046" y="1000.4" font-family="Liberation Sans" font-size="27" font-weight="400" fill="#e9e9e9" stroke="#101113" stroke-opacity="0.9" stroke-width="5" stroke-linejoin="round" paint-order="stroke" textLength="82" lengthAdjust="spacingAndGlyphs" >Daegu</text>
<text x="1173" y="1070" font-family="Liberation Sans" font-size="28" font-weight="400" fill="#e9e9e9" stroke="#101113" stroke-opacity="0.9" stroke-width="5" stroke-linejoin="round" paint-order="stroke" textLength="73" lengthAdjust="spacingAndGlyphs" >Ulsan</text>
<text x="1129" y="1147.1" font-family="Liberation Sans" font-size="29.6" font-weight="400" fill="#e9e9e9" stroke="#101113" stroke-opacity="0.9" stroke-width="5" stroke-linejoin="round" paint-order="stroke" textLength="80" lengthAdjust="spacingAndGlyphs" >Busan</text>
<text x="1420.5" y="650" font-family="Liberation Sans" font-size="24.6" font-weight="400" fill="#e9e9e9" stroke="#101113" stroke-opacity="0.9" stroke-width="5" stroke-linejoin="round" paint-order="stroke" textLength="124" lengthAdjust="spacingAndGlyphs" >Ulleung-eup</text>
<text x="1686.5" y="1312.4" font-family="Liberation Sans" font-size="26" font-weight="400" fill="#e9e9e9" stroke="#101113" stroke-opacity="0.9" stroke-width="5" stroke-linejoin="round" paint-order="stroke" textLength="40" lengthAdjust="spacingAndGlyphs" >Hin</text>
<text x="-8" y="647.6" font-family="Liberation Sans" font-size="28" font-weight="400" fill="#e9e9e9" stroke="#101113" stroke-opacity="0.9" stroke-width="5" stroke-linejoin="round" paint-order="stroke" textLength="20" lengthAdjust="spacingAndGlyphs" >ai</text>
<text x="125" y="1047.7" font-family="Liberation Sans" font-style="italic" font-size="35" fill="#a9a9a9" stroke="#1c1e1e" stroke-width="0.3" textLength="122" lengthAdjust="spacing">Yellow</text>
<text x="150" y="1094.6" font-family="Liberation Sans" font-style="italic" font-size="35" fill="#a9a9a9" stroke="#1c1e1e" stroke-width="0.3" textLength="67" lengthAdjust="spacing">Sea</text>
</svg>
<div class="r" style="left:41px;top:41px;width:335px;height:63px;background:#fff;border-radius:32px;border:2px solid #d9d9d9"></div>
<div class="r" style="left:74px;top:57px;width:32px;height:31px;background:#fff;border-radius:7px;border:2px solid #cfcfcf"></div>
<div class="t" style="left:121px;top:58.6px;font-size:29px;color:#1b1b1b;letter-spacing:0.35px">Selected only (5)</div>
<div class="r" style="left:1200px;top:40px;width:235px;height:64px;background:#fff;border-radius:32px;border:2px solid #d9d9d9"></div>
<svg style="left:1236px;top:59px" width="28" height="28" viewBox="0 0 28 28"><path d="M26 2 C22 4 16 9 12 14 L15 17 C20 13 24 7 26 2Z M11 15.5 C7 15 4 18 4 21 C4 23 3 24.5 1.5 25.5 C6 26.5 13 25 13.5 18.5Z" fill="#111"/></svg>
<div class="t" style="left:1276px;top:58.6px;font-size:29px;color:#1b1b1b;letter-spacing:0.35px">Dark map</div>
<div class="r" style="left:1451px;top:40px;width:229px;height:64px;background:#fff;border-radius:32px;border:2px solid #d9d9d9"></div>
<svg style="left:1484px;top:59px" width="30" height="28" viewBox="0 0 30 28"><path d="M1 5 L9 2 L9 24 L1 27Z M11 2 L19 5 L19 27 L11 24Z M21 5 L29 2 L29 24 L21 27Z" fill="#111"/></svg>
<div class="t" style="left:1527px;top:58.6px;font-size:29px;color:#1b1b1b;letter-spacing:0.35px">Standard</div>
<div class="r" style="left:1173px;top:1407px;width:547px;height:39px;background:rgba(255,255,255,0.5)"></div>
<div class="t" style="left:1183px;top:1415px;font-size:24.6px;color:#2e2e2e;letter-spacing:0.1px">© Mapbox © OpenStreetMap</div>
<div class="t" style="left:1511px;top:1415px;font-size:24.6px;color:#2e2e2e;font-weight:700;letter-spacing:-0.35px">Improve this map</div>
</div>
</body></html>
